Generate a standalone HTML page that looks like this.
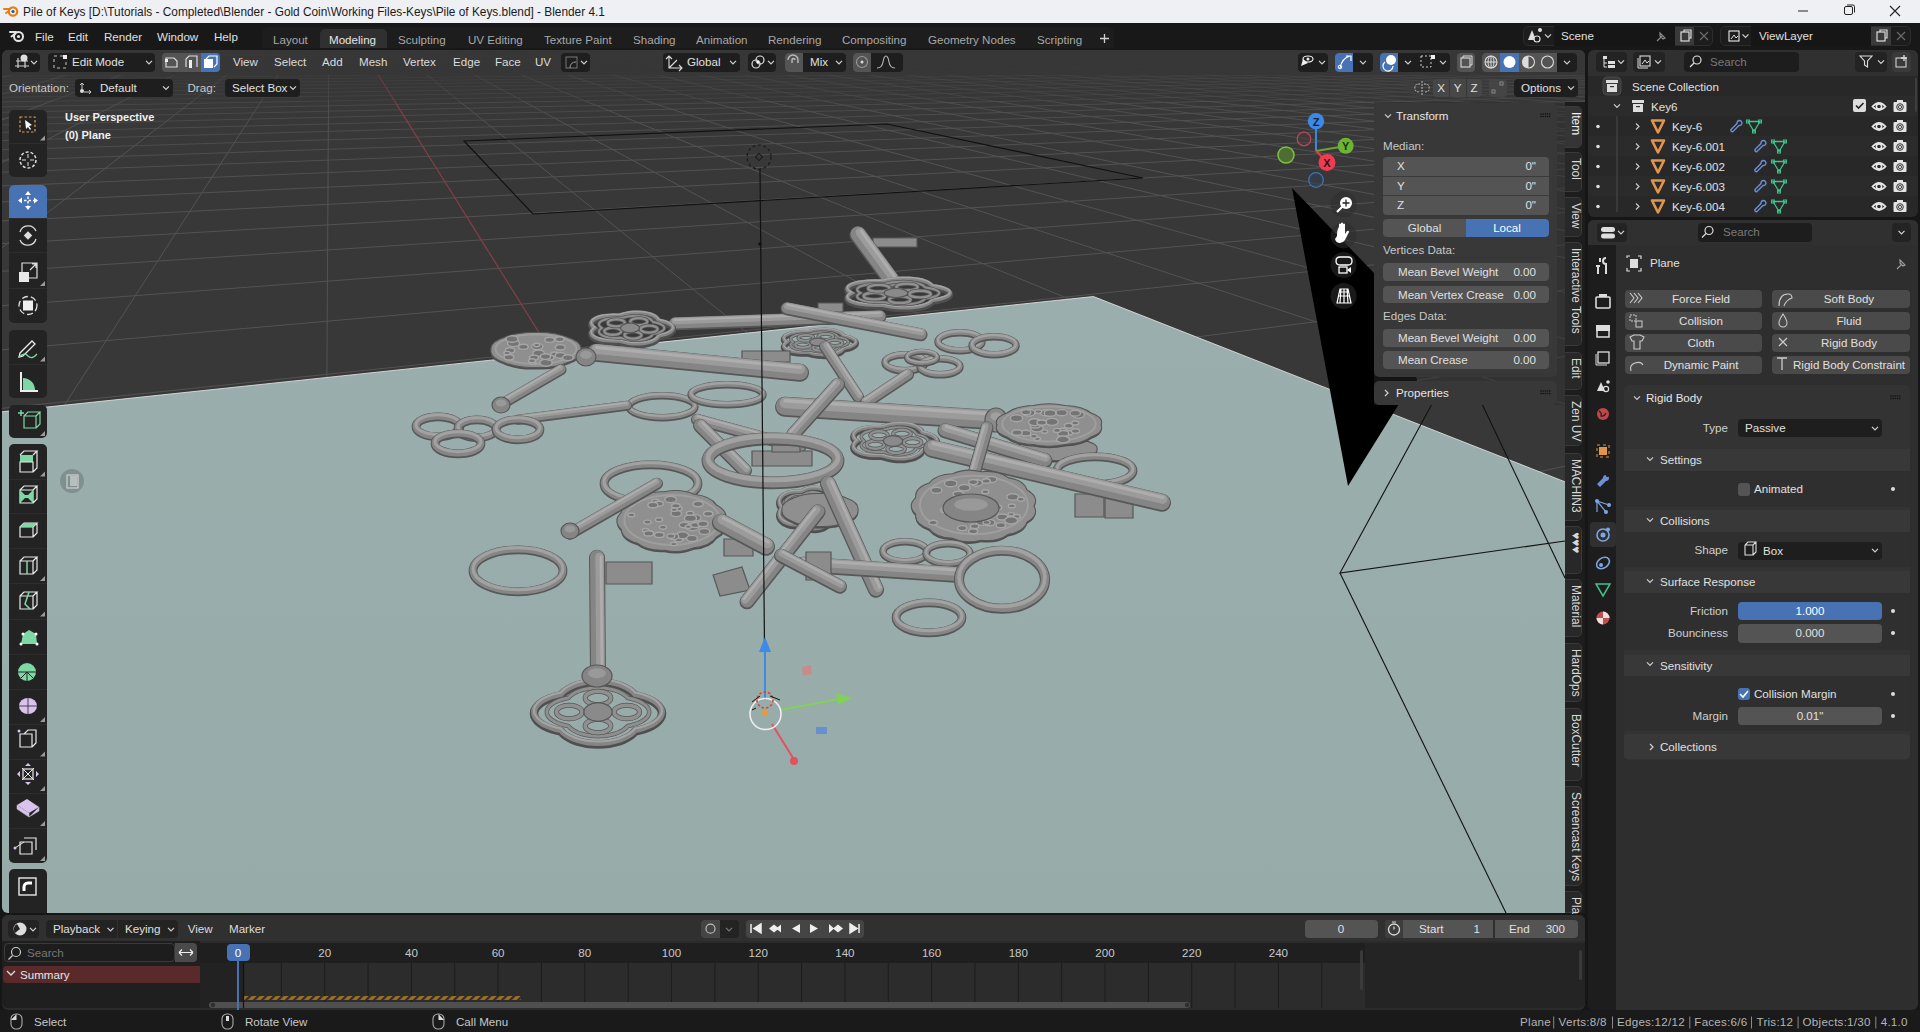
<!DOCTYPE html><html><head><meta charset="utf-8"><style>*{margin:0;padding:0;box-sizing:border-box}
html,body{width:1920px;height:1032px;overflow:hidden;background:#161616;font-family:"Liberation Sans",sans-serif;color:#dcdcdc}
.a{position:absolute}
.t{position:absolute;white-space:nowrap;line-height:1}
svg{overflow:visible}
</style></head><body><div class="a" style="left:0px;top:0px;width:1920px;height:23px;background:#eff0f4;border-radius:0px;"></div><svg class="a" style="left:0px;top:0px;" width="40" height="23" viewBox="0 0 40 23"><circle cx="13" cy="11.5" r="4.2" fill="none" stroke="#e87d0d" stroke-width="2.2"/><circle cx="13" cy="11.5" r="1.6" fill="#265787"/><path d="M4,9 L10,9 M6,13 L9,11" stroke="#e87d0d" stroke-width="2" stroke-linecap="round"/></svg><div class="t" style="left:23px;top:6.9935px;font-size:11.85px;color:#1a1a1a;font-weight:normal;">Pile of Keys [D:\Tutorials - Completed\Blender - Gold Coin\Working Files-Keys\Pile of Keys.blend] - Blender 4.1</div><svg class="a" style="left:1780px;top:0px;" width="140" height="23" viewBox="1780 0 140 23"><path d="M1798,11 h10" stroke="#222" stroke-width="1"/><rect x="1844.5" y="6.5" width="8" height="8" rx="1.5" fill="none" stroke="#222"/><path d="M1847,5 h6 a1.5,1.5 0 0 1 1.5,1.5 v6" fill="none" stroke="#222"/><path d="M1890,6 l10,10 M1900,6 l-10,10" stroke="#222" stroke-width="1.1"/></svg><div class="a" style="left:0px;top:23px;width:1920px;height:27px;background:#181818;border-radius:0px;"></div><svg class="a" style="left:0px;top:23px;" width="30" height="27" viewBox="0 23 30 27"><circle cx="18.5" cy="36.5" r="4.5" fill="none" stroke="#e6e6e6" stroke-width="2"/><circle cx="18.5" cy="36.5" r="1.6" fill="#e6e6e6"/><path d="M10,32 h6 M11.5,36.5 l4,-3" stroke="#e6e6e6" stroke-width="2" stroke-linecap="round"/></svg><div class="t" style="left:35px;top:31.316px;font-size:11.6px;color:#e0e0e0;font-weight:normal;">File</div><div class="t" style="left:68px;top:31.316px;font-size:11.6px;color:#e0e0e0;font-weight:normal;">Edit</div><div class="t" style="left:104px;top:31.316px;font-size:11.6px;color:#e0e0e0;font-weight:normal;">Render</div><div class="t" style="left:157px;top:31.316px;font-size:11.6px;color:#e0e0e0;font-weight:normal;">Window</div><div class="t" style="left:214px;top:31.316px;font-size:11.6px;color:#e0e0e0;font-weight:normal;">Help</div><div class="a" style="left:262px;top:27px;width:852px;height:20.5px;background:#1d1d1d;border-radius:6px 6px 0 0;"></div><div class="a" style="left:320px;top:29px;width:67px;height:18.5px;background:#303030;border-radius:5px 5px 0 0;"></div><div class="t" style="left:273px;top:33.816px;font-size:11.6px;color:#a8a8a8;font-weight:normal;">Layout</div><div class="t" style="left:329px;top:33.816px;font-size:11.6px;color:#e6e6e6;font-weight:normal;">Modeling</div><div class="t" style="left:398px;top:33.816px;font-size:11.6px;color:#a8a8a8;font-weight:normal;">Sculpting</div><div class="t" style="left:468px;top:33.816px;font-size:11.6px;color:#a8a8a8;font-weight:normal;">UV Editing</div><div class="t" style="left:544px;top:33.816px;font-size:11.6px;color:#a8a8a8;font-weight:normal;">Texture Paint</div><div class="t" style="left:633px;top:33.816px;font-size:11.6px;color:#a8a8a8;font-weight:normal;">Shading</div><div class="t" style="left:696px;top:33.816px;font-size:11.6px;color:#a8a8a8;font-weight:normal;">Animation</div><div class="t" style="left:768px;top:33.816px;font-size:11.6px;color:#a8a8a8;font-weight:normal;">Rendering</div><div class="t" style="left:842px;top:33.816px;font-size:11.6px;color:#a8a8a8;font-weight:normal;">Compositing</div><div class="t" style="left:928px;top:33.816px;font-size:11.6px;color:#a8a8a8;font-weight:normal;">Geometry Nodes</div><div class="t" style="left:1037px;top:33.816px;font-size:11.6px;color:#a8a8a8;font-weight:normal;">Scripting</div><svg class="a" style="left:1095px;top:28px;" width="20" height="22" viewBox="1095 28 20 22"><path d="M1100,38.5 h9 M1104.5,34 v9" stroke="#cfcfcf" stroke-width="1.3"/></svg><div class="a" style="left:1523px;top:26px;width:190px;height:19.5px;background:#1d1d1d;border-radius:5px;border:1px solid #2c2c2c"></div><div class="a" style="left:1554px;top:26px;width:121px;height:19.5px;background:#161616;border-radius:0px;"></div><div class="a" style="left:1675px;top:27px;width:19px;height:17.5px;background:#3a3a3a;border-radius:0px;"></div><div class="t" style="left:1561px;top:30.316px;font-size:11.6px;color:#e0e0e0;font-weight:normal;">Scene</div><div class="a" style="left:1720px;top:26px;width:191px;height:19.5px;background:#1d1d1d;border-radius:5px;border:1px solid #2c2c2c"></div><div class="a" style="left:1751px;top:26px;width:120px;height:19.5px;background:#161616;border-radius:0px;"></div><div class="a" style="left:1871px;top:27px;width:20px;height:17.5px;background:#3a3a3a;border-radius:0px;"></div><div class="t" style="left:1759px;top:30.316px;font-size:11.6px;color:#e0e0e0;font-weight:normal;">ViewLayer</div><svg class="a" style="left:1523px;top:26px;" width="390" height="20" viewBox="1523 26 390 20"><path d="M1528,40 l4,-10 l4,10 z" fill="#ddd"/><circle cx="1537" cy="39" r="3" fill="#1d1d1d" stroke="#ddd" stroke-width="1.2"/><circle cx="1540" cy="30" r="2" fill="#ddd"/><path d="M1545,34.4 l3,3 l3,-3" fill="none" stroke="#cfcfcf" stroke-width="1.3"/><path d="M1657,41 l5,-5 M1660,33 l5,5 l-2,1 l-3,-3 z" stroke="#8a8a8a" fill="none" stroke-width="1.2"/><rect x="1681" y="32" width="8" height="9" fill="none" stroke="#ddd" stroke-width="1.2"/><path d="M1684,32 v-2 h7 v8 h-2" fill="none" stroke="#ddd" stroke-width="1.2"/><path d="M1700,32 l8,8 M1708,32 l-8,8" stroke="#6a6a6a" stroke-width="1.2"/><rect x="1729" y="31" width="10" height="10" fill="none" stroke="#ddd" stroke-width="1.2"/><path d="M1731,39 l3,-4 l2,3 l2,-2" stroke="#ddd" fill="none"/><path d="M1742.5,34.4 l3,3 l3,-3" fill="none" stroke="#cfcfcf" stroke-width="1.3"/><rect x="1877" y="32" width="8" height="9" fill="none" stroke="#ddd" stroke-width="1.2"/><path d="M1880,32 v-2 h7 v8 h-2" fill="none" stroke="#ddd" stroke-width="1.2"/><path d="M1897,32 l8,8 M1905,32 l-8,8" stroke="#6a6a6a" stroke-width="1.2"/></svg><svg class="a" style="left:0px;top:0px;" width="1920" height="1032" viewBox="0 0 1920 1032"><defs><clipPath id="vpc"><rect x="2" y="50" width="1583" height="863" rx="6"/></clipPath><linearGradient id="pg" x1="0" y1="300" x2="0" y2="913" gradientUnits="userSpaceOnUse"><stop offset="0" stop-color="#9aaead"/><stop offset="1" stop-color="#97aba9"/></linearGradient></defs><g clip-path="url(#vpc)"><rect x="2" y="50" width="1583" height="863" fill="#383838"/><g stroke="#535353" stroke-width="1" fill="none"><line x1="635.9" y1="984.6" x2="1753.9" y2="616.6" stroke-opacity="1.00"/><line x1="-73.7" y1="825.3" x2="1787.4" y2="417.4" stroke-opacity="1.00"/><line x1="-194" y1="642.4" x2="1778.2" y2="321.9" stroke-opacity="1.00"/><line x1="-172.6" y1="512.1" x2="1793.6" y2="260.6" stroke-opacity="1.00"/><line x1="-158.3" y1="425.1" x2="1786.5" y2="221.6" stroke-opacity="1.00"/><line x1="-148.1" y1="363" x2="1796.4" y2="192.1" stroke-opacity="1.00"/><line x1="-140.4" y1="316.4" x2="1790.7" y2="171.1" stroke-opacity="1.00"/><line x1="-188.2" y1="283.7" x2="1797.9" y2="153.8" stroke-opacity="1.00"/><line x1="-177.9" y1="254" x2="1793.2" y2="140.6" stroke-opacity="1.00"/><line x1="-169.5" y1="229.7" x2="1798.9" y2="129.3" stroke-opacity="0.99"/><line x1="-162.6" y1="209.5" x2="1794.9" y2="120.3" stroke-opacity="0.96"/><line x1="-194.3" y1="194" x2="1799.6" y2="112.3" stroke-opacity="0.92"/><line x1="-186.5" y1="179.2" x2="1796.1" y2="105.7" stroke-opacity="0.88"/><line x1="-179.7" y1="166.4" x2="1793.1" y2="100" stroke-opacity="0.84"/><line x1="-173.8" y1="155.2" x2="1797" y2="94.8" stroke-opacity="0.80"/><line x1="-197.6" y1="146.1" x2="1794.3" y2="90.4" stroke-opacity="0.76"/><line x1="-191.3" y1="137.3" x2="1797.7" y2="86.3" stroke-opacity="0.72"/><line x1="-185.7" y1="129.4" x2="1795.2" y2="82.7" stroke-opacity="0.69"/><line x1="-180.6" y1="122.3" x2="1798.3" y2="79.4" stroke-opacity="0.65"/><line x1="-199.6" y1="116.3" x2="1796" y2="76.6" stroke-opacity="0.61"/><line x1="-194.4" y1="110.5" x2="1798.7" y2="73.9" stroke-opacity="0.57"/><line x1="-189.6" y1="105.1" x2="1796.6" y2="71.5" stroke-opacity="0.53"/><line x1="-185.2" y1="100.2" x2="1799.1" y2="69.2" stroke-opacity="0.49"/><line x1="-181.2" y1="95.7" x2="1797.2" y2="67.2" stroke-opacity="0.45"/><line x1="-196.5" y1="91.8" x2="1799.4" y2="65.3" stroke-opacity="0.41"/><line x1="-192.3" y1="88" x2="1797.6" y2="63.5" stroke-opacity="0.38"/><line x1="-188.5" y1="84.4" x2="1799.7" y2="61.9" stroke-opacity="0.34"/><line x1="-184.9" y1="81.1" x2="1798" y2="60.4" stroke-opacity="0.30"/><line x1="-198.1" y1="78.1" x2="1800" y2="59" stroke-opacity="0.30"/><line x1="-194.4" y1="75.2" x2="1798.4" y2="57.6" stroke-opacity="0.30"/><line x1="-190.9" y1="72.5" x2="1796.9" y2="56.4" stroke-opacity="0.30"/><line x1="-187.7" y1="69.9" x2="1798.7" y2="55.2" stroke-opacity="0.30"/><line x1="-199.3" y1="67.6" x2="1797.3" y2="54.1" stroke-opacity="0.30"/><line x1="-196" y1="65.4" x2="1798.9" y2="53.1" stroke-opacity="0.30"/><line x1="-192.9" y1="63.2" x2="1797.6" y2="52.1" stroke-opacity="0.30"/><line x1="-189.9" y1="61.2" x2="1799.2" y2="51.2" stroke-opacity="0.30"/><line x1="-187.1" y1="59.3" x2="1797.9" y2="50.3" stroke-opacity="0.30"/><line x1="-197.2" y1="57.5" x2="1799.4" y2="49.5" stroke-opacity="0.30"/><line x1="-194.4" y1="55.8" x2="1798.2" y2="48.7" stroke-opacity="0.30"/><line x1="-191.7" y1="54.1" x2="1799.6" y2="47.9" stroke-opacity="0.30"/><line x1="-189.2" y1="52.6" x2="1798.4" y2="47.2" stroke-opacity="0.30"/><line x1="-198.3" y1="51.1" x2="1799.8" y2="46.5" stroke-opacity="0.30"/><line x1="-195.7" y1="49.7" x2="1798.6" y2="45.9" stroke-opacity="0.30"/><line x1="-193.2" y1="48.3" x2="1799.9" y2="45.3" stroke-opacity="0.30"/><line x1="-190.8" y1="47" x2="1798.8" y2="44.7" stroke-opacity="0.30"/><line x1="-199.1" y1="45.8" x2="1797.8" y2="44.1" stroke-opacity="0.30"/><line x1="-196.7" y1="44.6" x2="1799" y2="43.6" stroke-opacity="0.30"/><line x1="-194.4" y1="43.5" x2="1798" y2="43" stroke-opacity="0.30"/><line x1="-192.2" y1="42.4" x2="1799.2" y2="42.5" stroke-opacity="0.30"/><line x1="-199.9" y1="41.3" x2="1798.3" y2="42" stroke-opacity="0.30"/><line x1="-197.6" y1="40.3" x2="1799.4" y2="41.6" stroke-opacity="0.30"/><line x1="-195.5" y1="39.3" x2="1798.4" y2="41.1" stroke-opacity="0.30"/><line x1="-193.4" y1="38.4" x2="1799.5" y2="40.7" stroke-opacity="0.30"/><line x1="-191.4" y1="37.5" x2="1798.6" y2="40.3" stroke-opacity="0.30"/><line x1="-198.4" y1="36.6" x2="1799.7" y2="39.9" stroke-opacity="0.30"/><line x1="-196.4" y1="35.8" x2="1798.8" y2="39.5" stroke-opacity="0.30"/><line x1="-194.4" y1="35" x2="1799.8" y2="39.1" stroke-opacity="0.30"/><line x1="-192.5" y1="34.2" x2="1798.9" y2="38.8" stroke-opacity="0.30"/><line x1="-199" y1="33.4" x2="1799.9" y2="38.4" stroke-opacity="0.30"/><line x1="-197.1" y1="32.7" x2="1799.1" y2="38.1" stroke-opacity="0.30"/><line x1="-195.3" y1="32" x2="1798.3" y2="37.8" stroke-opacity="0.30"/><line x1="-193.5" y1="31.3" x2="1799.2" y2="37.4" stroke-opacity="0.30"/><line x1="-199.6" y1="30.6" x2="1798.5" y2="37.1" stroke-opacity="0.30"/><line x1="-182.5" y1="30" x2="1799.4" y2="36.8" stroke-opacity="0.30"/><line x1="-9.6" y1="30" x2="1798.6" y2="36.5" stroke-opacity="0.30"/><line x1="143.4" y1="30" x2="1799.5" y2="36.3" stroke-opacity="0.30"/><line x1="279.6" y1="30" x2="1798.8" y2="36" stroke-opacity="0.30"/><line x1="-215.8" y1="33.4" x2="-185.7" y2="31.3" stroke-opacity="0.30"/><line x1="-185.7" y1="31.3" x2="-158.7" y2="29.5" stroke-opacity="0.30"/><line x1="-213.9" y1="35.7" x2="-182.5" y2="33.5" stroke-opacity="0.30"/><line x1="-182.5" y1="33.5" x2="-154.4" y2="31.4" stroke-opacity="0.30"/><line x1="-154.4" y1="31.4" x2="-129.3" y2="29.6" stroke-opacity="0.30"/><line x1="-211.9" y1="38.4" x2="-179" y2="35.8" stroke-opacity="0.30"/><line x1="-179" y1="35.8" x2="-149.8" y2="33.5" stroke-opacity="0.30"/><line x1="-149.8" y1="33.5" x2="-123.7" y2="31.5" stroke-opacity="0.30"/><line x1="-123.7" y1="31.5" x2="-100.4" y2="29.7" stroke-opacity="0.30"/><line x1="-209.7" y1="41.3" x2="-175.1" y2="38.4" stroke-opacity="0.30"/><line x1="-175.1" y1="38.4" x2="-144.6" y2="35.9" stroke-opacity="0.30"/><line x1="-144.6" y1="35.9" x2="-117.6" y2="33.6" stroke-opacity="0.30"/><line x1="-117.6" y1="33.6" x2="-93.6" y2="31.6" stroke-opacity="0.30"/><line x1="-93.6" y1="31.6" x2="-72" y2="29.8" stroke-opacity="0.30"/><line x1="-207.1" y1="44.6" x2="-170.7" y2="41.3" stroke-opacity="0.30"/><line x1="-170.7" y1="41.3" x2="-138.9" y2="38.5" stroke-opacity="0.30"/><line x1="-138.9" y1="38.5" x2="-110.9" y2="35.9" stroke-opacity="0.30"/><line x1="-110.9" y1="35.9" x2="-86.1" y2="33.7" stroke-opacity="0.30"/><line x1="-86.1" y1="33.7" x2="-63.9" y2="31.7" stroke-opacity="0.30"/><line x1="-63.9" y1="31.7" x2="-44" y2="29.9" stroke-opacity="0.30"/><line x1="-204.3" y1="48.3" x2="-165.8" y2="44.6" stroke-opacity="0.30"/><line x1="-165.8" y1="44.6" x2="-132.5" y2="41.3" stroke-opacity="0.30"/><line x1="-132.5" y1="41.3" x2="-103.5" y2="38.5" stroke-opacity="0.30"/><line x1="-103.5" y1="38.5" x2="-77.8" y2="36" stroke-opacity="0.30"/><line x1="-77.8" y1="36" x2="-55" y2="33.8" stroke-opacity="0.30"/><line x1="-55" y1="33.8" x2="-34.7" y2="31.8" stroke-opacity="0.30"/><line x1="-34.7" y1="31.8" x2="-16.4" y2="30" stroke-opacity="0.30"/><line x1="-201" y1="52.6" x2="-160.3" y2="48.3" stroke-opacity="0.36"/><line x1="-160.3" y1="48.3" x2="-125.4" y2="44.6" stroke-opacity="0.30"/><line x1="-125.4" y1="44.6" x2="-95.2" y2="41.4" stroke-opacity="0.30"/><line x1="-95.2" y1="41.4" x2="-68.7" y2="38.5" stroke-opacity="0.30"/><line x1="-68.7" y1="38.5" x2="-45.3" y2="36.1" stroke-opacity="0.30"/><line x1="-45.3" y1="36.1" x2="-24.6" y2="33.8" stroke-opacity="0.30"/><line x1="-24.6" y1="33.8" x2="-6" y2="31.9" stroke-opacity="0.30"/><line x1="-6" y1="31.9" x2="10.8" y2="30.1" stroke-opacity="0.30"/><line x1="10.8" y1="30.1" x2="25.9" y2="28.5" stroke-opacity="0.30"/><line x1="-248.9" y1="63.5" x2="-197.2" y2="57.5" stroke-opacity="0.51"/><line x1="-197.2" y1="57.5" x2="-154" y2="52.5" stroke-opacity="0.43"/><line x1="-154" y1="52.5" x2="-117.4" y2="48.2" stroke-opacity="0.34"/><line x1="-117.4" y1="48.2" x2="-85.9" y2="44.6" stroke-opacity="0.30"/><line x1="-85.9" y1="44.6" x2="-58.6" y2="41.4" stroke-opacity="0.30"/><line x1="-58.6" y1="41.4" x2="-34.6" y2="38.6" stroke-opacity="0.30"/><line x1="-34.6" y1="38.6" x2="-13.4" y2="36.1" stroke-opacity="0.30"/><line x1="-13.4" y1="36.1" x2="5.4" y2="33.9" stroke-opacity="0.30"/><line x1="5.4" y1="33.9" x2="22.3" y2="32" stroke-opacity="0.30"/><line x1="22.3" y1="32" x2="37.5" y2="30.2" stroke-opacity="0.30"/><line x1="37.5" y1="30.2" x2="51.3" y2="28.6" stroke-opacity="0.30"/><line x1="-248.8" y1="70.4" x2="-192.9" y2="63.2" stroke-opacity="0.59"/><line x1="-192.9" y1="63.2" x2="-146.8" y2="57.3" stroke-opacity="0.50"/><line x1="-146.8" y1="57.3" x2="-108.2" y2="52.4" stroke-opacity="0.42"/><line x1="-108.2" y1="52.4" x2="-75.5" y2="48.2" stroke-opacity="0.33"/><line x1="-75.5" y1="48.2" x2="-47.2" y2="44.5" stroke-opacity="0.30"/><line x1="-47.2" y1="44.5" x2="-22.7" y2="41.4" stroke-opacity="0.30"/><line x1="-22.7" y1="41.4" x2="-1.2" y2="38.6" stroke-opacity="0.30"/><line x1="-1.2" y1="38.6" x2="17.9" y2="36.2" stroke-opacity="0.30"/><line x1="17.9" y1="36.2" x2="34.9" y2="34" stroke-opacity="0.30"/><line x1="34.9" y1="34" x2="50.1" y2="32" stroke-opacity="0.30"/><line x1="50.1" y1="32" x2="63.8" y2="30.3" stroke-opacity="0.30"/><line x1="63.8" y1="30.3" x2="76.2" y2="28.7" stroke-opacity="0.30"/><line x1="-248.6" y1="78.6" x2="-187.7" y2="69.9" stroke-opacity="0.66"/><line x1="-187.7" y1="69.9" x2="-138.5" y2="62.9" stroke-opacity="0.57"/><line x1="-138.5" y1="62.9" x2="-97.8" y2="57.1" stroke-opacity="0.49"/><line x1="-97.8" y1="57.1" x2="-63.6" y2="52.2" stroke-opacity="0.40"/><line x1="-63.6" y1="52.2" x2="-34.5" y2="48.1" stroke-opacity="0.32"/><line x1="-34.5" y1="48.1" x2="-9.4" y2="44.5" stroke-opacity="0.30"/><line x1="-9.4" y1="44.5" x2="12.5" y2="41.4" stroke-opacity="0.30"/><line x1="12.5" y1="41.4" x2="31.7" y2="38.7" stroke-opacity="0.30"/><line x1="31.7" y1="38.7" x2="48.7" y2="36.2" stroke-opacity="0.30"/><line x1="48.7" y1="36.2" x2="63.8" y2="34.1" stroke-opacity="0.30"/><line x1="63.8" y1="34.1" x2="77.5" y2="32.1" stroke-opacity="0.30"/><line x1="77.5" y1="32.1" x2="89.7" y2="30.4" stroke-opacity="0.30"/><line x1="89.7" y1="30.4" x2="100.9" y2="28.8" stroke-opacity="0.30"/><line x1="-248.3" y1="88.7" x2="-181.6" y2="78" stroke-opacity="0.73"/><line x1="-181.6" y1="78" x2="-128.6" y2="69.5" stroke-opacity="0.65"/><line x1="-128.6" y1="69.5" x2="-85.6" y2="62.6" stroke-opacity="0.56"/><line x1="-85.6" y1="62.6" x2="-50" y2="56.9" stroke-opacity="0.48"/><line x1="-50" y1="56.9" x2="-20" y2="52.1" stroke-opacity="0.39"/><line x1="-20" y1="52.1" x2="5.6" y2="48" stroke-opacity="0.30"/><line x1="5.6" y1="48" x2="27.7" y2="44.5" stroke-opacity="0.30"/><line x1="27.7" y1="44.5" x2="46.9" y2="41.4" stroke-opacity="0.30"/><line x1="46.9" y1="41.4" x2="63.9" y2="38.7" stroke-opacity="0.30"/><line x1="63.9" y1="38.7" x2="78.9" y2="36.3" stroke-opacity="0.30"/><line x1="78.9" y1="36.3" x2="92.3" y2="34.1" stroke-opacity="0.30"/><line x1="92.3" y1="34.1" x2="104.4" y2="32.2" stroke-opacity="0.30"/><line x1="104.4" y1="32.2" x2="115.3" y2="30.5" stroke-opacity="0.30"/><line x1="115.3" y1="30.5" x2="125.2" y2="28.9" stroke-opacity="0.30"/><line x1="-248" y1="101.2" x2="-174.1" y2="87.7" stroke-opacity="0.80"/><line x1="-174.1" y1="87.7" x2="-116.9" y2="77.3" stroke-opacity="0.72"/><line x1="-116.9" y1="77.3" x2="-71.4" y2="69.1" stroke-opacity="0.63"/><line x1="-71.4" y1="69.1" x2="-34.3" y2="62.3" stroke-opacity="0.55"/><line x1="-34.3" y1="62.3" x2="-3.5" y2="56.7" stroke-opacity="0.46"/><line x1="-3.5" y1="56.7" x2="22.5" y2="52" stroke-opacity="0.38"/><line x1="22.5" y1="52" x2="44.7" y2="48" stroke-opacity="0.30"/><line x1="44.7" y1="48" x2="63.9" y2="44.5" stroke-opacity="0.30"/><line x1="63.9" y1="44.5" x2="80.7" y2="41.4" stroke-opacity="0.30"/><line x1="80.7" y1="41.4" x2="95.5" y2="38.7" stroke-opacity="0.30"/><line x1="95.5" y1="38.7" x2="108.6" y2="36.3" stroke-opacity="0.30"/><line x1="108.6" y1="36.3" x2="120.3" y2="34.2" stroke-opacity="0.30"/><line x1="120.3" y1="34.2" x2="130.9" y2="32.3" stroke-opacity="0.30"/><line x1="130.9" y1="32.3" x2="140.4" y2="30.6" stroke-opacity="0.30"/><line x1="140.4" y1="30.6" x2="149.1" y2="29" stroke-opacity="0.30"/><line x1="-247.6" y1="117.3" x2="-164.7" y2="99.9" stroke-opacity="0.87"/><line x1="-164.7" y1="99.9" x2="-102.7" y2="86.9" stroke-opacity="0.79"/><line x1="-102.7" y1="86.9" x2="-54.4" y2="76.8" stroke-opacity="0.70"/><line x1="-54.4" y1="76.8" x2="-15.9" y2="68.7" stroke-opacity="0.62"/><line x1="-15.9" y1="68.7" x2="15.6" y2="62.1" stroke-opacity="0.53"/><line x1="15.6" y1="62.1" x2="41.8" y2="56.6" stroke-opacity="0.45"/><line x1="41.8" y1="56.6" x2="64" y2="51.9" stroke-opacity="0.36"/><line x1="64" y1="51.9" x2="83" y2="47.9" stroke-opacity="0.30"/><line x1="83" y1="47.9" x2="99.4" y2="44.5" stroke-opacity="0.30"/><line x1="99.4" y1="44.5" x2="113.8" y2="41.4" stroke-opacity="0.30"/><line x1="113.8" y1="41.4" x2="126.5" y2="38.8" stroke-opacity="0.30"/><line x1="126.5" y1="38.8" x2="137.8" y2="36.4" stroke-opacity="0.30"/><line x1="137.8" y1="36.4" x2="147.9" y2="34.3" stroke-opacity="0.30"/><line x1="147.9" y1="34.3" x2="157" y2="32.4" stroke-opacity="0.30"/><line x1="157" y1="32.4" x2="165.2" y2="30.7" stroke-opacity="0.30"/><line x1="165.2" y1="30.7" x2="172.7" y2="29.1" stroke-opacity="0.30"/><line x1="-247.1" y1="138.7" x2="-152.8" y2="115.4" stroke-opacity="0.95"/><line x1="-152.8" y1="115.4" x2="-85.1" y2="98.6" stroke-opacity="0.86"/><line x1="-85.1" y1="98.6" x2="-34" y2="86" stroke-opacity="0.78"/><line x1="-34" y1="86" x2="5.9" y2="76.2" stroke-opacity="0.69"/><line x1="5.9" y1="76.2" x2="37.8" y2="68.3" stroke-opacity="0.61"/><line x1="37.8" y1="68.3" x2="64.1" y2="61.8" stroke-opacity="0.52"/><line x1="64.1" y1="61.8" x2="85.9" y2="56.4" stroke-opacity="0.44"/><line x1="85.9" y1="56.4" x2="104.5" y2="51.8" stroke-opacity="0.35"/><line x1="104.5" y1="51.8" x2="120.4" y2="47.9" stroke-opacity="0.30"/><line x1="120.4" y1="47.9" x2="134.2" y2="44.4" stroke-opacity="0.30"/><line x1="134.2" y1="44.4" x2="146.3" y2="41.4" stroke-opacity="0.30"/><line x1="146.3" y1="41.4" x2="157" y2="38.8" stroke-opacity="0.30"/><line x1="157" y1="38.8" x2="166.5" y2="36.5" stroke-opacity="0.30"/><line x1="166.5" y1="36.5" x2="175" y2="34.3" stroke-opacity="0.30"/><line x1="175" y1="34.3" x2="182.7" y2="32.5" stroke-opacity="0.30"/><line x1="182.7" y1="32.5" x2="189.6" y2="30.7" stroke-opacity="0.30"/><line x1="189.6" y1="30.7" x2="195.9" y2="29.2" stroke-opacity="0.30"/><line x1="-246.4" y1="168.6" x2="-137.1" y2="135.9" stroke-opacity="1.00"/><line x1="-137.1" y1="135.9" x2="-62.7" y2="113.6" stroke-opacity="0.93"/><line x1="-62.7" y1="113.6" x2="-8.8" y2="97.5" stroke-opacity="0.85"/><line x1="-8.8" y1="97.5" x2="32.1" y2="85.2" stroke-opacity="0.76"/><line x1="32.1" y1="85.2" x2="64.2" y2="75.6" stroke-opacity="0.68"/><line x1="64.2" y1="75.6" x2="90" y2="67.9" stroke-opacity="0.59"/><line x1="90" y1="67.9" x2="111.2" y2="61.5" stroke-opacity="0.51"/><line x1="111.2" y1="61.5" x2="129" y2="56.2" stroke-opacity="0.42"/><line x1="129" y1="56.2" x2="144.1" y2="51.7" stroke-opacity="0.34"/><line x1="144.1" y1="51.7" x2="157" y2="47.8" stroke-opacity="0.30"/><line x1="157" y1="47.8" x2="168.3" y2="44.4" stroke-opacity="0.30"/><line x1="168.3" y1="44.4" x2="178.2" y2="41.5" stroke-opacity="0.30"/><line x1="178.2" y1="41.5" x2="186.9" y2="38.8" stroke-opacity="0.30"/><line x1="186.9" y1="38.8" x2="194.7" y2="36.5" stroke-opacity="0.30"/><line x1="194.7" y1="36.5" x2="201.7" y2="34.4" stroke-opacity="0.30"/><line x1="201.7" y1="34.4" x2="208" y2="32.5" stroke-opacity="0.30"/><line x1="208" y1="32.5" x2="213.7" y2="30.8" stroke-opacity="0.30"/><line x1="213.7" y1="30.8" x2="218.9" y2="29.3" stroke-opacity="0.30"/><line x1="-245.3" y1="213.3" x2="-115.4" y2="164.2" stroke-opacity="1.00"/><line x1="-115.4" y1="164.2" x2="-33.4" y2="133.2" stroke-opacity="1.00"/><line x1="-33.4" y1="133.2" x2="23.1" y2="111.9" stroke-opacity="0.92"/><line x1="23.1" y1="111.9" x2="64.3" y2="96.3" stroke-opacity="0.84"/><line x1="64.3" y1="96.3" x2="95.8" y2="84.4" stroke-opacity="0.75"/><line x1="95.8" y1="84.4" x2="120.5" y2="75.1" stroke-opacity="0.66"/><line x1="120.5" y1="75.1" x2="140.6" y2="67.5" stroke-opacity="0.58"/><line x1="140.6" y1="67.5" x2="157.1" y2="61.3" stroke-opacity="0.49"/><line x1="157.1" y1="61.3" x2="170.9" y2="56" stroke-opacity="0.41"/><line x1="170.9" y1="56" x2="182.7" y2="51.6" stroke-opacity="0.32"/><line x1="182.7" y1="51.6" x2="192.9" y2="47.7" stroke-opacity="0.30"/><line x1="192.9" y1="47.7" x2="201.7" y2="44.4" stroke-opacity="0.30"/><line x1="201.7" y1="44.4" x2="209.5" y2="41.5" stroke-opacity="0.30"/><line x1="209.5" y1="41.5" x2="216.3" y2="38.9" stroke-opacity="0.30"/><line x1="216.3" y1="38.9" x2="222.5" y2="36.6" stroke-opacity="0.30"/><line x1="222.5" y1="36.6" x2="228" y2="34.5" stroke-opacity="0.30"/><line x1="228" y1="34.5" x2="232.9" y2="32.6" stroke-opacity="0.30"/><line x1="232.9" y1="32.6" x2="237.4" y2="30.9" stroke-opacity="0.30"/><line x1="237.4" y1="30.9" x2="241.5" y2="29.4" stroke-opacity="0.30"/><line x1="-243.5" y1="287.3" x2="-83.4" y2="205.9" stroke-opacity="1.00"/><line x1="-83.4" y1="205.9" x2="6.8" y2="160.1" stroke-opacity="1.00"/><line x1="6.8" y1="160.1" x2="64.6" y2="130.7" stroke-opacity="0.99"/><line x1="64.6" y1="130.7" x2="104.8" y2="110.3" stroke-opacity="0.91"/><line x1="104.8" y1="110.3" x2="134.4" y2="95.2" stroke-opacity="0.82"/><line x1="134.4" y1="95.2" x2="157.1" y2="83.7" stroke-opacity="0.74"/><line x1="157.1" y1="83.7" x2="175.1" y2="74.5" stroke-opacity="0.65"/><line x1="175.1" y1="74.5" x2="189.7" y2="67.1" stroke-opacity="0.57"/><line x1="189.7" y1="67.1" x2="201.7" y2="61" stroke-opacity="0.48"/><line x1="201.7" y1="61" x2="211.9" y2="55.9" stroke-opacity="0.40"/><line x1="211.9" y1="55.9" x2="220.5" y2="51.5" stroke-opacity="0.31"/><line x1="220.5" y1="51.5" x2="228" y2="47.7" stroke-opacity="0.30"/><line x1="228" y1="47.7" x2="234.5" y2="44.4" stroke-opacity="0.30"/><line x1="234.5" y1="44.4" x2="240.2" y2="41.5" stroke-opacity="0.30"/><line x1="240.2" y1="41.5" x2="245.2" y2="38.9" stroke-opacity="0.30"/><line x1="245.2" y1="38.9" x2="249.7" y2="36.6" stroke-opacity="0.30"/><line x1="249.7" y1="36.6" x2="253.8" y2="34.5" stroke-opacity="0.30"/><line x1="253.8" y1="34.5" x2="257.5" y2="32.7" stroke-opacity="0.30"/><line x1="257.5" y1="32.7" x2="260.8" y2="31" stroke-opacity="0.30"/><line x1="260.8" y1="31" x2="263.8" y2="29.5" stroke-opacity="0.30"/><line x1="-240" y1="433.7" x2="-31.6" y2="273.5" stroke-opacity="1.00"/><line x1="-31.6" y1="273.5" x2="65.1" y2="199.2" stroke-opacity="1.00"/><line x1="65.1" y1="199.2" x2="120.9" y2="156.3" stroke-opacity="1.00"/><line x1="120.9" y1="156.3" x2="157.3" y2="128.3" stroke-opacity="0.98"/><line x1="157.3" y1="128.3" x2="182.8" y2="108.7" stroke-opacity="0.89"/><line x1="182.8" y1="108.7" x2="201.7" y2="94.2" stroke-opacity="0.81"/><line x1="201.7" y1="94.2" x2="216.3" y2="83" stroke-opacity="0.72"/><line x1="216.3" y1="83" x2="227.9" y2="74" stroke-opacity="0.64"/><line x1="227.9" y1="74" x2="237.4" y2="66.8" stroke-opacity="0.55"/><line x1="237.4" y1="66.8" x2="245.2" y2="60.8" stroke-opacity="0.47"/><line x1="245.2" y1="60.8" x2="251.8" y2="55.7" stroke-opacity="0.38"/><line x1="251.8" y1="55.7" x2="257.4" y2="51.4" stroke-opacity="0.30"/><line x1="257.4" y1="51.4" x2="262.3" y2="47.6" stroke-opacity="0.30"/><line x1="262.3" y1="47.6" x2="266.5" y2="44.4" stroke-opacity="0.30"/><line x1="266.5" y1="44.4" x2="270.3" y2="41.5" stroke-opacity="0.30"/><line x1="270.3" y1="41.5" x2="273.6" y2="38.9" stroke-opacity="0.30"/><line x1="273.6" y1="38.9" x2="276.6" y2="36.7" stroke-opacity="0.30"/><line x1="276.6" y1="36.7" x2="279.2" y2="34.6" stroke-opacity="0.30"/><line x1="279.2" y1="34.6" x2="281.7" y2="32.8" stroke-opacity="0.30"/><line x1="281.7" y1="32.8" x2="283.8" y2="31.1" stroke-opacity="0.30"/><line x1="283.8" y1="31.1" x2="285.8" y2="29.5" stroke-opacity="0.30"/><line x1="-229.7" y1="859.5" x2="66.7" y2="401.6" stroke-opacity="1.00"/><line x1="66.7" y1="401.6" x2="157.7" y2="261.1" stroke-opacity="1.00"/><line x1="157.7" y1="261.1" x2="201.8" y2="192.9" stroke-opacity="1.00"/><line x1="201.8" y1="192.9" x2="227.9" y2="152.7" stroke-opacity="1.00"/><line x1="227.9" y1="152.7" x2="245.1" y2="126.1" stroke-opacity="0.97"/><line x1="245.1" y1="126.1" x2="257.3" y2="107.2" stroke-opacity="0.88"/><line x1="257.3" y1="107.2" x2="266.4" y2="93.2" stroke-opacity="0.80"/><line x1="266.4" y1="93.2" x2="273.5" y2="82.3" stroke-opacity="0.71"/><line x1="273.5" y1="82.3" x2="279.1" y2="73.5" stroke-opacity="0.63"/><line x1="279.1" y1="73.5" x2="283.7" y2="66.4" stroke-opacity="0.54"/><line x1="283.7" y1="66.4" x2="287.5" y2="60.5" stroke-opacity="0.45"/><line x1="287.5" y1="60.5" x2="290.8" y2="55.6" stroke-opacity="0.37"/><line x1="290.8" y1="55.6" x2="293.5" y2="51.3" stroke-opacity="0.30"/><line x1="293.5" y1="51.3" x2="295.9" y2="47.6" stroke-opacity="0.30"/><line x1="295.9" y1="47.6" x2="298" y2="44.3" stroke-opacity="0.30"/><line x1="298" y1="44.3" x2="299.9" y2="41.5" stroke-opacity="0.30"/><line x1="299.9" y1="41.5" x2="301.5" y2="39" stroke-opacity="0.30"/><line x1="301.5" y1="39" x2="303" y2="36.7" stroke-opacity="0.30"/><line x1="303" y1="36.7" x2="304.3" y2="34.7" stroke-opacity="0.30"/><line x1="304.3" y1="34.7" x2="305.5" y2="32.8" stroke-opacity="0.30"/><line x1="305.5" y1="32.8" x2="306.6" y2="31.2" stroke-opacity="0.30"/><line x1="306.6" y1="31.2" x2="307.5" y2="29.6" stroke-opacity="0.30"/><line x1="324.7" y1="737.9" x2="326.9" y2="374.4" stroke-opacity="1.00"/><line x1="326.9" y1="374.4" x2="327.6" y2="250" stroke-opacity="1.00"/><line x1="327.6" y1="250" x2="328" y2="187.2" stroke-opacity="1.00"/><line x1="328" y1="187.2" x2="328.2" y2="149.3" stroke-opacity="1.00"/><line x1="328.2" y1="149.3" x2="328.4" y2="124" stroke-opacity="0.95"/><line x1="328.4" y1="124" x2="328.5" y2="105.8" stroke-opacity="0.87"/><line x1="328.5" y1="105.8" x2="328.6" y2="92.2" stroke-opacity="0.78"/><line x1="328.6" y1="92.2" x2="328.7" y2="81.6" stroke-opacity="0.70"/><line x1="328.7" y1="81.6" x2="328.7" y2="73.1" stroke-opacity="0.61"/><line x1="328.7" y1="73.1" x2="328.7" y2="66.1" stroke-opacity="0.53"/><line x1="328.7" y1="66.1" x2="328.8" y2="60.3" stroke-opacity="0.44"/><line x1="328.8" y1="60.3" x2="328.8" y2="55.4" stroke-opacity="0.36"/><line x1="328.8" y1="55.4" x2="328.8" y2="51.2" stroke-opacity="0.30"/><line x1="328.8" y1="51.2" x2="328.9" y2="47.5" stroke-opacity="0.30"/><line x1="328.9" y1="47.5" x2="328.9" y2="44.3" stroke-opacity="0.30"/><line x1="328.9" y1="44.3" x2="328.9" y2="41.5" stroke-opacity="0.30"/><line x1="328.9" y1="41.5" x2="328.9" y2="39" stroke-opacity="0.30"/><line x1="328.9" y1="39" x2="328.9" y2="36.8" stroke-opacity="0.30"/><line x1="328.9" y1="36.8" x2="328.9" y2="34.7" stroke-opacity="0.30"/><line x1="328.9" y1="34.7" x2="328.9" y2="32.9" stroke-opacity="0.30"/><line x1="328.9" y1="32.9" x2="329" y2="31.2" stroke-opacity="0.30"/><line x1="329" y1="31.2" x2="329" y2="29.7" stroke-opacity="0.30"/><line x1="3120.9" y1="2244.3" x2="1052.2" y2="578.5" stroke-opacity="1.00"/><line x1="1052.2" y1="578.5" x2="744.5" y2="330.7" stroke-opacity="1.00"/><line x1="744.5" y1="330.7" x2="620.5" y2="230.8" stroke-opacity="1.00"/><line x1="620.5" y1="230.8" x2="553.5" y2="176.9" stroke-opacity="1.00"/><line x1="553.5" y1="176.9" x2="511.6" y2="143.1" stroke-opacity="1.00"/><line x1="511.6" y1="143.1" x2="482.8" y2="120" stroke-opacity="0.93"/><line x1="482.8" y1="120" x2="461.9" y2="103.2" stroke-opacity="0.84"/><line x1="461.9" y1="103.2" x2="446" y2="90.4" stroke-opacity="0.76"/><line x1="446" y1="90.4" x2="433.5" y2="80.3" stroke-opacity="0.67"/><line x1="433.5" y1="80.3" x2="423.4" y2="72.2" stroke-opacity="0.59"/><line x1="423.4" y1="72.2" x2="415.1" y2="65.5" stroke-opacity="0.50"/><line x1="415.1" y1="65.5" x2="408.2" y2="59.9" stroke-opacity="0.42"/><line x1="408.2" y1="59.9" x2="402.3" y2="55.1" stroke-opacity="0.33"/><line x1="402.3" y1="55.1" x2="397.2" y2="51" stroke-opacity="0.30"/><line x1="397.2" y1="51" x2="392.7" y2="47.4" stroke-opacity="0.30"/><line x1="392.7" y1="47.4" x2="388.8" y2="44.3" stroke-opacity="0.30"/><line x1="388.8" y1="44.3" x2="385.4" y2="41.5" stroke-opacity="0.30"/><line x1="385.4" y1="41.5" x2="382.3" y2="39.1" stroke-opacity="0.30"/><line x1="382.3" y1="39.1" x2="379.6" y2="36.9" stroke-opacity="0.30"/><line x1="379.6" y1="36.9" x2="377.1" y2="34.9" stroke-opacity="0.30"/><line x1="377.1" y1="34.9" x2="374.9" y2="33" stroke-opacity="0.30"/><line x1="374.9" y1="33" x2="372.8" y2="31.4" stroke-opacity="0.30"/><line x1="372.8" y1="31.4" x2="371" y2="29.9" stroke-opacity="0.30"/><line x1="3236.3" y1="1568.7" x2="1303.7" y2="523.4" stroke-opacity="1.00"/><line x1="1303.7" y1="523.4" x2="914.6" y2="312.9" stroke-opacity="1.00"/><line x1="914.6" y1="312.9" x2="747.5" y2="222.5" stroke-opacity="1.00"/><line x1="747.5" y1="222.5" x2="654.6" y2="172.3" stroke-opacity="1.00"/><line x1="654.6" y1="172.3" x2="595.5" y2="140.3" stroke-opacity="1.00"/><line x1="595.5" y1="140.3" x2="554.6" y2="118.2" stroke-opacity="0.91"/><line x1="554.6" y1="118.2" x2="524.5" y2="101.9" stroke-opacity="0.83"/><line x1="524.5" y1="101.9" x2="501.5" y2="89.5" stroke-opacity="0.74"/><line x1="501.5" y1="89.5" x2="483.4" y2="79.7" stroke-opacity="0.66"/><line x1="483.4" y1="79.7" x2="468.7" y2="71.7" stroke-opacity="0.57"/><line x1="468.7" y1="71.7" x2="456.6" y2="65.2" stroke-opacity="0.49"/><line x1="456.6" y1="65.2" x2="446.4" y2="59.7" stroke-opacity="0.40"/><line x1="446.4" y1="59.7" x2="437.7" y2="55" stroke-opacity="0.32"/><line x1="437.7" y1="55" x2="430.2" y2="50.9" stroke-opacity="0.30"/><line x1="430.2" y1="50.9" x2="423.7" y2="47.4" stroke-opacity="0.30"/><line x1="423.7" y1="47.4" x2="418" y2="44.3" stroke-opacity="0.30"/><line x1="418" y1="44.3" x2="412.9" y2="41.5" stroke-opacity="0.30"/><line x1="412.9" y1="41.5" x2="408.4" y2="39.1" stroke-opacity="0.30"/><line x1="408.4" y1="39.1" x2="404.3" y2="36.9" stroke-opacity="0.30"/><line x1="404.3" y1="36.9" x2="400.7" y2="34.9" stroke-opacity="0.30"/><line x1="400.7" y1="34.9" x2="397.3" y2="33.1" stroke-opacity="0.30"/><line x1="397.3" y1="33.1" x2="394.3" y2="31.5" stroke-opacity="0.30"/><line x1="394.3" y1="31.5" x2="391.5" y2="30" stroke-opacity="0.30"/><line x1="3297.5" y1="1210.4" x2="1508.3" y2="478.5" stroke-opacity="1.00"/><line x1="1508.3" y1="478.5" x2="1064.8" y2="297.2" stroke-opacity="1.00"/><line x1="1064.8" y1="297.2" x2="863.8" y2="214.9" stroke-opacity="1.00"/><line x1="863.8" y1="214.9" x2="749" y2="168" stroke-opacity="1.00"/><line x1="749" y1="168" x2="674.8" y2="137.6" stroke-opacity="0.99"/><line x1="674.8" y1="137.6" x2="622.9" y2="116.4" stroke-opacity="0.90"/><line x1="622.9" y1="116.4" x2="584.6" y2="100.7" stroke-opacity="0.81"/><line x1="584.6" y1="100.7" x2="555.1" y2="88.6" stroke-opacity="0.73"/><line x1="555.1" y1="88.6" x2="531.7" y2="79.1" stroke-opacity="0.64"/><line x1="531.7" y1="79.1" x2="512.7" y2="71.3" stroke-opacity="0.56"/><line x1="512.7" y1="71.3" x2="496.9" y2="64.9" stroke-opacity="0.47"/><line x1="496.9" y1="64.9" x2="483.7" y2="59.4" stroke-opacity="0.39"/><line x1="483.7" y1="59.4" x2="472.4" y2="54.8" stroke-opacity="0.30"/><line x1="472.4" y1="54.8" x2="462.6" y2="50.8" stroke-opacity="0.30"/><line x1="462.6" y1="50.8" x2="454.1" y2="47.3" stroke-opacity="0.30"/><line x1="454.1" y1="47.3" x2="446.6" y2="44.3" stroke-opacity="0.30"/><line x1="446.6" y1="44.3" x2="439.9" y2="41.6" stroke-opacity="0.30"/><line x1="439.9" y1="41.6" x2="434" y2="39.1" stroke-opacity="0.30"/><line x1="434" y1="39.1" x2="428.7" y2="36.9" stroke-opacity="0.30"/><line x1="428.7" y1="36.9" x2="423.9" y2="35" stroke-opacity="0.30"/><line x1="423.9" y1="35" x2="419.5" y2="33.2" stroke-opacity="0.30"/><line x1="419.5" y1="33.2" x2="415.5" y2="31.6" stroke-opacity="0.30"/><line x1="415.5" y1="31.6" x2="411.8" y2="30.1" stroke-opacity="0.30"/><line x1="411.8" y1="30.1" x2="408.5" y2="28.7" stroke-opacity="0.30"/><line x1="3335.5" y1="988.3" x2="1678" y2="441.4" stroke-opacity="1.00"/><line x1="1678" y1="441.4" x2="1198.6" y2="283.2" stroke-opacity="1.00"/><line x1="1198.6" y1="283.2" x2="970.6" y2="207.9" stroke-opacity="1.00"/><line x1="970.6" y1="207.9" x2="837.4" y2="164" stroke-opacity="1.00"/><line x1="837.4" y1="164" x2="750" y2="135.1" stroke-opacity="0.97"/><line x1="750" y1="135.1" x2="688.2" y2="114.7" stroke-opacity="0.89"/><line x1="688.2" y1="114.7" x2="642.2" y2="99.6" stroke-opacity="0.80"/><line x1="642.2" y1="99.6" x2="606.7" y2="87.8" stroke-opacity="0.72"/><line x1="606.7" y1="87.8" x2="578.4" y2="78.5" stroke-opacity="0.63"/><line x1="578.4" y1="78.5" x2="555.4" y2="70.9" stroke-opacity="0.55"/><line x1="555.4" y1="70.9" x2="536.2" y2="64.6" stroke-opacity="0.46"/><line x1="536.2" y1="64.6" x2="520.1" y2="59.2" stroke-opacity="0.38"/><line x1="520.1" y1="59.2" x2="506.3" y2="54.7" stroke-opacity="0.30"/><line x1="506.3" y1="54.7" x2="494.3" y2="50.7" stroke-opacity="0.30"/><line x1="494.3" y1="50.7" x2="483.9" y2="47.3" stroke-opacity="0.30"/><line x1="483.9" y1="47.3" x2="474.7" y2="44.3" stroke-opacity="0.30"/><line x1="474.7" y1="44.3" x2="466.5" y2="41.6" stroke-opacity="0.30"/><line x1="466.5" y1="41.6" x2="459.2" y2="39.2" stroke-opacity="0.30"/><line x1="459.2" y1="39.2" x2="452.6" y2="37" stroke-opacity="0.30"/><line x1="452.6" y1="37" x2="446.7" y2="35" stroke-opacity="0.30"/><line x1="446.7" y1="35" x2="441.3" y2="33.3" stroke-opacity="0.30"/><line x1="441.3" y1="33.3" x2="436.4" y2="31.6" stroke-opacity="0.30"/><line x1="436.4" y1="31.6" x2="431.9" y2="30.1" stroke-opacity="0.30"/><line x1="431.9" y1="30.1" x2="427.8" y2="28.8" stroke-opacity="0.30"/><line x1="1821" y1="410" x2="1318.4" y2="270.6" stroke-opacity="1.00"/><line x1="1318.4" y1="270.6" x2="1069.1" y2="201.5" stroke-opacity="1.00"/><line x1="1069.1" y1="201.5" x2="920.2" y2="160.2" stroke-opacity="1.00"/><line x1="920.2" y1="160.2" x2="821.2" y2="132.7" stroke-opacity="0.96"/><line x1="821.2" y1="132.7" x2="750.6" y2="113.1" stroke-opacity="0.87"/><line x1="750.6" y1="113.1" x2="697.7" y2="98.5" stroke-opacity="0.79"/><line x1="697.7" y1="98.5" x2="656.6" y2="87.1" stroke-opacity="0.70"/><line x1="656.6" y1="87.1" x2="623.7" y2="77.9" stroke-opacity="0.62"/><line x1="623.7" y1="77.9" x2="596.9" y2="70.5" stroke-opacity="0.53"/><line x1="596.9" y1="70.5" x2="574.5" y2="64.3" stroke-opacity="0.45"/><line x1="574.5" y1="64.3" x2="555.6" y2="59" stroke-opacity="0.36"/><line x1="555.6" y1="59" x2="539.4" y2="54.6" stroke-opacity="0.30"/><line x1="539.4" y1="54.6" x2="525.3" y2="50.7" stroke-opacity="0.30"/><line x1="525.3" y1="50.7" x2="513.1" y2="47.2" stroke-opacity="0.30"/><line x1="513.1" y1="47.2" x2="502.2" y2="44.2" stroke-opacity="0.30"/><line x1="502.2" y1="44.2" x2="492.6" y2="41.6" stroke-opacity="0.30"/><line x1="492.6" y1="41.6" x2="484" y2="39.2" stroke-opacity="0.30"/><line x1="484" y1="39.2" x2="476.2" y2="37" stroke-opacity="0.30"/><line x1="476.2" y1="37" x2="469.2" y2="35.1" stroke-opacity="0.30"/><line x1="469.2" y1="35.1" x2="462.8" y2="33.3" stroke-opacity="0.30"/><line x1="462.8" y1="33.3" x2="457" y2="31.7" stroke-opacity="0.30"/><line x1="457" y1="31.7" x2="451.7" y2="30.2" stroke-opacity="0.30"/><line x1="451.7" y1="30.2" x2="446.8" y2="28.9" stroke-opacity="0.30"/><line x1="1943.1" y1="383.2" x2="1426.3" y2="259.3" stroke-opacity="1.00"/><line x1="1426.3" y1="259.3" x2="1160.2" y2="195.5" stroke-opacity="1.00"/><line x1="1160.2" y1="195.5" x2="998" y2="156.6" stroke-opacity="1.00"/><line x1="998" y1="156.6" x2="888.8" y2="130.4" stroke-opacity="0.95"/><line x1="888.8" y1="130.4" x2="810.2" y2="111.6" stroke-opacity="0.86"/><line x1="810.2" y1="111.6" x2="751" y2="97.4" stroke-opacity="0.78"/><line x1="751" y1="97.4" x2="704.8" y2="86.3" stroke-opacity="0.69"/><line x1="704.8" y1="86.3" x2="667.7" y2="77.4" stroke-opacity="0.61"/><line x1="667.7" y1="77.4" x2="637.2" y2="70.1" stroke-opacity="0.52"/><line x1="637.2" y1="70.1" x2="611.8" y2="64" stroke-opacity="0.43"/><line x1="611.8" y1="64" x2="590.3" y2="58.9" stroke-opacity="0.35"/><line x1="590.3" y1="58.9" x2="571.8" y2="54.4" stroke-opacity="0.30"/><line x1="571.8" y1="54.4" x2="555.8" y2="50.6" stroke-opacity="0.30"/><line x1="555.8" y1="50.6" x2="541.7" y2="47.2" stroke-opacity="0.30"/><line x1="541.7" y1="47.2" x2="529.3" y2="44.2" stroke-opacity="0.30"/><line x1="529.3" y1="44.2" x2="518.2" y2="41.6" stroke-opacity="0.30"/><line x1="518.2" y1="41.6" x2="508.4" y2="39.2" stroke-opacity="0.30"/><line x1="508.4" y1="39.2" x2="499.5" y2="37.1" stroke-opacity="0.30"/><line x1="499.5" y1="37.1" x2="491.4" y2="35.1" stroke-opacity="0.30"/><line x1="491.4" y1="35.1" x2="484.1" y2="33.4" stroke-opacity="0.30"/><line x1="484.1" y1="33.4" x2="477.4" y2="31.8" stroke-opacity="0.30"/><line x1="477.4" y1="31.8" x2="471.2" y2="30.3" stroke-opacity="0.30"/><line x1="471.2" y1="30.3" x2="465.6" y2="28.9" stroke-opacity="0.30"/><line x1="2048.7" y1="360.1" x2="1524.1" y2="249.1" stroke-opacity="1.00"/><line x1="1524.1" y1="249.1" x2="1244.8" y2="190" stroke-opacity="1.00"/><line x1="1244.8" y1="190" x2="1071.3" y2="153.3" stroke-opacity="1.00"/><line x1="1071.3" y1="153.3" x2="953.1" y2="128.3" stroke-opacity="0.93"/><line x1="953.1" y1="128.3" x2="867.4" y2="110.1" stroke-opacity="0.85"/><line x1="867.4" y1="110.1" x2="802.3" y2="96.4" stroke-opacity="0.76"/><line x1="802.3" y1="96.4" x2="751.3" y2="85.6" stroke-opacity="0.68"/><line x1="751.3" y1="85.6" x2="710.3" y2="76.9" stroke-opacity="0.59"/><line x1="710.3" y1="76.9" x2="676.5" y2="69.7" stroke-opacity="0.51"/><line x1="676.5" y1="69.7" x2="648.2" y2="63.8" stroke-opacity="0.42"/><line x1="648.2" y1="63.8" x2="624.2" y2="58.7" stroke-opacity="0.34"/><line x1="624.2" y1="58.7" x2="603.5" y2="54.3" stroke-opacity="0.30"/><line x1="603.5" y1="54.3" x2="585.5" y2="50.5" stroke-opacity="0.30"/><line x1="585.5" y1="50.5" x2="569.8" y2="47.2" stroke-opacity="0.30"/><line x1="569.8" y1="47.2" x2="555.9" y2="44.2" stroke-opacity="0.30"/><line x1="555.9" y1="44.2" x2="543.5" y2="41.6" stroke-opacity="0.30"/><line x1="543.5" y1="41.6" x2="532.3" y2="39.2" stroke-opacity="0.30"/><line x1="532.3" y1="39.2" x2="522.3" y2="37.1" stroke-opacity="0.30"/><line x1="522.3" y1="37.1" x2="513.2" y2="35.2" stroke-opacity="0.30"/><line x1="513.2" y1="35.2" x2="505" y2="33.4" stroke-opacity="0.30"/><line x1="505" y1="33.4" x2="497.4" y2="31.8" stroke-opacity="0.30"/><line x1="497.4" y1="31.8" x2="490.5" y2="30.4" stroke-opacity="0.30"/><line x1="490.5" y1="30.4" x2="484.1" y2="29" stroke-opacity="0.30"/><line x1="2140.8" y1="339.9" x2="1613" y2="239.8" stroke-opacity="1.00"/><line x1="1613" y1="239.8" x2="1323.4" y2="184.9" stroke-opacity="1.00"/><line x1="1323.4" y1="184.9" x2="1140.4" y2="150.1" stroke-opacity="1.00"/><line x1="1140.4" y1="150.1" x2="1014.3" y2="126.2" stroke-opacity="0.92"/><line x1="1014.3" y1="126.2" x2="922.1" y2="108.7" stroke-opacity="0.83"/><line x1="922.1" y1="108.7" x2="851.8" y2="95.4" stroke-opacity="0.75"/><line x1="851.8" y1="95.4" x2="796.4" y2="84.9" stroke-opacity="0.66"/><line x1="796.4" y1="84.9" x2="751.6" y2="76.4" stroke-opacity="0.58"/><line x1="751.6" y1="76.4" x2="714.6" y2="69.4" stroke-opacity="0.49"/><line x1="714.6" y1="69.4" x2="683.6" y2="63.5" stroke-opacity="0.41"/><line x1="683.6" y1="63.5" x2="657.3" y2="58.5" stroke-opacity="0.32"/><line x1="657.3" y1="58.5" x2="634.5" y2="54.2" stroke-opacity="0.30"/><line x1="634.5" y1="54.2" x2="614.7" y2="50.4" stroke-opacity="0.30"/><line x1="614.7" y1="50.4" x2="597.4" y2="47.1" stroke-opacity="0.30"/><line x1="597.4" y1="47.1" x2="582" y2="44.2" stroke-opacity="0.30"/><line x1="582" y1="44.2" x2="568.3" y2="41.6" stroke-opacity="0.30"/><line x1="568.3" y1="41.6" x2="556" y2="39.3" stroke-opacity="0.30"/><line x1="556" y1="39.3" x2="544.9" y2="37.2" stroke-opacity="0.30"/><line x1="544.9" y1="37.2" x2="534.8" y2="35.3" stroke-opacity="0.30"/><line x1="534.8" y1="35.3" x2="525.6" y2="33.5" stroke-opacity="0.30"/><line x1="525.6" y1="33.5" x2="517.2" y2="31.9" stroke-opacity="0.30"/><line x1="517.2" y1="31.9" x2="509.5" y2="30.5" stroke-opacity="0.30"/><line x1="509.5" y1="30.5" x2="502.5" y2="29.1" stroke-opacity="0.30"/><line x1="2221.9" y1="322.1" x2="1694.3" y2="231.3" stroke-opacity="1.00"/><line x1="1694.3" y1="231.3" x2="1396.7" y2="180.1" stroke-opacity="1.00"/><line x1="1396.7" y1="180.1" x2="1205.7" y2="147.2" stroke-opacity="0.99"/><line x1="1205.7" y1="147.2" x2="1072.6" y2="124.2" stroke-opacity="0.91"/><line x1="1072.6" y1="124.2" x2="974.6" y2="107.4" stroke-opacity="0.82"/><line x1="974.6" y1="107.4" x2="899.5" y2="94.4" stroke-opacity="0.74"/><line x1="899.5" y1="94.4" x2="840" y2="84.2" stroke-opacity="0.65"/><line x1="840" y1="84.2" x2="791.7" y2="75.9" stroke-opacity="0.57"/><line x1="791.7" y1="75.9" x2="751.8" y2="69" stroke-opacity="0.48"/><line x1="751.8" y1="69" x2="718.2" y2="63.2" stroke-opacity="0.40"/><line x1="718.2" y1="63.2" x2="689.6" y2="58.3" stroke-opacity="0.31"/><line x1="689.6" y1="58.3" x2="664.9" y2="54" stroke-opacity="0.30"/><line x1="664.9" y1="54" x2="643.3" y2="50.3" stroke-opacity="0.30"/><line x1="643.3" y1="50.3" x2="624.4" y2="47.1" stroke-opacity="0.30"/><line x1="624.4" y1="47.1" x2="607.6" y2="44.2" stroke-opacity="0.30"/><line x1="607.6" y1="44.2" x2="592.6" y2="41.6" stroke-opacity="0.30"/><line x1="592.6" y1="41.6" x2="579.2" y2="39.3" stroke-opacity="0.30"/><line x1="579.2" y1="39.3" x2="567" y2="37.2" stroke-opacity="0.30"/><line x1="567" y1="37.2" x2="556" y2="35.3" stroke-opacity="0.30"/><line x1="556" y1="35.3" x2="546" y2="33.6" stroke-opacity="0.30"/><line x1="546" y1="33.6" x2="536.8" y2="32" stroke-opacity="0.30"/><line x1="536.8" y1="32" x2="528.3" y2="30.5" stroke-opacity="0.30"/><line x1="528.3" y1="30.5" x2="520.6" y2="29.2" stroke-opacity="0.30"/><line x1="2293.8" y1="306.4" x2="1768.8" y2="223.5" stroke-opacity="1.00"/><line x1="1768.8" y1="223.5" x2="1465.2" y2="175.6" stroke-opacity="1.00"/><line x1="1465.2" y1="175.6" x2="1267.4" y2="144.3" stroke-opacity="0.98"/><line x1="1267.4" y1="144.3" x2="1128.2" y2="122.4" stroke-opacity="0.89"/><line x1="1128.2" y1="122.4" x2="1025" y2="106.1" stroke-opacity="0.81"/><line x1="1025" y1="106.1" x2="945.4" y2="93.5" stroke-opacity="0.72"/><line x1="945.4" y1="93.5" x2="882.2" y2="83.5" stroke-opacity="0.64"/><line x1="882.2" y1="83.5" x2="830.7" y2="75.4" stroke-opacity="0.55"/><line x1="830.7" y1="75.4" x2="788" y2="68.7" stroke-opacity="0.47"/><line x1="788" y1="68.7" x2="752" y2="63" stroke-opacity="0.38"/><line x1="752" y1="63" x2="721.2" y2="58.1" stroke-opacity="0.30"/><line x1="721.2" y1="58.1" x2="694.6" y2="53.9" stroke-opacity="0.30"/><line x1="694.6" y1="53.9" x2="671.4" y2="50.3" stroke-opacity="0.30"/><line x1="671.4" y1="50.3" x2="651" y2="47" stroke-opacity="0.30"/><line x1="651" y1="47" x2="632.8" y2="44.2" stroke-opacity="0.30"/><line x1="632.8" y1="44.2" x2="616.6" y2="41.6" stroke-opacity="0.30"/><line x1="616.6" y1="41.6" x2="602.1" y2="39.3" stroke-opacity="0.30"/><line x1="602.1" y1="39.3" x2="588.9" y2="37.2" stroke-opacity="0.30"/><line x1="588.9" y1="37.2" x2="577" y2="35.4" stroke-opacity="0.30"/><line x1="577" y1="35.4" x2="566.1" y2="33.6" stroke-opacity="0.30"/><line x1="566.1" y1="33.6" x2="556.1" y2="32.1" stroke-opacity="0.30"/><line x1="556.1" y1="32.1" x2="546.9" y2="30.6" stroke-opacity="0.30"/><line x1="546.9" y1="30.6" x2="538.5" y2="29.3" stroke-opacity="0.30"/><line x1="1837.5" y1="216.3" x2="1529.5" y2="171.4" stroke-opacity="1.00"/><line x1="1529.5" y1="171.4" x2="1325.9" y2="141.7" stroke-opacity="0.97"/><line x1="1325.9" y1="141.7" x2="1181.4" y2="120.6" stroke-opacity="0.88"/><line x1="1181.4" y1="120.6" x2="1073.5" y2="104.8" stroke-opacity="0.79"/><line x1="1073.5" y1="104.8" x2="989.8" y2="92.6" stroke-opacity="0.71"/><line x1="989.8" y1="92.6" x2="923.1" y2="82.9" stroke-opacity="0.62"/><line x1="923.1" y1="82.9" x2="868.6" y2="74.9" stroke-opacity="0.54"/><line x1="868.6" y1="74.9" x2="823.2" y2="68.3" stroke-opacity="0.45"/><line x1="823.2" y1="68.3" x2="784.9" y2="62.7" stroke-opacity="0.37"/><line x1="784.9" y1="62.7" x2="752.1" y2="58" stroke-opacity="0.30"/><line x1="752.1" y1="58" x2="723.7" y2="53.8" stroke-opacity="0.30"/><line x1="723.7" y1="53.8" x2="698.9" y2="50.2" stroke-opacity="0.30"/><line x1="698.9" y1="50.2" x2="677" y2="47" stroke-opacity="0.30"/><line x1="677" y1="47" x2="657.6" y2="44.2" stroke-opacity="0.30"/><line x1="657.6" y1="44.2" x2="640.2" y2="41.6" stroke-opacity="0.30"/><line x1="640.2" y1="41.6" x2="624.6" y2="39.3" stroke-opacity="0.30"/><line x1="624.6" y1="39.3" x2="610.4" y2="37.3" stroke-opacity="0.30"/><line x1="610.4" y1="37.3" x2="597.6" y2="35.4" stroke-opacity="0.30"/><line x1="597.6" y1="35.4" x2="585.9" y2="33.7" stroke-opacity="0.30"/><line x1="585.9" y1="33.7" x2="575.1" y2="32.1" stroke-opacity="0.30"/><line x1="575.1" y1="32.1" x2="565.2" y2="30.7" stroke-opacity="0.30"/><line x1="565.2" y1="30.7" x2="556.1" y2="29.4" stroke-opacity="0.30"/><line x1="1900.8" y1="209.7" x2="1589.7" y2="167.4" stroke-opacity="1.00"/><line x1="1589.7" y1="167.4" x2="1381.4" y2="139.1" stroke-opacity="0.95"/><line x1="1381.4" y1="139.1" x2="1232.2" y2="118.9" stroke-opacity="0.87"/><line x1="1232.2" y1="118.9" x2="1120" y2="103.6" stroke-opacity="0.78"/><line x1="1120" y1="103.6" x2="1032.7" y2="91.8" stroke-opacity="0.70"/><line x1="1032.7" y1="91.8" x2="962.7" y2="82.3" stroke-opacity="0.61"/><line x1="962.7" y1="82.3" x2="905.4" y2="74.5" stroke-opacity="0.53"/><line x1="905.4" y1="74.5" x2="857.5" y2="68" stroke-opacity="0.44"/><line x1="857.5" y1="68" x2="817.1" y2="62.5" stroke-opacity="0.36"/><line x1="817.1" y1="62.5" x2="782.3" y2="57.8" stroke-opacity="0.30"/><line x1="782.3" y1="57.8" x2="752.2" y2="53.7" stroke-opacity="0.30"/><line x1="752.2" y1="53.7" x2="725.9" y2="50.1" stroke-opacity="0.30"/><line x1="725.9" y1="50.1" x2="702.6" y2="47" stroke-opacity="0.30"/><line x1="702.6" y1="47" x2="681.9" y2="44.1" stroke-opacity="0.30"/><line x1="681.9" y1="44.1" x2="663.4" y2="41.6" stroke-opacity="0.30"/><line x1="663.4" y1="41.6" x2="646.7" y2="39.4" stroke-opacity="0.30"/><line x1="646.7" y1="39.4" x2="631.7" y2="37.3" stroke-opacity="0.30"/><line x1="631.7" y1="37.3" x2="617.9" y2="35.5" stroke-opacity="0.30"/><line x1="617.9" y1="35.5" x2="605.4" y2="33.8" stroke-opacity="0.30"/><line x1="605.4" y1="33.8" x2="593.9" y2="32.2" stroke-opacity="0.30"/><line x1="593.9" y1="32.2" x2="583.4" y2="30.8" stroke-opacity="0.30"/><line x1="583.4" y1="30.8" x2="573.6" y2="29.4" stroke-opacity="0.30"/><line x1="1959.6" y1="203.5" x2="1646.4" y2="163.7" stroke-opacity="1.00"/><line x1="1646.4" y1="163.7" x2="1434.2" y2="136.7" stroke-opacity="0.94"/><line x1="1434.2" y1="136.7" x2="1280.8" y2="117.2" stroke-opacity="0.85"/><line x1="1280.8" y1="117.2" x2="1164.9" y2="102.5" stroke-opacity="0.77"/><line x1="1164.9" y1="102.5" x2="1074.1" y2="91" stroke-opacity="0.68"/><line x1="1074.1" y1="91" x2="1001.1" y2="81.7" stroke-opacity="0.60"/><line x1="1001.1" y1="81.7" x2="941.1" y2="74.1" stroke-opacity="0.51"/><line x1="941.1" y1="74.1" x2="891" y2="67.7" stroke-opacity="0.43"/><line x1="891" y1="67.7" x2="848.5" y2="62.3" stroke-opacity="0.34"/><line x1="848.5" y1="62.3" x2="811.9" y2="57.6" stroke-opacity="0.30"/><line x1="811.9" y1="57.6" x2="780.2" y2="53.6" stroke-opacity="0.30"/><line x1="780.2" y1="53.6" x2="752.3" y2="50" stroke-opacity="0.30"/><line x1="752.3" y1="50" x2="727.7" y2="46.9" stroke-opacity="0.30"/><line x1="727.7" y1="46.9" x2="705.9" y2="44.1" stroke-opacity="0.30"/><line x1="705.9" y1="44.1" x2="686.2" y2="41.6" stroke-opacity="0.30"/><line x1="686.2" y1="41.6" x2="668.6" y2="39.4" stroke-opacity="0.30"/><line x1="668.6" y1="39.4" x2="652.6" y2="37.4" stroke-opacity="0.30"/><line x1="652.6" y1="37.4" x2="638" y2="35.5" stroke-opacity="0.30"/><line x1="638" y1="35.5" x2="624.7" y2="33.8" stroke-opacity="0.30"/><line x1="624.7" y1="33.8" x2="612.5" y2="32.3" stroke-opacity="0.30"/><line x1="612.5" y1="32.3" x2="601.2" y2="30.8" stroke-opacity="0.30"/><line x1="601.2" y1="30.8" x2="590.9" y2="29.5" stroke-opacity="0.30"/><line x1="2014.1" y1="197.8" x2="1699.8" y2="160.2" stroke-opacity="1.00"/><line x1="1699.8" y1="160.2" x2="1484.3" y2="134.4" stroke-opacity="0.93"/><line x1="1484.3" y1="134.4" x2="1327.4" y2="115.7" stroke-opacity="0.84"/><line x1="1327.4" y1="115.7" x2="1208" y2="101.4" stroke-opacity="0.76"/><line x1="1208" y1="101.4" x2="1114.1" y2="90.2" stroke-opacity="0.67"/><line x1="1114.1" y1="90.2" x2="1038.4" y2="81.1" stroke-opacity="0.58"/><line x1="1038.4" y1="81.1" x2="976" y2="73.6" stroke-opacity="0.50"/><line x1="976" y1="73.6" x2="923.6" y2="67.4" stroke-opacity="0.41"/><line x1="923.6" y1="67.4" x2="879.1" y2="62" stroke-opacity="0.33"/><line x1="879.1" y1="62" x2="840.8" y2="57.5" stroke-opacity="0.30"/><line x1="840.8" y1="57.5" x2="807.5" y2="53.5" stroke-opacity="0.30"/><line x1="807.5" y1="53.5" x2="778.3" y2="50" stroke-opacity="0.30"/><line x1="778.3" y1="50" x2="752.4" y2="46.9" stroke-opacity="0.30"/><line x1="752.4" y1="46.9" x2="729.4" y2="44.1" stroke-opacity="0.30"/><line x1="729.4" y1="44.1" x2="708.7" y2="41.7" stroke-opacity="0.30"/><line x1="708.7" y1="41.7" x2="690.1" y2="39.4" stroke-opacity="0.30"/><line x1="690.1" y1="39.4" x2="673.2" y2="37.4" stroke-opacity="0.30"/><line x1="673.2" y1="37.4" x2="657.8" y2="35.6" stroke-opacity="0.30"/><line x1="657.8" y1="35.6" x2="643.7" y2="33.9" stroke-opacity="0.30"/><line x1="643.7" y1="33.9" x2="630.8" y2="32.3" stroke-opacity="0.30"/><line x1="630.8" y1="32.3" x2="618.9" y2="30.9" stroke-opacity="0.30"/><line x1="618.9" y1="30.9" x2="607.9" y2="29.6" stroke-opacity="0.30"/><line x1="2064.9" y1="192.5" x2="1750.2" y2="156.9" stroke-opacity="1.00"/><line x1="1750.2" y1="156.9" x2="1532.1" y2="132.3" stroke-opacity="0.91"/><line x1="1532.1" y1="132.3" x2="1372.1" y2="114.2" stroke-opacity="0.83"/><line x1="1372.1" y1="114.2" x2="1249.6" y2="100.3" stroke-opacity="0.74"/><line x1="1249.6" y1="100.3" x2="1152.9" y2="89.4" stroke-opacity="0.66"/><line x1="1152.9" y1="89.4" x2="1074.6" y2="80.5" stroke-opacity="0.57"/><line x1="1074.6" y1="80.5" x2="1009.8" y2="73.2" stroke-opacity="0.49"/><line x1="1009.8" y1="73.2" x2="955.4" y2="67.1" stroke-opacity="0.40"/><line x1="955.4" y1="67.1" x2="909.1" y2="61.8" stroke-opacity="0.32"/><line x1="909.1" y1="61.8" x2="869.2" y2="57.3" stroke-opacity="0.30"/><line x1="869.2" y1="57.3" x2="834.4" y2="53.4" stroke-opacity="0.30"/><line x1="834.4" y1="53.4" x2="803.8" y2="49.9" stroke-opacity="0.30"/><line x1="803.8" y1="49.9" x2="776.7" y2="46.8" stroke-opacity="0.30"/><line x1="776.7" y1="46.8" x2="752.5" y2="44.1" stroke-opacity="0.30"/><line x1="752.5" y1="44.1" x2="730.8" y2="41.7" stroke-opacity="0.30"/><line x1="730.8" y1="41.7" x2="711.2" y2="39.4" stroke-opacity="0.30"/><line x1="711.2" y1="39.4" x2="693.5" y2="37.4" stroke-opacity="0.30"/><line x1="693.5" y1="37.4" x2="677.3" y2="35.6" stroke-opacity="0.30"/><line x1="677.3" y1="35.6" x2="662.5" y2="33.9" stroke-opacity="0.30"/><line x1="662.5" y1="33.9" x2="648.9" y2="32.4" stroke-opacity="0.30"/><line x1="648.9" y1="32.4" x2="636.4" y2="31" stroke-opacity="0.30"/><line x1="636.4" y1="31" x2="624.8" y2="29.7" stroke-opacity="0.30"/><line x1="2112.4" y1="187.5" x2="1797.9" y2="153.8" stroke-opacity="0.98"/><line x1="1797.9" y1="153.8" x2="1577.7" y2="130.2" stroke-opacity="0.90"/><line x1="1577.7" y1="130.2" x2="1415" y2="112.7" stroke-opacity="0.81"/><line x1="1415" y1="112.7" x2="1289.7" y2="99.3" stroke-opacity="0.73"/><line x1="1289.7" y1="99.3" x2="1190.4" y2="88.6" stroke-opacity="0.64"/><line x1="1190.4" y1="88.6" x2="1109.7" y2="80" stroke-opacity="0.56"/><line x1="1109.7" y1="80" x2="1042.8" y2="72.8" stroke-opacity="0.47"/><line x1="1042.8" y1="72.8" x2="986.5" y2="66.8" stroke-opacity="0.39"/><line x1="986.5" y1="66.8" x2="938.4" y2="61.6" stroke-opacity="0.30"/><line x1="938.4" y1="61.6" x2="896.9" y2="57.1" stroke-opacity="0.30"/><line x1="896.9" y1="57.1" x2="860.6" y2="53.3" stroke-opacity="0.30"/><line x1="860.6" y1="53.3" x2="828.8" y2="49.8" stroke-opacity="0.30"/><line x1="828.8" y1="49.8" x2="800.5" y2="46.8" stroke-opacity="0.30"/><line x1="800.5" y1="46.8" x2="775.2" y2="44.1" stroke-opacity="0.30"/><line x1="775.2" y1="44.1" x2="752.6" y2="41.7" stroke-opacity="0.30"/><line x1="752.6" y1="41.7" x2="732.1" y2="39.5" stroke-opacity="0.30"/><line x1="732.1" y1="39.5" x2="713.5" y2="37.5" stroke-opacity="0.30"/><line x1="713.5" y1="37.5" x2="696.5" y2="35.7" stroke-opacity="0.30"/><line x1="696.5" y1="35.7" x2="681" y2="34" stroke-opacity="0.30"/><line x1="681" y1="34" x2="666.8" y2="32.5" stroke-opacity="0.30"/><line x1="666.8" y1="32.5" x2="653.6" y2="31" stroke-opacity="0.30"/><line x1="653.6" y1="31" x2="641.4" y2="29.7" stroke-opacity="0.30"/><line x1="1843" y1="150.9" x2="1621.2" y2="128.2" stroke-opacity="0.89"/><line x1="1621.2" y1="128.2" x2="1456.1" y2="111.3" stroke-opacity="0.80"/><line x1="1456.1" y1="111.3" x2="1328.4" y2="98.3" stroke-opacity="0.72"/><line x1="1328.4" y1="98.3" x2="1226.7" y2="87.9" stroke-opacity="0.63"/><line x1="1226.7" y1="87.9" x2="1143.8" y2="79.4" stroke-opacity="0.55"/><line x1="1143.8" y1="79.4" x2="1074.9" y2="72.4" stroke-opacity="0.46"/><line x1="1074.9" y1="72.4" x2="1016.8" y2="66.5" stroke-opacity="0.37"/><line x1="1016.8" y1="66.5" x2="967" y2="61.4" stroke-opacity="0.30"/><line x1="967" y1="61.4" x2="924" y2="57" stroke-opacity="0.30"/><line x1="924" y1="57" x2="886.4" y2="53.2" stroke-opacity="0.30"/><line x1="886.4" y1="53.2" x2="853.3" y2="49.8" stroke-opacity="0.30"/><line x1="853.3" y1="49.8" x2="823.9" y2="46.8" stroke-opacity="0.30"/><line x1="823.9" y1="46.8" x2="797.6" y2="44.1" stroke-opacity="0.30"/><line x1="797.6" y1="44.1" x2="774" y2="41.7" stroke-opacity="0.30"/><line x1="774" y1="41.7" x2="752.6" y2="39.5" stroke-opacity="0.30"/><line x1="752.6" y1="39.5" x2="733.2" y2="37.5" stroke-opacity="0.30"/><line x1="733.2" y1="37.5" x2="715.5" y2="35.7" stroke-opacity="0.30"/><line x1="715.5" y1="35.7" x2="699.3" y2="34" stroke-opacity="0.30"/><line x1="699.3" y1="34" x2="684.4" y2="32.5" stroke-opacity="0.30"/><line x1="684.4" y1="32.5" x2="670.6" y2="31.1" stroke-opacity="0.30"/><line x1="670.6" y1="31.1" x2="657.9" y2="29.8" stroke-opacity="0.30"/><line x1="1885.8" y1="148.1" x2="1662.8" y2="126.3" stroke-opacity="0.87"/><line x1="1662.8" y1="126.3" x2="1495.7" y2="110" stroke-opacity="0.79"/><line x1="1495.7" y1="110" x2="1365.8" y2="97.3" stroke-opacity="0.70"/><line x1="1365.8" y1="97.3" x2="1261.9" y2="87.2" stroke-opacity="0.62"/><line x1="1261.9" y1="87.2" x2="1177" y2="78.9" stroke-opacity="0.53"/><line x1="1177" y1="78.9" x2="1106.2" y2="72" stroke-opacity="0.45"/><line x1="1106.2" y1="72" x2="1046.3" y2="66.2" stroke-opacity="0.36"/><line x1="1046.3" y1="66.2" x2="995" y2="61.2" stroke-opacity="0.30"/><line x1="995" y1="61.2" x2="950.6" y2="56.8" stroke-opacity="0.30"/><line x1="950.6" y1="56.8" x2="911.7" y2="53.1" stroke-opacity="0.30"/><line x1="911.7" y1="53.1" x2="877.4" y2="49.7" stroke-opacity="0.30"/><line x1="877.4" y1="49.7" x2="846.9" y2="46.7" stroke-opacity="0.30"/><line x1="846.9" y1="46.7" x2="819.6" y2="44.1" stroke-opacity="0.30"/><line x1="819.6" y1="44.1" x2="795.1" y2="41.7" stroke-opacity="0.30"/><line x1="795.1" y1="41.7" x2="772.9" y2="39.5" stroke-opacity="0.30"/><line x1="772.9" y1="39.5" x2="752.7" y2="37.5" stroke-opacity="0.30"/><line x1="752.7" y1="37.5" x2="734.3" y2="35.8" stroke-opacity="0.30"/><line x1="734.3" y1="35.8" x2="717.4" y2="34.1" stroke-opacity="0.30"/><line x1="717.4" y1="34.1" x2="701.8" y2="32.6" stroke-opacity="0.30"/><line x1="701.8" y1="32.6" x2="687.5" y2="31.2" stroke-opacity="0.30"/><line x1="687.5" y1="31.2" x2="674.2" y2="29.9" stroke-opacity="0.30"/><line x1="1926.5" y1="145.4" x2="1702.6" y2="124.5" stroke-opacity="0.86"/><line x1="1702.6" y1="124.5" x2="1533.8" y2="108.7" stroke-opacity="0.77"/><line x1="1533.8" y1="108.7" x2="1401.9" y2="96.4" stroke-opacity="0.69"/><line x1="1401.9" y1="96.4" x2="1296.1" y2="86.5" stroke-opacity="0.60"/><line x1="1296.1" y1="86.5" x2="1209.2" y2="78.4" stroke-opacity="0.52"/><line x1="1209.2" y1="78.4" x2="1136.7" y2="71.7" stroke-opacity="0.43"/><line x1="1136.7" y1="71.7" x2="1075.2" y2="65.9" stroke-opacity="0.35"/><line x1="1075.2" y1="65.9" x2="1022.4" y2="61" stroke-opacity="0.30"/><line x1="1022.4" y1="61" x2="976.6" y2="56.7" stroke-opacity="0.30"/><line x1="976.6" y1="56.7" x2="936.5" y2="53" stroke-opacity="0.30"/><line x1="936.5" y1="53" x2="901.1" y2="49.6" stroke-opacity="0.30"/><line x1="901.1" y1="49.6" x2="869.5" y2="46.7" stroke-opacity="0.30"/><line x1="869.5" y1="46.7" x2="841.3" y2="44.1" stroke-opacity="0.30"/><line x1="841.3" y1="44.1" x2="815.8" y2="41.7" stroke-opacity="0.30"/><line x1="815.8" y1="41.7" x2="792.8" y2="39.5" stroke-opacity="0.30"/><line x1="792.8" y1="39.5" x2="771.9" y2="37.6" stroke-opacity="0.30"/><line x1="771.9" y1="37.6" x2="752.7" y2="35.8" stroke-opacity="0.30"/><line x1="752.7" y1="35.8" x2="735.2" y2="34.2" stroke-opacity="0.30"/><line x1="735.2" y1="34.2" x2="719" y2="32.6" stroke-opacity="0.30"/><line x1="719" y1="32.6" x2="704.1" y2="31.3" stroke-opacity="0.30"/><line x1="704.1" y1="31.3" x2="690.3" y2="30" stroke-opacity="0.30"/><line x1="1965.1" y1="142.9" x2="1740.7" y2="122.8" stroke-opacity="0.85"/><line x1="1740.7" y1="122.8" x2="1570.4" y2="107.5" stroke-opacity="0.76"/><line x1="1570.4" y1="107.5" x2="1436.8" y2="95.5" stroke-opacity="0.68"/><line x1="1436.8" y1="95.5" x2="1329.2" y2="85.9" stroke-opacity="0.59"/><line x1="1329.2" y1="85.9" x2="1240.6" y2="77.9" stroke-opacity="0.51"/><line x1="1240.6" y1="77.9" x2="1166.4" y2="71.3" stroke-opacity="0.42"/><line x1="1166.4" y1="71.3" x2="1103.4" y2="65.6" stroke-opacity="0.34"/><line x1="1103.4" y1="65.6" x2="1049.2" y2="60.8" stroke-opacity="0.30"/><line x1="1049.2" y1="60.8" x2="1002.1" y2="56.6" stroke-opacity="0.30"/><line x1="1002.1" y1="56.6" x2="960.8" y2="52.9" stroke-opacity="0.30"/><line x1="960.8" y1="52.9" x2="924.3" y2="49.6" stroke-opacity="0.30"/><line x1="924.3" y1="49.6" x2="891.8" y2="46.7" stroke-opacity="0.30"/><line x1="891.8" y1="46.7" x2="862.6" y2="44.1" stroke-opacity="0.30"/><line x1="862.6" y1="44.1" x2="836.3" y2="41.7" stroke-opacity="0.30"/><line x1="836.3" y1="41.7" x2="812.5" y2="39.6" stroke-opacity="0.30"/><line x1="812.5" y1="39.6" x2="790.8" y2="37.6" stroke-opacity="0.30"/><line x1="790.8" y1="37.6" x2="771" y2="35.8" stroke-opacity="0.30"/><line x1="771" y1="35.8" x2="752.8" y2="34.2" stroke-opacity="0.30"/><line x1="752.8" y1="34.2" x2="736" y2="32.7" stroke-opacity="0.30"/><line x1="736" y1="32.7" x2="720.6" y2="31.3" stroke-opacity="0.30"/><line x1="720.6" y1="31.3" x2="706.2" y2="30" stroke-opacity="0.30"/><line x1="706.2" y1="30" x2="692.9" y2="28.8" stroke-opacity="0.30"/><line x1="2001.9" y1="140.5" x2="1777.2" y2="121.1" stroke-opacity="0.83"/><line x1="1777.2" y1="121.1" x2="1605.7" y2="106.3" stroke-opacity="0.75"/><line x1="1605.7" y1="106.3" x2="1470.6" y2="94.7" stroke-opacity="0.66"/><line x1="1470.6" y1="94.7" x2="1361.3" y2="85.2" stroke-opacity="0.58"/><line x1="1361.3" y1="85.2" x2="1271.1" y2="77.5" stroke-opacity="0.49"/><line x1="1271.1" y1="77.5" x2="1195.4" y2="70.9" stroke-opacity="0.41"/><line x1="1195.4" y1="70.9" x2="1131" y2="65.4" stroke-opacity="0.32"/><line x1="1131" y1="65.4" x2="1075.5" y2="60.6" stroke-opacity="0.30"/><line x1="1075.5" y1="60.6" x2="1027.1" y2="56.4" stroke-opacity="0.30"/><line x1="1027.1" y1="56.4" x2="984.7" y2="52.8" stroke-opacity="0.30"/><line x1="984.7" y1="52.8" x2="947.1" y2="49.5" stroke-opacity="0.30"/><line x1="947.1" y1="49.5" x2="913.6" y2="46.6" stroke-opacity="0.30"/><line x1="913.6" y1="46.6" x2="883.5" y2="44" stroke-opacity="0.30"/><line x1="883.5" y1="44" x2="856.4" y2="41.7" stroke-opacity="0.30"/><line x1="856.4" y1="41.7" x2="831.8" y2="39.6" stroke-opacity="0.30"/><line x1="831.8" y1="39.6" x2="809.4" y2="37.7" stroke-opacity="0.30"/><line x1="809.4" y1="37.7" x2="789" y2="35.9" stroke-opacity="0.30"/><line x1="789" y1="35.9" x2="770.2" y2="34.3" stroke-opacity="0.30"/><line x1="770.2" y1="34.3" x2="752.8" y2="32.8" stroke-opacity="0.30"/><line x1="752.8" y1="32.8" x2="736.8" y2="31.4" stroke-opacity="0.30"/><line x1="736.8" y1="31.4" x2="721.9" y2="30.1" stroke-opacity="0.30"/><line x1="721.9" y1="30.1" x2="708.1" y2="28.9" stroke-opacity="0.30"/><line x1="1812.2" y1="119.5" x2="1639.8" y2="105.2" stroke-opacity="0.73"/><line x1="1639.8" y1="105.2" x2="1503.2" y2="93.8" stroke-opacity="0.65"/><line x1="1503.2" y1="93.8" x2="1392.5" y2="84.6" stroke-opacity="0.56"/><line x1="1392.5" y1="84.6" x2="1300.8" y2="77" stroke-opacity="0.48"/><line x1="1300.8" y1="77" x2="1223.7" y2="70.6" stroke-opacity="0.39"/><line x1="1223.7" y1="70.6" x2="1157.9" y2="65.1" stroke-opacity="0.31"/><line x1="1157.9" y1="65.1" x2="1101.1" y2="60.4" stroke-opacity="0.30"/><line x1="1101.1" y1="60.4" x2="1051.6" y2="56.3" stroke-opacity="0.30"/><line x1="1051.6" y1="56.3" x2="1008.1" y2="52.7" stroke-opacity="0.30"/><line x1="1008.1" y1="52.7" x2="969.5" y2="49.5" stroke-opacity="0.30"/><line x1="969.5" y1="49.5" x2="935.1" y2="46.6" stroke-opacity="0.30"/><line x1="935.1" y1="46.6" x2="904.2" y2="44" stroke-opacity="0.30"/><line x1="904.2" y1="44" x2="876.3" y2="41.7" stroke-opacity="0.30"/><line x1="876.3" y1="41.7" x2="850.9" y2="39.6" stroke-opacity="0.30"/><line x1="850.9" y1="39.6" x2="827.9" y2="37.7" stroke-opacity="0.30"/><line x1="827.9" y1="37.7" x2="806.7" y2="35.9" stroke-opacity="0.30"/><line x1="806.7" y1="35.9" x2="787.3" y2="34.3" stroke-opacity="0.30"/><line x1="787.3" y1="34.3" x2="769.4" y2="32.8" stroke-opacity="0.30"/><line x1="769.4" y1="32.8" x2="752.9" y2="31.5" stroke-opacity="0.30"/><line x1="752.9" y1="31.5" x2="737.5" y2="30.2" stroke-opacity="0.30"/><line x1="737.5" y1="30.2" x2="723.2" y2="29" stroke-opacity="0.30"/><line x1="1845.8" y1="118" x2="1672.6" y2="104.1" stroke-opacity="0.72"/><line x1="1672.6" y1="104.1" x2="1534.9" y2="93" stroke-opacity="0.64"/><line x1="1534.9" y1="93" x2="1422.7" y2="84" stroke-opacity="0.55"/><line x1="1422.7" y1="84" x2="1329.7" y2="76.5" stroke-opacity="0.47"/><line x1="1329.7" y1="76.5" x2="1251.2" y2="70.2" stroke-opacity="0.38"/><line x1="1251.2" y1="70.2" x2="1184.2" y2="64.9" stroke-opacity="0.30"/><line x1="1184.2" y1="64.9" x2="1126.2" y2="60.2" stroke-opacity="0.30"/><line x1="1126.2" y1="60.2" x2="1075.7" y2="56.2" stroke-opacity="0.30"/><line x1="1075.7" y1="56.2" x2="1031.1" y2="52.6" stroke-opacity="0.30"/><line x1="1031.1" y1="52.6" x2="991.6" y2="49.4" stroke-opacity="0.30"/><line x1="991.6" y1="49.4" x2="956.2" y2="46.6" stroke-opacity="0.30"/><line x1="956.2" y1="46.6" x2="924.5" y2="44" stroke-opacity="0.30"/><line x1="924.5" y1="44" x2="895.8" y2="41.7" stroke-opacity="0.30"/><line x1="895.8" y1="41.7" x2="869.8" y2="39.6" stroke-opacity="0.30"/><line x1="869.8" y1="39.6" x2="846" y2="37.7" stroke-opacity="0.30"/><line x1="846" y1="37.7" x2="824.2" y2="36" stroke-opacity="0.30"/><line x1="824.2" y1="36" x2="804.2" y2="34.4" stroke-opacity="0.30"/><line x1="804.2" y1="34.4" x2="785.8" y2="32.9" stroke-opacity="0.30"/><line x1="785.8" y1="32.9" x2="768.7" y2="31.5" stroke-opacity="0.30"/><line x1="768.7" y1="31.5" x2="752.9" y2="30.2" stroke-opacity="0.30"/><line x1="752.9" y1="30.2" x2="738.2" y2="29.1" stroke-opacity="0.30"/><line x1="1878.2" y1="116.5" x2="1704.3" y2="103" stroke-opacity="0.71"/><line x1="1704.3" y1="103" x2="1565.5" y2="92.2" stroke-opacity="0.62"/><line x1="1565.5" y1="92.2" x2="1452.2" y2="83.4" stroke-opacity="0.54"/><line x1="1452.2" y1="83.4" x2="1357.9" y2="76.1" stroke-opacity="0.45"/><line x1="1357.9" y1="76.1" x2="1278.2" y2="69.9" stroke-opacity="0.37"/><line x1="1278.2" y1="69.9" x2="1209.9" y2="64.6" stroke-opacity="0.30"/><line x1="1209.9" y1="64.6" x2="1150.9" y2="60" stroke-opacity="0.30"/><line x1="1150.9" y1="60" x2="1099.2" y2="56" stroke-opacity="0.30"/><line x1="1099.2" y1="56" x2="1053.7" y2="52.5" stroke-opacity="0.30"/><line x1="1053.7" y1="52.5" x2="1013.2" y2="49.3" stroke-opacity="0.30"/><line x1="1013.2" y1="49.3" x2="977" y2="46.5" stroke-opacity="0.30"/><line x1="977" y1="46.5" x2="944.5" y2="44" stroke-opacity="0.30"/><line x1="944.5" y1="44" x2="915.1" y2="41.7" stroke-opacity="0.30"/><line x1="915.1" y1="41.7" x2="888.3" y2="39.7" stroke-opacity="0.30"/><line x1="888.3" y1="39.7" x2="863.9" y2="37.8" stroke-opacity="0.30"/><line x1="863.9" y1="37.8" x2="841.5" y2="36" stroke-opacity="0.30"/><line x1="841.5" y1="36" x2="821" y2="34.4" stroke-opacity="0.30"/><line x1="821" y1="34.4" x2="802" y2="32.9" stroke-opacity="0.30"/><line x1="802" y1="32.9" x2="784.4" y2="31.6" stroke-opacity="0.30"/><line x1="784.4" y1="31.6" x2="768.1" y2="30.3" stroke-opacity="0.30"/><line x1="768.1" y1="30.3" x2="752.9" y2="29.1" stroke-opacity="0.30"/><line x1="1909.2" y1="115.1" x2="1734.9" y2="102" stroke-opacity="0.70"/><line x1="1734.9" y1="102" x2="1595.2" y2="91.5" stroke-opacity="0.61"/><line x1="1595.2" y1="91.5" x2="1480.8" y2="82.9" stroke-opacity="0.52"/><line x1="1480.8" y1="82.9" x2="1385.3" y2="75.7" stroke-opacity="0.44"/><line x1="1385.3" y1="75.7" x2="1304.4" y2="69.6" stroke-opacity="0.35"/><line x1="1304.4" y1="69.6" x2="1235.1" y2="64.4" stroke-opacity="0.30"/><line x1="1235.1" y1="64.4" x2="1175" y2="59.9" stroke-opacity="0.30"/><line x1="1175" y1="59.9" x2="1122.3" y2="55.9" stroke-opacity="0.30"/><line x1="1122.3" y1="55.9" x2="1075.8" y2="52.4" stroke-opacity="0.30"/><line x1="1075.8" y1="52.4" x2="1034.5" y2="49.3" stroke-opacity="0.30"/><line x1="1034.5" y1="49.3" x2="997.5" y2="46.5" stroke-opacity="0.30"/><line x1="997.5" y1="46.5" x2="964.2" y2="44" stroke-opacity="0.30"/><line x1="964.2" y1="44" x2="934" y2="41.7" stroke-opacity="0.30"/><line x1="934" y1="41.7" x2="906.6" y2="39.7" stroke-opacity="0.30"/><line x1="906.6" y1="39.7" x2="881.6" y2="37.8" stroke-opacity="0.30"/><line x1="881.6" y1="37.8" x2="858.6" y2="36.1" stroke-opacity="0.30"/><line x1="858.6" y1="36.1" x2="837.5" y2="34.5" stroke-opacity="0.30"/><line x1="837.5" y1="34.5" x2="818" y2="33" stroke-opacity="0.30"/><line x1="818" y1="33" x2="799.9" y2="31.6" stroke-opacity="0.30"/><line x1="799.9" y1="31.6" x2="783.2" y2="30.4" stroke-opacity="0.30"/><line x1="783.2" y1="30.4" x2="767.5" y2="29.2" stroke-opacity="0.30"/><line x1="1939.1" y1="113.7" x2="1764.5" y2="101" stroke-opacity="0.68"/><line x1="1764.5" y1="101" x2="1624" y2="90.7" stroke-opacity="0.60"/><line x1="1624" y1="90.7" x2="1508.6" y2="82.3" stroke-opacity="0.51"/><line x1="1508.6" y1="82.3" x2="1412" y2="75.3" stroke-opacity="0.43"/><line x1="1412" y1="75.3" x2="1330.1" y2="69.3" stroke-opacity="0.34"/><line x1="1330.1" y1="69.3" x2="1259.7" y2="64.1" stroke-opacity="0.30"/><line x1="1259.7" y1="64.1" x2="1198.6" y2="59.7" stroke-opacity="0.30"/><line x1="1198.6" y1="59.7" x2="1145" y2="55.8" stroke-opacity="0.30"/><line x1="1145" y1="55.8" x2="1097.6" y2="52.3" stroke-opacity="0.30"/><line x1="1097.6" y1="52.3" x2="1055.4" y2="49.2" stroke-opacity="0.30"/><line x1="1055.4" y1="49.2" x2="1017.6" y2="46.5" stroke-opacity="0.30"/><line x1="1017.6" y1="46.5" x2="983.6" y2="44" stroke-opacity="0.30"/><line x1="983.6" y1="44" x2="952.7" y2="41.7" stroke-opacity="0.30"/><line x1="952.7" y1="41.7" x2="924.7" y2="39.7" stroke-opacity="0.30"/><line x1="924.7" y1="39.7" x2="899" y2="37.8" stroke-opacity="0.30"/><line x1="899" y1="37.8" x2="875.5" y2="36.1" stroke-opacity="0.30"/><line x1="875.5" y1="36.1" x2="853.8" y2="34.5" stroke-opacity="0.30"/><line x1="853.8" y1="34.5" x2="833.8" y2="33.1" stroke-opacity="0.30"/><line x1="833.8" y1="33.1" x2="815.3" y2="31.7" stroke-opacity="0.30"/><line x1="815.3" y1="31.7" x2="798" y2="30.5" stroke-opacity="0.30"/><line x1="798" y1="30.5" x2="782" y2="29.3" stroke-opacity="0.30"/><line x1="1967.9" y1="112.4" x2="1793.1" y2="100" stroke-opacity="0.67"/><line x1="1793.1" y1="100" x2="1651.9" y2="90" stroke-opacity="0.58"/><line x1="1651.9" y1="90" x2="1535.6" y2="81.8" stroke-opacity="0.50"/><line x1="1535.6" y1="81.8" x2="1438.1" y2="74.8" stroke-opacity="0.41"/><line x1="1438.1" y1="74.8" x2="1355.2" y2="69" stroke-opacity="0.33"/><line x1="1355.2" y1="69" x2="1283.8" y2="63.9" stroke-opacity="0.30"/><line x1="1283.8" y1="63.9" x2="1221.7" y2="59.5" stroke-opacity="0.30"/><line x1="1221.7" y1="59.5" x2="1167.2" y2="55.6" stroke-opacity="0.30"/><line x1="1167.2" y1="55.6" x2="1119" y2="52.2" stroke-opacity="0.30"/><line x1="1119" y1="52.2" x2="1076" y2="49.2" stroke-opacity="0.30"/><line x1="1076" y1="49.2" x2="1037.4" y2="46.4" stroke-opacity="0.30"/><line x1="1037.4" y1="46.4" x2="1002.7" y2="44" stroke-opacity="0.30"/><line x1="1002.7" y1="44" x2="971.1" y2="41.7" stroke-opacity="0.30"/><line x1="971.1" y1="41.7" x2="942.4" y2="39.7" stroke-opacity="0.30"/><line x1="942.4" y1="39.7" x2="916.2" y2="37.9" stroke-opacity="0.30"/><line x1="916.2" y1="37.9" x2="892.1" y2="36.1" stroke-opacity="0.30"/><line x1="892.1" y1="36.1" x2="869.9" y2="34.6" stroke-opacity="0.30"/><line x1="869.9" y1="34.6" x2="849.4" y2="33.1" stroke-opacity="0.30"/><line x1="849.4" y1="33.1" x2="830.4" y2="31.8" stroke-opacity="0.30"/><line x1="830.4" y1="31.8" x2="812.8" y2="30.5" stroke-opacity="0.30"/><line x1="812.8" y1="30.5" x2="796.3" y2="29.4" stroke-opacity="0.30"/><line x1="1820.7" y1="99.1" x2="1679.1" y2="89.3" stroke-opacity="0.57"/><line x1="1679.1" y1="89.3" x2="1562" y2="81.2" stroke-opacity="0.49"/><line x1="1562" y1="81.2" x2="1463.5" y2="74.4" stroke-opacity="0.40"/><line x1="1463.5" y1="74.4" x2="1379.7" y2="68.7" stroke-opacity="0.31"/><line x1="1379.7" y1="68.7" x2="1307.4" y2="63.7" stroke-opacity="0.30"/><line x1="1307.4" y1="63.7" x2="1244.4" y2="59.3" stroke-opacity="0.30"/><line x1="1244.4" y1="59.3" x2="1189" y2="55.5" stroke-opacity="0.30"/><line x1="1189" y1="55.5" x2="1139.9" y2="52.1" stroke-opacity="0.30"/><line x1="1139.9" y1="52.1" x2="1096.2" y2="49.1" stroke-opacity="0.30"/><line x1="1096.2" y1="49.1" x2="1056.9" y2="46.4" stroke-opacity="0.30"/><line x1="1056.9" y1="46.4" x2="1021.5" y2="44" stroke-opacity="0.30"/><line x1="1021.5" y1="44" x2="989.3" y2="41.8" stroke-opacity="0.30"/><line x1="989.3" y1="41.8" x2="960" y2="39.7" stroke-opacity="0.30"/><line x1="960" y1="39.7" x2="933.2" y2="37.9" stroke-opacity="0.30"/><line x1="933.2" y1="37.9" x2="908.6" y2="36.2" stroke-opacity="0.30"/><line x1="908.6" y1="36.2" x2="885.9" y2="34.6" stroke-opacity="0.30"/><line x1="885.9" y1="34.6" x2="864.9" y2="33.2" stroke-opacity="0.30"/><line x1="864.9" y1="33.2" x2="845.4" y2="31.8" stroke-opacity="0.30"/><line x1="845.4" y1="31.8" x2="827.3" y2="30.6" stroke-opacity="0.30"/><line x1="827.3" y1="30.6" x2="810.4" y2="29.4" stroke-opacity="0.30"/><line x1="1847.5" y1="98.2" x2="1705.4" y2="88.6" stroke-opacity="0.56"/><line x1="1705.4" y1="88.6" x2="1587.6" y2="80.7" stroke-opacity="0.47"/><line x1="1587.6" y1="80.7" x2="1488.4" y2="74.1" stroke-opacity="0.39"/><line x1="1488.4" y1="74.1" x2="1403.6" y2="68.4" stroke-opacity="0.30"/><line x1="1403.6" y1="68.4" x2="1330.5" y2="63.5" stroke-opacity="0.30"/><line x1="1330.5" y1="63.5" x2="1266.6" y2="59.2" stroke-opacity="0.30"/><line x1="1266.6" y1="59.2" x2="1210.4" y2="55.4" stroke-opacity="0.30"/><line x1="1210.4" y1="55.4" x2="1160.6" y2="52.1" stroke-opacity="0.30"/><line x1="1160.6" y1="52.1" x2="1116.1" y2="49.1" stroke-opacity="0.30"/><line x1="1116.1" y1="49.1" x2="1076.1" y2="46.4" stroke-opacity="0.30"/><line x1="1076.1" y1="46.4" x2="1040" y2="44" stroke-opacity="0.30"/><line x1="1040" y1="44" x2="1007.2" y2="41.8" stroke-opacity="0.30"/><line x1="1007.2" y1="41.8" x2="977.3" y2="39.8" stroke-opacity="0.30"/><line x1="977.3" y1="39.8" x2="949.9" y2="37.9" stroke-opacity="0.30"/><line x1="949.9" y1="37.9" x2="924.8" y2="36.2" stroke-opacity="0.30"/><line x1="924.8" y1="36.2" x2="901.6" y2="34.7" stroke-opacity="0.30"/><line x1="901.6" y1="34.7" x2="880.1" y2="33.2" stroke-opacity="0.30"/><line x1="880.1" y1="33.2" x2="860.2" y2="31.9" stroke-opacity="0.30"/><line x1="860.2" y1="31.9" x2="841.7" y2="30.7" stroke-opacity="0.30"/><line x1="841.7" y1="30.7" x2="824.5" y2="29.5" stroke-opacity="0.30"/><line x1="1873.5" y1="97.3" x2="1731" y2="88" stroke-opacity="0.54"/><line x1="1731" y1="88" x2="1612.5" y2="80.2" stroke-opacity="0.46"/><line x1="1612.5" y1="80.2" x2="1512.6" y2="73.7" stroke-opacity="0.37"/><line x1="1512.6" y1="73.7" x2="1427" y2="68.1" stroke-opacity="0.30"/><line x1="1427" y1="68.1" x2="1353.1" y2="63.2" stroke-opacity="0.30"/><line x1="1353.1" y1="63.2" x2="1288.4" y2="59" stroke-opacity="0.30"/><line x1="1288.4" y1="59" x2="1231.4" y2="55.3" stroke-opacity="0.30"/><line x1="1231.4" y1="55.3" x2="1180.8" y2="52" stroke-opacity="0.30"/><line x1="1180.8" y1="52" x2="1135.6" y2="49" stroke-opacity="0.30"/><line x1="1135.6" y1="49" x2="1095" y2="46.4" stroke-opacity="0.30"/><line x1="1095" y1="46.4" x2="1058.2" y2="44" stroke-opacity="0.30"/><line x1="1058.2" y1="44" x2="1024.8" y2="41.8" stroke-opacity="0.30"/><line x1="1024.8" y1="41.8" x2="994.4" y2="39.8" stroke-opacity="0.30"/><line x1="994.4" y1="39.8" x2="966.5" y2="37.9" stroke-opacity="0.30"/><line x1="966.5" y1="37.9" x2="940.8" y2="36.3" stroke-opacity="0.30"/><line x1="940.8" y1="36.3" x2="917.1" y2="34.7" stroke-opacity="0.30"/><line x1="917.1" y1="34.7" x2="895.2" y2="33.3" stroke-opacity="0.30"/><line x1="895.2" y1="33.3" x2="874.9" y2="32" stroke-opacity="0.30"/><line x1="874.9" y1="32" x2="856" y2="30.7" stroke-opacity="0.30"/><line x1="856" y1="30.7" x2="838.3" y2="29.6" stroke-opacity="0.30"/><line x1="1898.6" y1="96.5" x2="1755.8" y2="87.3" stroke-opacity="0.53"/><line x1="1755.8" y1="87.3" x2="1636.9" y2="79.7" stroke-opacity="0.45"/><line x1="1636.9" y1="79.7" x2="1536.2" y2="73.3" stroke-opacity="0.36"/><line x1="1536.2" y1="73.3" x2="1449.9" y2="67.8" stroke-opacity="0.30"/><line x1="1449.9" y1="67.8" x2="1375.2" y2="63" stroke-opacity="0.30"/><line x1="1375.2" y1="63" x2="1309.8" y2="58.9" stroke-opacity="0.30"/><line x1="1309.8" y1="58.9" x2="1252.1" y2="55.2" stroke-opacity="0.30"/><line x1="1252.1" y1="55.2" x2="1200.8" y2="51.9" stroke-opacity="0.30"/><line x1="1200.8" y1="51.9" x2="1154.9" y2="49" stroke-opacity="0.30"/><line x1="1154.9" y1="49" x2="1113.6" y2="46.3" stroke-opacity="0.30"/><line x1="1113.6" y1="46.3" x2="1076.2" y2="43.9" stroke-opacity="0.30"/><line x1="1076.2" y1="43.9" x2="1042.2" y2="41.8" stroke-opacity="0.30"/><line x1="1042.2" y1="41.8" x2="1011.2" y2="39.8" stroke-opacity="0.30"/><line x1="1011.2" y1="39.8" x2="982.8" y2="38" stroke-opacity="0.30"/><line x1="982.8" y1="38" x2="956.6" y2="36.3" stroke-opacity="0.30"/><line x1="956.6" y1="36.3" x2="932.5" y2="34.8" stroke-opacity="0.30"/><line x1="932.5" y1="34.8" x2="910.1" y2="33.3" stroke-opacity="0.30"/><line x1="910.1" y1="33.3" x2="889.4" y2="32" stroke-opacity="0.30"/><line x1="889.4" y1="32" x2="870.1" y2="30.8" stroke-opacity="0.30"/><line x1="870.1" y1="30.8" x2="852" y2="29.6" stroke-opacity="0.30"/><line x1="1923" y1="95.6" x2="1780" y2="86.7" stroke-opacity="0.52"/><line x1="1780" y1="86.7" x2="1660.6" y2="79.3" stroke-opacity="0.43"/><line x1="1660.6" y1="79.3" x2="1559.3" y2="73" stroke-opacity="0.35"/><line x1="1559.3" y1="73" x2="1472.3" y2="67.5" stroke-opacity="0.30"/><line x1="1472.3" y1="67.5" x2="1396.9" y2="62.8" stroke-opacity="0.30"/><line x1="1396.9" y1="62.8" x2="1330.7" y2="58.7" stroke-opacity="0.30"/><line x1="1330.7" y1="58.7" x2="1272.3" y2="55.1" stroke-opacity="0.30"/><line x1="1272.3" y1="55.1" x2="1220.3" y2="51.8" stroke-opacity="0.30"/><line x1="1220.3" y1="51.8" x2="1173.8" y2="48.9" stroke-opacity="0.30"/><line x1="1173.8" y1="48.9" x2="1131.9" y2="46.3" stroke-opacity="0.30"/><line x1="1131.9" y1="46.3" x2="1093.9" y2="43.9" stroke-opacity="0.30"/><line x1="1093.9" y1="43.9" x2="1059.4" y2="41.8" stroke-opacity="0.30"/><line x1="1059.4" y1="41.8" x2="1027.8" y2="39.8" stroke-opacity="0.30"/><line x1="1027.8" y1="39.8" x2="998.9" y2="38" stroke-opacity="0.30"/><line x1="998.9" y1="38" x2="972.3" y2="36.3" stroke-opacity="0.30"/><line x1="972.3" y1="36.3" x2="947.7" y2="34.8" stroke-opacity="0.30"/><line x1="947.7" y1="34.8" x2="924.9" y2="33.4" stroke-opacity="0.30"/><line x1="924.9" y1="33.4" x2="903.7" y2="32.1" stroke-opacity="0.30"/><line x1="903.7" y1="32.1" x2="884" y2="30.8" stroke-opacity="0.30"/><line x1="884" y1="30.8" x2="865.6" y2="29.7" stroke-opacity="0.30"/><line x1="1803.5" y1="86.1" x2="1683.7" y2="78.8" stroke-opacity="0.42"/><line x1="1683.7" y1="78.8" x2="1581.8" y2="72.6" stroke-opacity="0.33"/><line x1="1581.8" y1="72.6" x2="1494.2" y2="67.3" stroke-opacity="0.30"/><line x1="1494.2" y1="67.3" x2="1418.1" y2="62.6" stroke-opacity="0.30"/><line x1="1418.1" y1="62.6" x2="1351.3" y2="58.5" stroke-opacity="0.30"/><line x1="1351.3" y1="58.5" x2="1292.2" y2="54.9" stroke-opacity="0.30"/><line x1="1292.2" y1="54.9" x2="1239.6" y2="51.7" stroke-opacity="0.30"/><line x1="1239.6" y1="51.7" x2="1192.4" y2="48.9" stroke-opacity="0.30"/><line x1="1192.4" y1="48.9" x2="1149.9" y2="46.3" stroke-opacity="0.30"/><line x1="1149.9" y1="46.3" x2="1111.4" y2="43.9" stroke-opacity="0.30"/><line x1="1111.4" y1="43.9" x2="1076.3" y2="41.8" stroke-opacity="0.30"/><line x1="1076.3" y1="41.8" x2="1044.2" y2="39.8" stroke-opacity="0.30"/><line x1="1044.2" y1="39.8" x2="1014.8" y2="38" stroke-opacity="0.30"/><line x1="1014.8" y1="38" x2="987.7" y2="36.4" stroke-opacity="0.30"/><line x1="987.7" y1="36.4" x2="962.7" y2="34.9" stroke-opacity="0.30"/><line x1="962.7" y1="34.9" x2="939.5" y2="33.4" stroke-opacity="0.30"/><line x1="939.5" y1="33.4" x2="917.9" y2="32.1" stroke-opacity="0.30"/><line x1="917.9" y1="32.1" x2="897.8" y2="30.9" stroke-opacity="0.30"/><line x1="897.8" y1="30.9" x2="879" y2="29.8" stroke-opacity="0.30"/><line x1="1826.4" y1="85.5" x2="1706.2" y2="78.4" stroke-opacity="0.41"/><line x1="1706.2" y1="78.4" x2="1603.9" y2="72.3" stroke-opacity="0.32"/><line x1="1603.9" y1="72.3" x2="1515.7" y2="67" stroke-opacity="0.30"/><line x1="1515.7" y1="67" x2="1438.9" y2="62.4" stroke-opacity="0.30"/><line x1="1438.9" y1="62.4" x2="1371.5" y2="58.4" stroke-opacity="0.30"/><line x1="1371.5" y1="58.4" x2="1311.8" y2="54.8" stroke-opacity="0.30"/><line x1="1311.8" y1="54.8" x2="1258.5" y2="51.7" stroke-opacity="0.30"/><line x1="1258.5" y1="51.7" x2="1210.8" y2="48.8" stroke-opacity="0.30"/><line x1="1210.8" y1="48.8" x2="1167.7" y2="46.2" stroke-opacity="0.30"/><line x1="1167.7" y1="46.2" x2="1128.6" y2="43.9" stroke-opacity="0.30"/><line x1="1128.6" y1="43.9" x2="1093" y2="41.8" stroke-opacity="0.30"/><line x1="1093" y1="41.8" x2="1060.4" y2="39.8" stroke-opacity="0.30"/><line x1="1060.4" y1="39.8" x2="1030.5" y2="38.1" stroke-opacity="0.30"/><line x1="1030.5" y1="38.1" x2="1003" y2="36.4" stroke-opacity="0.30"/><line x1="1003" y1="36.4" x2="977.5" y2="34.9" stroke-opacity="0.30"/><line x1="977.5" y1="34.9" x2="953.9" y2="33.5" stroke-opacity="0.30"/><line x1="953.9" y1="33.5" x2="931.9" y2="32.2" stroke-opacity="0.30"/><line x1="931.9" y1="32.2" x2="911.5" y2="31" stroke-opacity="0.30"/><line x1="911.5" y1="31" x2="892.3" y2="29.8" stroke-opacity="0.30"/><line x1="1848.7" y1="85" x2="1728.2" y2="77.9" stroke-opacity="0.39"/><line x1="1728.2" y1="77.9" x2="1625.4" y2="71.9" stroke-opacity="0.31"/><line x1="1625.4" y1="71.9" x2="1536.7" y2="66.7" stroke-opacity="0.30"/><line x1="1536.7" y1="66.7" x2="1459.3" y2="62.2" stroke-opacity="0.30"/><line x1="1459.3" y1="62.2" x2="1391.3" y2="58.3" stroke-opacity="0.30"/><line x1="1391.3" y1="58.3" x2="1331" y2="54.7" stroke-opacity="0.30"/><line x1="1331" y1="54.7" x2="1277.1" y2="51.6" stroke-opacity="0.30"/><line x1="1277.1" y1="51.6" x2="1228.8" y2="48.8" stroke-opacity="0.30"/><line x1="1228.8" y1="48.8" x2="1185.1" y2="46.2" stroke-opacity="0.30"/><line x1="1185.1" y1="46.2" x2="1145.5" y2="43.9" stroke-opacity="0.30"/><line x1="1145.5" y1="43.9" x2="1109.4" y2="41.8" stroke-opacity="0.30"/><line x1="1109.4" y1="41.8" x2="1076.4" y2="39.9" stroke-opacity="0.30"/><line x1="1076.4" y1="39.9" x2="1046" y2="38.1" stroke-opacity="0.30"/><line x1="1046" y1="38.1" x2="1018" y2="36.5" stroke-opacity="0.30"/><line x1="1018" y1="36.5" x2="992.1" y2="34.9" stroke-opacity="0.30"/><line x1="992.1" y1="34.9" x2="968.1" y2="33.5" stroke-opacity="0.30"/><line x1="968.1" y1="33.5" x2="945.8" y2="32.2" stroke-opacity="0.30"/><line x1="945.8" y1="32.2" x2="925" y2="31" stroke-opacity="0.30"/><line x1="925" y1="31" x2="905.5" y2="29.9" stroke-opacity="0.30"/><line x1="1870.3" y1="84.4" x2="1749.6" y2="77.5" stroke-opacity="0.38"/><line x1="1749.6" y1="77.5" x2="1646.4" y2="71.6" stroke-opacity="0.30"/><line x1="1646.4" y1="71.6" x2="1557.2" y2="66.5" stroke-opacity="0.30"/><line x1="1557.2" y1="66.5" x2="1479.3" y2="62" stroke-opacity="0.30"/><line x1="1479.3" y1="62" x2="1410.7" y2="58.1" stroke-opacity="0.30"/><line x1="1410.7" y1="58.1" x2="1349.8" y2="54.6" stroke-opacity="0.30"/><line x1="1349.8" y1="54.6" x2="1295.4" y2="51.5" stroke-opacity="0.30"/><line x1="1295.4" y1="51.5" x2="1246.6" y2="48.7" stroke-opacity="0.30"/><line x1="1246.6" y1="48.7" x2="1202.4" y2="46.2" stroke-opacity="0.30"/><line x1="1202.4" y1="46.2" x2="1162.3" y2="43.9" stroke-opacity="0.30"/><line x1="1162.3" y1="43.9" x2="1125.7" y2="41.8" stroke-opacity="0.30"/><line x1="1125.7" y1="41.8" x2="1092.1" y2="39.9" stroke-opacity="0.30"/><line x1="1092.1" y1="39.9" x2="1061.3" y2="38.1" stroke-opacity="0.30"/><line x1="1061.3" y1="38.1" x2="1032.9" y2="36.5" stroke-opacity="0.30"/><line x1="1032.9" y1="36.5" x2="1006.6" y2="35" stroke-opacity="0.30"/><line x1="1006.6" y1="35" x2="982.2" y2="33.6" stroke-opacity="0.30"/><line x1="982.2" y1="33.6" x2="959.5" y2="32.3" stroke-opacity="0.30"/><line x1="959.5" y1="32.3" x2="938.3" y2="31.1" stroke-opacity="0.30"/><line x1="938.3" y1="31.1" x2="918.5" y2="30" stroke-opacity="0.30"/><line x1="1891.5" y1="83.9" x2="1770.5" y2="77.1" stroke-opacity="0.37"/><line x1="1770.5" y1="77.1" x2="1667" y2="71.3" stroke-opacity="0.30"/><line x1="1667" y1="71.3" x2="1577.3" y2="66.2" stroke-opacity="0.30"/><line x1="1577.3" y1="66.2" x2="1498.9" y2="61.8" stroke-opacity="0.30"/><line x1="1498.9" y1="61.8" x2="1429.8" y2="58" stroke-opacity="0.30"/><line x1="1429.8" y1="58" x2="1368.4" y2="54.5" stroke-opacity="0.30"/><line x1="1368.4" y1="54.5" x2="1313.4" y2="51.4" stroke-opacity="0.30"/><line x1="1313.4" y1="51.4" x2="1264" y2="48.7" stroke-opacity="0.30"/><line x1="1264" y1="48.7" x2="1219.3" y2="46.2" stroke-opacity="0.30"/><line x1="1219.3" y1="46.2" x2="1178.7" y2="43.9" stroke-opacity="0.30"/><line x1="1178.7" y1="43.9" x2="1141.7" y2="41.8" stroke-opacity="0.30"/><line x1="1141.7" y1="41.8" x2="1107.7" y2="39.9" stroke-opacity="0.30"/><line x1="1107.7" y1="39.9" x2="1076.5" y2="38.2" stroke-opacity="0.30"/><line x1="1076.5" y1="38.2" x2="1047.6" y2="36.5" stroke-opacity="0.30"/><line x1="1047.6" y1="36.5" x2="1020.9" y2="35" stroke-opacity="0.30"/><line x1="1020.9" y1="35" x2="996.2" y2="33.6" stroke-opacity="0.30"/><line x1="996.2" y1="33.6" x2="973.1" y2="32.4" stroke-opacity="0.30"/><line x1="973.1" y1="32.4" x2="951.6" y2="31.1" stroke-opacity="0.30"/><line x1="951.6" y1="31.1" x2="931.4" y2="30" stroke-opacity="0.30"/><line x1="931.4" y1="30" x2="912.6" y2="29" stroke-opacity="0.30"/><line x1="1912" y1="83.3" x2="1791" y2="76.7" stroke-opacity="0.35"/><line x1="1791" y1="76.7" x2="1687.1" y2="71" stroke-opacity="0.30"/><line x1="1687.1" y1="71" x2="1597" y2="66" stroke-opacity="0.30"/><line x1="1597" y1="66" x2="1518.2" y2="61.7" stroke-opacity="0.30"/><line x1="1518.2" y1="61.7" x2="1448.5" y2="57.8" stroke-opacity="0.30"/><line x1="1448.5" y1="57.8" x2="1386.6" y2="54.4" stroke-opacity="0.30"/><line x1="1386.6" y1="54.4" x2="1331.2" y2="51.4" stroke-opacity="0.30"/><line x1="1331.2" y1="51.4" x2="1281.2" y2="48.6" stroke-opacity="0.30"/><line x1="1281.2" y1="48.6" x2="1236.1" y2="46.1" stroke-opacity="0.30"/><line x1="1236.1" y1="46.1" x2="1195" y2="43.9" stroke-opacity="0.30"/><line x1="1195" y1="43.9" x2="1157.5" y2="41.8" stroke-opacity="0.30"/><line x1="1157.5" y1="41.8" x2="1123.1" y2="39.9" stroke-opacity="0.30"/><line x1="1123.1" y1="39.9" x2="1091.4" y2="38.2" stroke-opacity="0.30"/><line x1="1091.4" y1="38.2" x2="1062.2" y2="36.6" stroke-opacity="0.30"/><line x1="1062.2" y1="36.6" x2="1035.1" y2="35.1" stroke-opacity="0.30"/><line x1="1035.1" y1="35.1" x2="1009.9" y2="33.7" stroke-opacity="0.30"/><line x1="1009.9" y1="33.7" x2="986.5" y2="32.4" stroke-opacity="0.30"/><line x1="986.5" y1="32.4" x2="964.7" y2="31.2" stroke-opacity="0.30"/><line x1="964.7" y1="31.2" x2="944.2" y2="30.1" stroke-opacity="0.30"/><line x1="944.2" y1="30.1" x2="925" y2="29" stroke-opacity="0.30"/><line x1="1810.9" y1="76.3" x2="1706.8" y2="70.6" stroke-opacity="0.30"/><line x1="1706.8" y1="70.6" x2="1616.3" y2="65.8" stroke-opacity="0.30"/><line x1="1616.3" y1="65.8" x2="1537" y2="61.5" stroke-opacity="0.30"/><line x1="1537" y1="61.5" x2="1466.9" y2="57.7" stroke-opacity="0.30"/><line x1="1466.9" y1="57.7" x2="1404.5" y2="54.3" stroke-opacity="0.30"/><line x1="1404.5" y1="54.3" x2="1348.6" y2="51.3" stroke-opacity="0.30"/><line x1="1348.6" y1="51.3" x2="1298.2" y2="48.6" stroke-opacity="0.30"/><line x1="1298.2" y1="48.6" x2="1252.5" y2="46.1" stroke-opacity="0.30"/><line x1="1252.5" y1="46.1" x2="1211" y2="43.9" stroke-opacity="0.30"/><line x1="1211" y1="43.9" x2="1173" y2="41.8" stroke-opacity="0.30"/><line x1="1173" y1="41.8" x2="1138.2" y2="39.9" stroke-opacity="0.30"/><line x1="1138.2" y1="39.9" x2="1106.2" y2="38.2" stroke-opacity="0.30"/><line x1="1106.2" y1="38.2" x2="1076.5" y2="36.6" stroke-opacity="0.30"/><line x1="1076.5" y1="36.6" x2="1049.1" y2="35.1" stroke-opacity="0.30"/><line x1="1049.1" y1="35.1" x2="1023.6" y2="33.7" stroke-opacity="0.30"/><line x1="1023.6" y1="33.7" x2="999.8" y2="32.5" stroke-opacity="0.30"/><line x1="999.8" y1="32.5" x2="977.6" y2="31.3" stroke-opacity="0.30"/><line x1="977.6" y1="31.3" x2="956.9" y2="30.1" stroke-opacity="0.30"/><line x1="956.9" y1="30.1" x2="937.4" y2="29.1" stroke-opacity="0.30"/><line x1="1830.4" y1="75.9" x2="1726" y2="70.3" stroke-opacity="0.30"/><line x1="1726" y1="70.3" x2="1635.3" y2="65.5" stroke-opacity="0.30"/><line x1="1635.3" y1="65.5" x2="1555.5" y2="61.3" stroke-opacity="0.30"/><line x1="1555.5" y1="61.3" x2="1485" y2="57.6" stroke-opacity="0.30"/><line x1="1485" y1="57.6" x2="1422.1" y2="54.2" stroke-opacity="0.30"/><line x1="1422.1" y1="54.2" x2="1365.7" y2="51.2" stroke-opacity="0.30"/><line x1="1365.7" y1="51.2" x2="1314.9" y2="48.5" stroke-opacity="0.30"/><line x1="1314.9" y1="48.5" x2="1268.8" y2="46.1" stroke-opacity="0.30"/><line x1="1268.8" y1="46.1" x2="1226.8" y2="43.9" stroke-opacity="0.30"/><line x1="1226.8" y1="43.9" x2="1188.4" y2="41.8" stroke-opacity="0.30"/><line x1="1188.4" y1="41.8" x2="1153.2" y2="40" stroke-opacity="0.30"/><line x1="1153.2" y1="40" x2="1120.7" y2="38.2" stroke-opacity="0.30"/><line x1="1120.7" y1="38.2" x2="1090.7" y2="36.6" stroke-opacity="0.30"/><line x1="1090.7" y1="36.6" x2="1062.9" y2="35.2" stroke-opacity="0.30"/><line x1="1062.9" y1="35.2" x2="1037.1" y2="33.8" stroke-opacity="0.30"/><line x1="1037.1" y1="33.8" x2="1013" y2="32.5" stroke-opacity="0.30"/><line x1="1013" y1="32.5" x2="990.5" y2="31.3" stroke-opacity="0.30"/><line x1="990.5" y1="31.3" x2="969.4" y2="30.2" stroke-opacity="0.30"/><line x1="969.4" y1="30.2" x2="949.6" y2="29.2" stroke-opacity="0.30"/><line x1="1849.5" y1="75.5" x2="1744.9" y2="70.1" stroke-opacity="0.30"/><line x1="1744.9" y1="70.1" x2="1653.8" y2="65.3" stroke-opacity="0.30"/><line x1="1653.8" y1="65.3" x2="1573.7" y2="61.1" stroke-opacity="0.30"/><line x1="1573.7" y1="61.1" x2="1502.7" y2="57.4" stroke-opacity="0.30"/><line x1="1502.7" y1="57.4" x2="1439.4" y2="54.1" stroke-opacity="0.30"/><line x1="1439.4" y1="54.1" x2="1382.6" y2="51.2" stroke-opacity="0.30"/><line x1="1382.6" y1="51.2" x2="1331.3" y2="48.5" stroke-opacity="0.30"/><line x1="1331.3" y1="48.5" x2="1284.8" y2="46.1" stroke-opacity="0.30"/><line x1="1284.8" y1="46.1" x2="1242.4" y2="43.9" stroke-opacity="0.30"/><line x1="1242.4" y1="43.9" x2="1203.6" y2="41.8" stroke-opacity="0.30"/><line x1="1203.6" y1="41.8" x2="1168" y2="40" stroke-opacity="0.30"/><line x1="1168" y1="40" x2="1135.1" y2="38.3" stroke-opacity="0.30"/><line x1="1135.1" y1="38.3" x2="1104.8" y2="36.7" stroke-opacity="0.30"/><line x1="1104.8" y1="36.7" x2="1076.6" y2="35.2" stroke-opacity="0.30"/><line x1="1076.6" y1="35.2" x2="1050.4" y2="33.8" stroke-opacity="0.30"/><line x1="1050.4" y1="33.8" x2="1026" y2="32.6" stroke-opacity="0.30"/><line x1="1026" y1="32.6" x2="1003.2" y2="31.4" stroke-opacity="0.30"/><line x1="1003.2" y1="31.4" x2="981.8" y2="30.3" stroke-opacity="0.30"/><line x1="981.8" y1="30.3" x2="961.7" y2="29.2" stroke-opacity="0.30"/><line x1="1868.1" y1="75.1" x2="1763.3" y2="69.8" stroke-opacity="0.30"/><line x1="1763.3" y1="69.8" x2="1672" y2="65.1" stroke-opacity="0.30"/><line x1="1672" y1="65.1" x2="1591.5" y2="61" stroke-opacity="0.30"/><line x1="1591.5" y1="61" x2="1520.2" y2="57.3" stroke-opacity="0.30"/><line x1="1520.2" y1="57.3" x2="1456.5" y2="54" stroke-opacity="0.30"/><line x1="1456.5" y1="54" x2="1399.2" y2="51.1" stroke-opacity="0.30"/><line x1="1399.2" y1="51.1" x2="1347.5" y2="48.4" stroke-opacity="0.30"/><line x1="1347.5" y1="48.4" x2="1300.6" y2="46" stroke-opacity="0.30"/><line x1="1300.6" y1="46" x2="1257.8" y2="43.8" stroke-opacity="0.30"/><line x1="1257.8" y1="43.8" x2="1218.6" y2="41.8" stroke-opacity="0.30"/><line x1="1218.6" y1="41.8" x2="1182.6" y2="40" stroke-opacity="0.30"/><line x1="1182.6" y1="40" x2="1149.3" y2="38.3" stroke-opacity="0.30"/><line x1="1149.3" y1="38.3" x2="1118.6" y2="36.7" stroke-opacity="0.30"/><line x1="1118.6" y1="36.7" x2="1090.1" y2="35.3" stroke-opacity="0.30"/><line x1="1090.1" y1="35.3" x2="1063.6" y2="33.9" stroke-opacity="0.30"/><line x1="1063.6" y1="33.9" x2="1038.9" y2="32.6" stroke-opacity="0.30"/><line x1="1038.9" y1="32.6" x2="1015.7" y2="31.4" stroke-opacity="0.30"/><line x1="1015.7" y1="31.4" x2="994.1" y2="30.3" stroke-opacity="0.30"/><line x1="994.1" y1="30.3" x2="973.7" y2="29.3" stroke-opacity="0.30"/><line x1="1886.3" y1="74.8" x2="1781.4" y2="69.5" stroke-opacity="0.30"/><line x1="1781.4" y1="69.5" x2="1689.8" y2="64.9" stroke-opacity="0.30"/><line x1="1689.8" y1="64.9" x2="1609" y2="60.8" stroke-opacity="0.30"/><line x1="1609" y1="60.8" x2="1537.3" y2="57.2" stroke-opacity="0.30"/><line x1="1537.3" y1="57.2" x2="1473.2" y2="53.9" stroke-opacity="0.30"/><line x1="1473.2" y1="53.9" x2="1415.6" y2="51" stroke-opacity="0.30"/><line x1="1415.6" y1="51" x2="1363.5" y2="48.4" stroke-opacity="0.30"/><line x1="1363.5" y1="48.4" x2="1316.1" y2="46" stroke-opacity="0.30"/><line x1="1316.1" y1="46" x2="1272.9" y2="43.8" stroke-opacity="0.30"/><line x1="1272.9" y1="43.8" x2="1233.4" y2="41.8" stroke-opacity="0.30"/><line x1="1233.4" y1="41.8" x2="1197" y2="40" stroke-opacity="0.30"/><line x1="1197" y1="40" x2="1163.4" y2="38.3" stroke-opacity="0.30"/><line x1="1163.4" y1="38.3" x2="1132.3" y2="36.7" stroke-opacity="0.30"/><line x1="1132.3" y1="36.7" x2="1103.5" y2="35.3" stroke-opacity="0.30"/><line x1="1103.5" y1="35.3" x2="1076.6" y2="33.9" stroke-opacity="0.30"/><line x1="1076.6" y1="33.9" x2="1051.6" y2="32.7" stroke-opacity="0.30"/><line x1="1051.6" y1="32.7" x2="1028.2" y2="31.5" stroke-opacity="0.30"/><line x1="1028.2" y1="31.5" x2="1006.2" y2="30.4" stroke-opacity="0.30"/><line x1="1006.2" y1="30.4" x2="985.6" y2="29.3" stroke-opacity="0.30"/><line x1="1904.1" y1="74.4" x2="1799.1" y2="69.2" stroke-opacity="0.30"/><line x1="1799.1" y1="69.2" x2="1707.3" y2="64.6" stroke-opacity="0.30"/><line x1="1707.3" y1="64.6" x2="1626.2" y2="60.6" stroke-opacity="0.30"/><line x1="1626.2" y1="60.6" x2="1554.2" y2="57" stroke-opacity="0.30"/><line x1="1554.2" y1="57" x2="1489.7" y2="53.8" stroke-opacity="0.30"/><line x1="1489.7" y1="53.8" x2="1431.7" y2="51" stroke-opacity="0.30"/><line x1="1431.7" y1="51" x2="1379.2" y2="48.4" stroke-opacity="0.30"/><line x1="1379.2" y1="48.4" x2="1331.5" y2="46" stroke-opacity="0.30"/><line x1="1331.5" y1="46" x2="1287.9" y2="43.8" stroke-opacity="0.30"/><line x1="1287.9" y1="43.8" x2="1248" y2="41.8" stroke-opacity="0.30"/><line x1="1248" y1="41.8" x2="1211.2" y2="40" stroke-opacity="0.30"/><line x1="1211.2" y1="40" x2="1177.3" y2="38.3" stroke-opacity="0.30"/><line x1="1177.3" y1="38.3" x2="1145.9" y2="36.8" stroke-opacity="0.30"/><line x1="1145.9" y1="36.8" x2="1116.7" y2="35.3" stroke-opacity="0.30"/><line x1="1116.7" y1="35.3" x2="1089.6" y2="34" stroke-opacity="0.30"/><line x1="1089.6" y1="34" x2="1064.2" y2="32.7" stroke-opacity="0.30"/><line x1="1064.2" y1="32.7" x2="1040.5" y2="31.6" stroke-opacity="0.30"/><line x1="1040.5" y1="31.6" x2="1018.3" y2="30.4" stroke-opacity="0.30"/><line x1="1018.3" y1="30.4" x2="997.4" y2="29.4" stroke-opacity="0.30"/><line x1="1816.4" y1="68.9" x2="1724.4" y2="64.4" stroke-opacity="0.30"/><line x1="1724.4" y1="64.4" x2="1643.1" y2="60.5" stroke-opacity="0.30"/><line x1="1643.1" y1="60.5" x2="1570.7" y2="56.9" stroke-opacity="0.30"/><line x1="1570.7" y1="56.9" x2="1505.9" y2="53.8" stroke-opacity="0.30"/><line x1="1505.9" y1="53.8" x2="1447.5" y2="50.9" stroke-opacity="0.30"/><line x1="1447.5" y1="50.9" x2="1394.7" y2="48.3" stroke-opacity="0.30"/><line x1="1394.7" y1="48.3" x2="1346.6" y2="46" stroke-opacity="0.30"/><line x1="1346.6" y1="46" x2="1302.7" y2="43.8" stroke-opacity="0.30"/><line x1="1302.7" y1="43.8" x2="1262.4" y2="41.9" stroke-opacity="0.30"/><line x1="1262.4" y1="41.9" x2="1225.3" y2="40" stroke-opacity="0.30"/><line x1="1225.3" y1="40" x2="1191" y2="38.4" stroke-opacity="0.30"/><line x1="1191" y1="38.4" x2="1159.3" y2="36.8" stroke-opacity="0.30"/><line x1="1159.3" y1="36.8" x2="1129.8" y2="35.4" stroke-opacity="0.30"/><line x1="1129.8" y1="35.4" x2="1102.3" y2="34" stroke-opacity="0.30"/><line x1="1102.3" y1="34" x2="1076.7" y2="32.8" stroke-opacity="0.30"/><line x1="1076.7" y1="32.8" x2="1052.7" y2="31.6" stroke-opacity="0.30"/><line x1="1052.7" y1="31.6" x2="1030.2" y2="30.5" stroke-opacity="0.30"/><line x1="1030.2" y1="30.5" x2="1009.1" y2="29.5" stroke-opacity="0.30"/><line x1="1833.4" y1="68.7" x2="1741.2" y2="64.2" stroke-opacity="0.30"/><line x1="1741.2" y1="64.2" x2="1659.7" y2="60.3" stroke-opacity="0.30"/><line x1="1659.7" y1="60.3" x2="1587" y2="56.8" stroke-opacity="0.30"/><line x1="1587" y1="56.8" x2="1521.9" y2="53.7" stroke-opacity="0.30"/><line x1="1521.9" y1="53.7" x2="1463.2" y2="50.8" stroke-opacity="0.30"/><line x1="1463.2" y1="50.8" x2="1409.9" y2="48.3" stroke-opacity="0.30"/><line x1="1409.9" y1="48.3" x2="1361.5" y2="45.9" stroke-opacity="0.30"/><line x1="1361.5" y1="45.9" x2="1317.2" y2="43.8" stroke-opacity="0.30"/><line x1="1317.2" y1="43.8" x2="1276.6" y2="41.9" stroke-opacity="0.30"/><line x1="1276.6" y1="41.9" x2="1239.2" y2="40.1" stroke-opacity="0.30"/><line x1="1239.2" y1="40.1" x2="1204.6" y2="38.4" stroke-opacity="0.30"/><line x1="1204.6" y1="38.4" x2="1172.5" y2="36.8" stroke-opacity="0.30"/><line x1="1172.5" y1="36.8" x2="1142.7" y2="35.4" stroke-opacity="0.30"/><line x1="1142.7" y1="35.4" x2="1115" y2="34.1" stroke-opacity="0.30"/><line x1="1115" y1="34.1" x2="1089.1" y2="32.8" stroke-opacity="0.30"/><line x1="1089.1" y1="32.8" x2="1064.8" y2="31.7" stroke-opacity="0.30"/><line x1="1064.8" y1="31.7" x2="1042" y2="30.6" stroke-opacity="0.30"/><line x1="1850.1" y1="68.4" x2="1757.7" y2="64" stroke-opacity="0.30"/><line x1="1757.7" y1="64" x2="1675.9" y2="60.1" stroke-opacity="0.30"/><line x1="1675.9" y1="60.1" x2="1603" y2="56.7" stroke-opacity="0.30"/><line x1="1603" y1="56.7" x2="1537.6" y2="53.6" stroke-opacity="0.30"/><line x1="1537.6" y1="53.6" x2="1478.5" y2="50.8" stroke-opacity="0.30"/><line x1="1478.5" y1="50.8" x2="1425" y2="48.2" stroke-opacity="0.30"/><line x1="1425" y1="48.2" x2="1376.2" y2="45.9" stroke-opacity="0.30"/><line x1="1376.2" y1="45.9" x2="1331.6" y2="43.8" stroke-opacity="0.30"/><line x1="1331.6" y1="43.8" x2="1290.6" y2="41.9" stroke-opacity="0.30"/><line x1="1290.6" y1="41.9" x2="1252.9" y2="40.1" stroke-opacity="0.30"/><line x1="1252.9" y1="40.1" x2="1218" y2="38.4" stroke-opacity="0.30"/><line x1="1218" y1="38.4" x2="1185.6" y2="36.9" stroke-opacity="0.30"/><line x1="1185.6" y1="36.9" x2="1155.5" y2="35.5" stroke-opacity="0.30"/><line x1="1155.5" y1="35.5" x2="1127.5" y2="34.1" stroke-opacity="0.30"/><line x1="1127.5" y1="34.1" x2="1101.3" y2="32.9" stroke-opacity="0.30"/><line x1="1101.3" y1="32.9" x2="1076.7" y2="31.7" stroke-opacity="0.30"/><line x1="1076.7" y1="31.7" x2="1053.7" y2="30.6" stroke-opacity="0.30"/><line x1="1866.4" y1="68.2" x2="1773.9" y2="63.8" stroke-opacity="0.30"/><line x1="1773.9" y1="63.8" x2="1691.9" y2="60" stroke-opacity="0.30"/><line x1="1691.9" y1="60" x2="1618.7" y2="56.6" stroke-opacity="0.30"/><line x1="1618.7" y1="56.6" x2="1553" y2="53.5" stroke-opacity="0.30"/><line x1="1553" y1="53.5" x2="1493.7" y2="50.7" stroke-opacity="0.30"/><line x1="1493.7" y1="50.7" x2="1439.8" y2="48.2" stroke-opacity="0.30"/><line x1="1439.8" y1="48.2" x2="1390.7" y2="45.9" stroke-opacity="0.30"/><line x1="1390.7" y1="45.9" x2="1345.8" y2="43.8" stroke-opacity="0.30"/><line x1="1345.8" y1="43.8" x2="1304.5" y2="41.9" stroke-opacity="0.30"/><line x1="1304.5" y1="41.9" x2="1266.4" y2="40.1" stroke-opacity="0.30"/><line x1="1266.4" y1="40.1" x2="1231.2" y2="38.4" stroke-opacity="0.30"/><line x1="1231.2" y1="38.4" x2="1198.6" y2="36.9" stroke-opacity="0.30"/><line x1="1198.6" y1="36.9" x2="1168.2" y2="35.5" stroke-opacity="0.30"/><line x1="1168.2" y1="35.5" x2="1139.9" y2="34.2" stroke-opacity="0.30"/><line x1="1139.9" y1="34.2" x2="1113.4" y2="32.9" stroke-opacity="0.30"/><line x1="1113.4" y1="32.9" x2="1088.6" y2="31.8" stroke-opacity="0.30"/><line x1="1088.6" y1="31.8" x2="1065.3" y2="30.7" stroke-opacity="0.30"/><line x1="1882.4" y1="67.9" x2="1789.8" y2="63.6" stroke-opacity="0.30"/><line x1="1789.8" y1="63.6" x2="1707.6" y2="59.8" stroke-opacity="0.30"/><line x1="1707.6" y1="59.8" x2="1634.2" y2="56.5" stroke-opacity="0.30"/><line x1="1634.2" y1="56.5" x2="1568.2" y2="53.4" stroke-opacity="0.30"/><line x1="1568.2" y1="53.4" x2="1508.6" y2="50.7" stroke-opacity="0.30"/><line x1="1508.6" y1="50.7" x2="1454.4" y2="48.2" stroke-opacity="0.30"/><line x1="1454.4" y1="48.2" x2="1405" y2="45.9" stroke-opacity="0.30"/><line x1="1405" y1="45.9" x2="1359.8" y2="43.8" stroke-opacity="0.30"/><line x1="1359.8" y1="43.8" x2="1318.2" y2="41.9" stroke-opacity="0.30"/><line x1="1318.2" y1="41.9" x2="1279.8" y2="40.1" stroke-opacity="0.30"/><line x1="1279.8" y1="40.1" x2="1244.3" y2="38.5" stroke-opacity="0.30"/><line x1="1244.3" y1="38.5" x2="1211.4" y2="36.9" stroke-opacity="0.30"/><line x1="1211.4" y1="36.9" x2="1180.7" y2="35.5" stroke-opacity="0.30"/><line x1="1180.7" y1="35.5" x2="1152.1" y2="34.2" stroke-opacity="0.30"/><line x1="1152.1" y1="34.2" x2="1125.4" y2="33" stroke-opacity="0.30"/><line x1="1125.4" y1="33" x2="1100.3" y2="31.8" stroke-opacity="0.30"/><line x1="1100.3" y1="31.8" x2="1076.8" y2="30.7" stroke-opacity="0.30"/><line x1="1805.4" y1="63.4" x2="1723.1" y2="59.7" stroke-opacity="0.30"/><line x1="1723.1" y1="59.7" x2="1649.4" y2="56.3" stroke-opacity="0.30"/><line x1="1649.4" y1="56.3" x2="1583.2" y2="53.3" stroke-opacity="0.30"/><line x1="1583.2" y1="53.3" x2="1523.3" y2="50.6" stroke-opacity="0.30"/><line x1="1523.3" y1="50.6" x2="1468.8" y2="48.1" stroke-opacity="0.30"/><line x1="1468.8" y1="48.1" x2="1419.1" y2="45.9" stroke-opacity="0.30"/><line x1="1419.1" y1="45.9" x2="1373.6" y2="43.8" stroke-opacity="0.30"/><line x1="1373.6" y1="43.8" x2="1331.7" y2="41.9" stroke-opacity="0.30"/><line x1="1331.7" y1="41.9" x2="1293" y2="40.1" stroke-opacity="0.30"/><line x1="1293" y1="40.1" x2="1257.3" y2="38.5" stroke-opacity="0.30"/><line x1="1257.3" y1="38.5" x2="1224" y2="37" stroke-opacity="0.30"/><line x1="1224" y1="37" x2="1193.1" y2="35.6" stroke-opacity="0.30"/><line x1="1193.1" y1="35.6" x2="1164.2" y2="34.3" stroke-opacity="0.30"/><line x1="1164.2" y1="34.3" x2="1137.2" y2="33" stroke-opacity="0.30"/><line x1="1137.2" y1="33" x2="1111.9" y2="31.9" stroke-opacity="0.30"/><line x1="1111.9" y1="31.9" x2="1088.2" y2="30.8" stroke-opacity="0.30"/><line x1="1820.7" y1="63.3" x2="1738.3" y2="59.5" stroke-opacity="0.30"/><line x1="1738.3" y1="59.5" x2="1664.4" y2="56.2" stroke-opacity="0.30"/><line x1="1664.4" y1="56.2" x2="1597.9" y2="53.2" stroke-opacity="0.30"/><line x1="1597.9" y1="53.2" x2="1537.8" y2="50.5" stroke-opacity="0.30"/><line x1="1537.8" y1="50.5" x2="1483.1" y2="48.1" stroke-opacity="0.30"/><line x1="1483.1" y1="48.1" x2="1433.1" y2="45.8" stroke-opacity="0.30"/><line x1="1433.1" y1="45.8" x2="1387.2" y2="43.8" stroke-opacity="0.30"/><line x1="1387.2" y1="43.8" x2="1345.1" y2="41.9" stroke-opacity="0.30"/><line x1="1345.1" y1="41.9" x2="1306.1" y2="40.1" stroke-opacity="0.30"/><line x1="1306.1" y1="40.1" x2="1270.1" y2="38.5" stroke-opacity="0.30"/><line x1="1270.1" y1="38.5" x2="1236.6" y2="37" stroke-opacity="0.30"/><line x1="1236.6" y1="37" x2="1205.4" y2="35.6" stroke-opacity="0.30"/><line x1="1205.4" y1="35.6" x2="1176.2" y2="34.3" stroke-opacity="0.30"/><line x1="1176.2" y1="34.3" x2="1149" y2="33.1" stroke-opacity="0.30"/><line x1="1149" y1="33.1" x2="1123.4" y2="31.9" stroke-opacity="0.30"/><line x1="1123.4" y1="31.9" x2="1099.4" y2="30.8" stroke-opacity="0.30"/><line x1="1835.8" y1="63.1" x2="1753.2" y2="59.4" stroke-opacity="0.30"/><line x1="1753.2" y1="59.4" x2="1679.2" y2="56.1" stroke-opacity="0.30"/><line x1="1679.2" y1="56.1" x2="1612.5" y2="53.2" stroke-opacity="0.30"/><line x1="1612.5" y1="53.2" x2="1552.1" y2="50.5" stroke-opacity="0.30"/><line x1="1552.1" y1="50.5" x2="1497.1" y2="48" stroke-opacity="0.30"/><line x1="1497.1" y1="48" x2="1446.8" y2="45.8" stroke-opacity="0.30"/><line x1="1446.8" y1="45.8" x2="1400.7" y2="43.8" stroke-opacity="0.30"/><line x1="1400.7" y1="43.8" x2="1358.3" y2="41.9" stroke-opacity="0.30"/><line x1="1358.3" y1="41.9" x2="1319" y2="40.1" stroke-opacity="0.30"/><line x1="1319" y1="40.1" x2="1282.7" y2="38.5" stroke-opacity="0.30"/><line x1="1282.7" y1="38.5" x2="1248.9" y2="37" stroke-opacity="0.30"/><line x1="1248.9" y1="37" x2="1217.5" y2="35.6" stroke-opacity="0.30"/><line x1="1217.5" y1="35.6" x2="1188.1" y2="34.3" stroke-opacity="0.30"/><line x1="1188.1" y1="34.3" x2="1160.6" y2="33.1" stroke-opacity="0.30"/><line x1="1160.6" y1="33.1" x2="1134.8" y2="32" stroke-opacity="0.30"/><line x1="1134.8" y1="32" x2="1110.6" y2="30.9" stroke-opacity="0.30"/><line x1="1850.5" y1="62.9" x2="1767.8" y2="59.3" stroke-opacity="0.30"/><line x1="1767.8" y1="59.3" x2="1693.7" y2="56" stroke-opacity="0.30"/><line x1="1693.7" y1="56" x2="1626.8" y2="53.1" stroke-opacity="0.30"/><line x1="1626.8" y1="53.1" x2="1566.1" y2="50.4" stroke-opacity="0.30"/><line x1="1566.1" y1="50.4" x2="1510.9" y2="48" stroke-opacity="0.30"/><line x1="1510.9" y1="48" x2="1460.4" y2="45.8" stroke-opacity="0.30"/><line x1="1460.4" y1="45.8" x2="1414" y2="43.8" stroke-opacity="0.30"/><line x1="1414" y1="43.8" x2="1371.3" y2="41.9" stroke-opacity="0.30"/><line x1="1371.3" y1="41.9" x2="1331.8" y2="40.2" stroke-opacity="0.30"/><line x1="1331.8" y1="40.2" x2="1295.2" y2="38.6" stroke-opacity="0.30"/><line x1="1295.2" y1="38.6" x2="1261.2" y2="37.1" stroke-opacity="0.30"/><line x1="1261.2" y1="37.1" x2="1229.5" y2="35.7" stroke-opacity="0.30"/><line x1="1229.5" y1="35.7" x2="1199.9" y2="34.4" stroke-opacity="0.30"/><line x1="1199.9" y1="34.4" x2="1172.1" y2="33.2" stroke-opacity="0.30"/><line x1="1172.1" y1="33.2" x2="1146.1" y2="32" stroke-opacity="0.30"/><line x1="1865.1" y1="62.7" x2="1782.3" y2="59.1" stroke-opacity="0.30"/><line x1="1782.3" y1="59.1" x2="1707.9" y2="55.9" stroke-opacity="0.30"/><line x1="1707.9" y1="55.9" x2="1640.8" y2="53" stroke-opacity="0.30"/><line x1="1640.8" y1="53" x2="1580" y2="50.4" stroke-opacity="0.30"/><line x1="1580" y1="50.4" x2="1524.5" y2="48" stroke-opacity="0.30"/><line x1="1524.5" y1="48" x2="1473.8" y2="45.8" stroke-opacity="0.30"/><line x1="1473.8" y1="45.8" x2="1427.1" y2="43.8" stroke-opacity="0.30"/><line x1="1427.1" y1="43.8" x2="1384.2" y2="41.9" stroke-opacity="0.30"/><line x1="1384.2" y1="41.9" x2="1344.4" y2="40.2" stroke-opacity="0.30"/><line x1="1344.4" y1="40.2" x2="1307.6" y2="38.6" stroke-opacity="0.30"/><line x1="1307.6" y1="38.6" x2="1273.3" y2="37.1" stroke-opacity="0.30"/><line x1="1273.3" y1="37.1" x2="1241.4" y2="35.7" stroke-opacity="0.30"/><line x1="1241.4" y1="35.7" x2="1211.5" y2="34.4" stroke-opacity="0.30"/><line x1="1211.5" y1="34.4" x2="1183.5" y2="33.2" stroke-opacity="0.30"/><line x1="1183.5" y1="33.2" x2="1157.3" y2="32.1" stroke-opacity="0.30"/><line x1="1879.3" y1="62.5" x2="1796.4" y2="59" stroke-opacity="0.30"/><line x1="1796.4" y1="59" x2="1722" y2="55.8" stroke-opacity="0.30"/><line x1="1722" y1="55.8" x2="1654.7" y2="52.9" stroke-opacity="0.30"/><line x1="1654.7" y1="52.9" x2="1593.6" y2="50.3" stroke-opacity="0.30"/><line x1="1593.6" y1="50.3" x2="1538" y2="47.9" stroke-opacity="0.30"/><line x1="1538" y1="47.9" x2="1487" y2="45.8" stroke-opacity="0.30"/><line x1="1487" y1="45.8" x2="1440.1" y2="43.8" stroke-opacity="0.30"/><line x1="1440.1" y1="43.8" x2="1396.9" y2="41.9" stroke-opacity="0.30"/><line x1="1396.9" y1="41.9" x2="1356.9" y2="40.2" stroke-opacity="0.30"/><line x1="1356.9" y1="40.2" x2="1319.8" y2="38.6" stroke-opacity="0.30"/><line x1="1319.8" y1="38.6" x2="1285.3" y2="37.1" stroke-opacity="0.30"/><line x1="1285.3" y1="37.1" x2="1253.1" y2="35.8" stroke-opacity="0.30"/><line x1="1253.1" y1="35.8" x2="1223" y2="34.5" stroke-opacity="0.30"/><line x1="1223" y1="34.5" x2="1194.8" y2="33.3" stroke-opacity="0.30"/><line x1="1194.8" y1="33.3" x2="1168.4" y2="32.1" stroke-opacity="0.30"/><line x1="1810.4" y1="58.9" x2="1735.8" y2="55.7" stroke-opacity="0.30"/><line x1="1735.8" y1="55.7" x2="1668.4" y2="52.9" stroke-opacity="0.30"/><line x1="1668.4" y1="52.9" x2="1607.1" y2="50.3" stroke-opacity="0.30"/><line x1="1607.1" y1="50.3" x2="1551.2" y2="47.9" stroke-opacity="0.30"/><line x1="1551.2" y1="47.9" x2="1500" y2="45.7" stroke-opacity="0.30"/><line x1="1500" y1="45.7" x2="1452.9" y2="43.7" stroke-opacity="0.30"/><line x1="1452.9" y1="43.7" x2="1409.5" y2="41.9" stroke-opacity="0.30"/><line x1="1409.5" y1="41.9" x2="1369.2" y2="40.2" stroke-opacity="0.30"/><line x1="1369.2" y1="40.2" x2="1331.9" y2="38.6" stroke-opacity="0.30"/><line x1="1331.9" y1="38.6" x2="1297.2" y2="37.2" stroke-opacity="0.30"/><line x1="1297.2" y1="37.2" x2="1264.7" y2="35.8" stroke-opacity="0.30"/><line x1="1264.7" y1="35.8" x2="1234.4" y2="34.5" stroke-opacity="0.30"/><line x1="1234.4" y1="34.5" x2="1206" y2="33.3" stroke-opacity="0.30"/><line x1="1206" y1="33.3" x2="1179.3" y2="32.2" stroke-opacity="0.30"/><line x1="1824.1" y1="58.7" x2="1749.4" y2="55.6" stroke-opacity="0.30"/><line x1="1749.4" y1="55.6" x2="1681.8" y2="52.8" stroke-opacity="0.30"/><line x1="1681.8" y1="52.8" x2="1620.4" y2="50.2" stroke-opacity="0.30"/><line x1="1620.4" y1="50.2" x2="1564.3" y2="47.9" stroke-opacity="0.30"/><line x1="1564.3" y1="47.9" x2="1512.9" y2="45.7" stroke-opacity="0.30"/><line x1="1512.9" y1="45.7" x2="1465.5" y2="43.7" stroke-opacity="0.30"/><line x1="1465.5" y1="43.7" x2="1421.9" y2="41.9" stroke-opacity="0.30"/><line x1="1421.9" y1="41.9" x2="1381.4" y2="40.2" stroke-opacity="0.30"/><line x1="1381.4" y1="40.2" x2="1343.9" y2="38.7" stroke-opacity="0.30"/><line x1="1343.9" y1="38.7" x2="1308.9" y2="37.2" stroke-opacity="0.30"/><line x1="1308.9" y1="37.2" x2="1276.2" y2="35.8" stroke-opacity="0.30"/><line x1="1276.2" y1="35.8" x2="1245.7" y2="34.5" stroke-opacity="0.30"/><line x1="1245.7" y1="34.5" x2="1217.1" y2="33.4" stroke-opacity="0.30"/><line x1="1217.1" y1="33.4" x2="1190.2" y2="32.2" stroke-opacity="0.30"/><line x1="1837.6" y1="58.6" x2="1762.8" y2="55.5" stroke-opacity="0.30"/><line x1="1762.8" y1="55.5" x2="1695.1" y2="52.7" stroke-opacity="0.30"/><line x1="1695.1" y1="52.7" x2="1633.5" y2="50.2" stroke-opacity="0.30"/><line x1="1633.5" y1="50.2" x2="1577.2" y2="47.8" stroke-opacity="0.30"/><line x1="1577.2" y1="47.8" x2="1525.6" y2="45.7" stroke-opacity="0.30"/><line x1="1525.6" y1="45.7" x2="1478" y2="43.7" stroke-opacity="0.30"/><line x1="1478" y1="43.7" x2="1434.1" y2="41.9" stroke-opacity="0.30"/><line x1="1434.1" y1="41.9" x2="1393.5" y2="40.2" stroke-opacity="0.30"/><line x1="1393.5" y1="40.2" x2="1355.7" y2="38.7" stroke-opacity="0.30"/><line x1="1355.7" y1="38.7" x2="1320.5" y2="37.2" stroke-opacity="0.30"/><line x1="1320.5" y1="37.2" x2="1287.6" y2="35.9" stroke-opacity="0.30"/><line x1="1287.6" y1="35.9" x2="1256.9" y2="34.6" stroke-opacity="0.30"/><line x1="1256.9" y1="34.6" x2="1228" y2="33.4" stroke-opacity="0.30"/><line x1="1228" y1="33.4" x2="1200.9" y2="32.3" stroke-opacity="0.30"/><line x1="1850.9" y1="58.5" x2="1776" y2="55.4" stroke-opacity="0.30"/><line x1="1776" y1="55.4" x2="1708.2" y2="52.6" stroke-opacity="0.30"/><line x1="1708.2" y1="52.6" x2="1646.4" y2="50.1" stroke-opacity="0.30"/><line x1="1646.4" y1="50.1" x2="1589.9" y2="47.8" stroke-opacity="0.30"/><line x1="1589.9" y1="47.8" x2="1538.1" y2="45.7" stroke-opacity="0.30"/><line x1="1538.1" y1="45.7" x2="1490.4" y2="43.7" stroke-opacity="0.30"/><line x1="1490.4" y1="43.7" x2="1446.3" y2="41.9" stroke-opacity="0.30"/><line x1="1446.3" y1="41.9" x2="1405.4" y2="40.2" stroke-opacity="0.30"/><line x1="1405.4" y1="40.2" x2="1367.4" y2="38.7" stroke-opacity="0.30"/><line x1="1367.4" y1="38.7" x2="1332" y2="37.2" stroke-opacity="0.30"/><line x1="1332" y1="37.2" x2="1298.9" y2="35.9" stroke-opacity="0.30"/><line x1="1298.9" y1="35.9" x2="1268" y2="34.6" stroke-opacity="0.30"/><line x1="1268" y1="34.6" x2="1238.9" y2="33.4" stroke-opacity="0.30"/><line x1="1864" y1="58.3" x2="1789" y2="55.3" stroke-opacity="0.30"/><line x1="1789" y1="55.3" x2="1721.1" y2="52.6" stroke-opacity="0.30"/><line x1="1721.1" y1="52.6" x2="1659.2" y2="50.1" stroke-opacity="0.30"/><line x1="1659.2" y1="50.1" x2="1602.5" y2="47.8" stroke-opacity="0.30"/><line x1="1602.5" y1="47.8" x2="1550.5" y2="45.7" stroke-opacity="0.30"/><line x1="1550.5" y1="45.7" x2="1502.6" y2="43.7" stroke-opacity="0.30"/><line x1="1502.6" y1="43.7" x2="1458.2" y2="41.9" stroke-opacity="0.30"/><line x1="1458.2" y1="41.9" x2="1417.2" y2="40.3" stroke-opacity="0.30"/><line x1="1417.2" y1="40.3" x2="1379" y2="38.7" stroke-opacity="0.30"/><line x1="1379" y1="38.7" x2="1343.3" y2="37.3" stroke-opacity="0.30"/><line x1="1343.3" y1="37.3" x2="1310.1" y2="35.9" stroke-opacity="0.30"/><line x1="1310.1" y1="35.9" x2="1278.9" y2="34.7" stroke-opacity="0.30"/><line x1="1278.9" y1="34.7" x2="1249.7" y2="33.5" stroke-opacity="0.30"/><line x1="1801.9" y1="55.2" x2="1733.8" y2="52.5" stroke-opacity="0.30"/><line x1="1733.8" y1="52.5" x2="1671.7" y2="50" stroke-opacity="0.30"/><line x1="1671.7" y1="50" x2="1614.9" y2="47.7" stroke-opacity="0.30"/><line x1="1614.9" y1="47.7" x2="1562.7" y2="45.6" stroke-opacity="0.30"/><line x1="1562.7" y1="45.6" x2="1514.6" y2="43.7" stroke-opacity="0.30"/><line x1="1514.6" y1="43.7" x2="1470.1" y2="41.9" stroke-opacity="0.30"/><line x1="1470.1" y1="41.9" x2="1428.8" y2="40.3" stroke-opacity="0.30"/><line x1="1428.8" y1="40.3" x2="1390.4" y2="38.7" stroke-opacity="0.30"/><line x1="1390.4" y1="38.7" x2="1354.6" y2="37.3" stroke-opacity="0.30"/><line x1="1354.6" y1="37.3" x2="1321.1" y2="36" stroke-opacity="0.30"/><line x1="1321.1" y1="36" x2="1289.8" y2="34.7" stroke-opacity="0.30"/><line x1="1289.8" y1="34.7" x2="1260.3" y2="33.5" stroke-opacity="0.30"/><line x1="1814.5" y1="55.1" x2="1746.3" y2="52.4" stroke-opacity="0.30"/><line x1="1746.3" y1="52.4" x2="1684.1" y2="50" stroke-opacity="0.30"/><line x1="1684.1" y1="50" x2="1627.2" y2="47.7" stroke-opacity="0.30"/><line x1="1627.2" y1="47.7" x2="1574.8" y2="45.6" stroke-opacity="0.30"/><line x1="1574.8" y1="45.6" x2="1526.5" y2="43.7" stroke-opacity="0.30"/><line x1="1526.5" y1="43.7" x2="1481.8" y2="41.9" stroke-opacity="0.30"/><line x1="1481.8" y1="41.9" x2="1440.3" y2="40.3" stroke-opacity="0.30"/><line x1="1440.3" y1="40.3" x2="1401.7" y2="38.8" stroke-opacity="0.30"/><line x1="1401.7" y1="38.8" x2="1365.7" y2="37.3" stroke-opacity="0.30"/><line x1="1365.7" y1="37.3" x2="1332.1" y2="36" stroke-opacity="0.30"/><line x1="1332.1" y1="36" x2="1300.5" y2="34.7" stroke-opacity="0.30"/><line x1="1300.5" y1="34.7" x2="1270.9" y2="33.6" stroke-opacity="0.30"/><line x1="1826.9" y1="55" x2="1758.7" y2="52.4" stroke-opacity="0.30"/><line x1="1758.7" y1="52.4" x2="1696.3" y2="49.9" stroke-opacity="0.30"/><line x1="1696.3" y1="49.9" x2="1639.2" y2="47.7" stroke-opacity="0.30"/><line x1="1639.2" y1="47.7" x2="1586.7" y2="45.6" stroke-opacity="0.30"/><line x1="1586.7" y1="45.6" x2="1538.2" y2="43.7" stroke-opacity="0.30"/><line x1="1538.2" y1="43.7" x2="1493.4" y2="41.9" stroke-opacity="0.30"/><line x1="1493.4" y1="41.9" x2="1451.7" y2="40.3" stroke-opacity="0.30"/><line x1="1451.7" y1="40.3" x2="1412.9" y2="38.8" stroke-opacity="0.30"/><line x1="1412.9" y1="38.8" x2="1376.7" y2="37.4" stroke-opacity="0.30"/><line x1="1376.7" y1="37.4" x2="1342.9" y2="36" stroke-opacity="0.30"/><line x1="1342.9" y1="36" x2="1311.1" y2="34.8" stroke-opacity="0.30"/><line x1="1311.1" y1="34.8" x2="1281.3" y2="33.6" stroke-opacity="0.30"/><line x1="1839.2" y1="54.9" x2="1770.8" y2="52.3" stroke-opacity="0.30"/><line x1="1770.8" y1="52.3" x2="1708.4" y2="49.9" stroke-opacity="0.30"/><line x1="1708.4" y1="49.9" x2="1651.2" y2="47.6" stroke-opacity="0.30"/><line x1="1651.2" y1="47.6" x2="1598.5" y2="45.6" stroke-opacity="0.30"/><line x1="1598.5" y1="45.6" x2="1549.9" y2="43.7" stroke-opacity="0.30"/><line x1="1549.9" y1="43.7" x2="1504.8" y2="41.9" stroke-opacity="0.30"/><line x1="1504.8" y1="41.9" x2="1463" y2="40.3" stroke-opacity="0.30"/><line x1="1463" y1="40.3" x2="1424" y2="38.8" stroke-opacity="0.30"/><line x1="1424" y1="38.8" x2="1387.6" y2="37.4" stroke-opacity="0.30"/><line x1="1387.6" y1="37.4" x2="1353.6" y2="36.1" stroke-opacity="0.30"/><line x1="1353.6" y1="36.1" x2="1321.7" y2="34.8" stroke-opacity="0.30"/><line x1="1321.7" y1="34.8" x2="1291.7" y2="33.7" stroke-opacity="0.30"/><line x1="1851.2" y1="54.8" x2="1782.8" y2="52.2" stroke-opacity="0.30"/><line x1="1782.8" y1="52.2" x2="1720.3" y2="49.8" stroke-opacity="0.30"/><line x1="1720.3" y1="49.8" x2="1663" y2="47.6" stroke-opacity="0.30"/><line x1="1663" y1="47.6" x2="1610.1" y2="45.6" stroke-opacity="0.30"/><line x1="1610.1" y1="45.6" x2="1561.3" y2="43.7" stroke-opacity="0.30"/><line x1="1561.3" y1="43.7" x2="1516.1" y2="41.9" stroke-opacity="0.30"/><line x1="1516.1" y1="41.9" x2="1474.1" y2="40.3" stroke-opacity="0.30"/><line x1="1474.1" y1="40.3" x2="1435" y2="38.8" stroke-opacity="0.30"/><line x1="1435" y1="38.8" x2="1398.4" y2="37.4" stroke-opacity="0.30"/><line x1="1398.4" y1="37.4" x2="1364.2" y2="36.1" stroke-opacity="0.30"/><line x1="1364.2" y1="36.1" x2="1332.1" y2="34.9" stroke-opacity="0.30"/><line x1="1863.1" y1="54.8" x2="1794.7" y2="52.1" stroke-opacity="0.30"/><line x1="1794.7" y1="52.1" x2="1732.1" y2="49.8" stroke-opacity="0.30"/><line x1="1732.1" y1="49.8" x2="1674.6" y2="47.6" stroke-opacity="0.30"/><line x1="1674.6" y1="47.6" x2="1621.6" y2="45.5" stroke-opacity="0.30"/><line x1="1621.6" y1="45.5" x2="1572.7" y2="43.7" stroke-opacity="0.30"/><line x1="1572.7" y1="43.7" x2="1527.3" y2="42" stroke-opacity="0.30"/><line x1="1527.3" y1="42" x2="1485.1" y2="40.3" stroke-opacity="0.30"/><line x1="1485.1" y1="40.3" x2="1445.8" y2="38.8" stroke-opacity="0.30"/><line x1="1445.8" y1="38.8" x2="1409.1" y2="37.4" stroke-opacity="0.30"/><line x1="1409.1" y1="37.4" x2="1374.7" y2="36.1" stroke-opacity="0.30"/><line x1="1374.7" y1="36.1" x2="1342.5" y2="34.9" stroke-opacity="0.30"/><line x1="1806.3" y1="52.1" x2="1743.6" y2="49.7" stroke-opacity="0.30"/><line x1="1743.6" y1="49.7" x2="1686.1" y2="47.5" stroke-opacity="0.30"/><line x1="1686.1" y1="47.5" x2="1633" y2="45.5" stroke-opacity="0.30"/><line x1="1633" y1="45.5" x2="1583.9" y2="43.7" stroke-opacity="0.30"/><line x1="1583.9" y1="43.7" x2="1538.4" y2="42" stroke-opacity="0.30"/><line x1="1538.4" y1="42" x2="1496" y2="40.4" stroke-opacity="0.30"/><line x1="1496" y1="40.4" x2="1456.6" y2="38.9" stroke-opacity="0.30"/><line x1="1456.6" y1="38.9" x2="1419.7" y2="37.5" stroke-opacity="0.30"/><line x1="1419.7" y1="37.5" x2="1385.1" y2="36.2" stroke-opacity="0.30"/><line x1="1385.1" y1="36.2" x2="1352.7" y2="34.9" stroke-opacity="0.30"/><line x1="1817.9" y1="52" x2="1755.1" y2="49.7" stroke-opacity="0.30"/><line x1="1755.1" y1="49.7" x2="1697.4" y2="47.5" stroke-opacity="0.30"/><line x1="1697.4" y1="47.5" x2="1644.2" y2="45.5" stroke-opacity="0.30"/><line x1="1644.2" y1="45.5" x2="1595" y2="43.7" stroke-opacity="0.30"/><line x1="1595" y1="43.7" x2="1549.3" y2="42" stroke-opacity="0.30"/><line x1="1549.3" y1="42" x2="1506.8" y2="40.4" stroke-opacity="0.30"/><line x1="1506.8" y1="40.4" x2="1467.2" y2="38.9" stroke-opacity="0.30"/><line x1="1467.2" y1="38.9" x2="1430.1" y2="37.5" stroke-opacity="0.30"/><line x1="1430.1" y1="37.5" x2="1395.4" y2="36.2" stroke-opacity="0.30"/><line x1="1395.4" y1="36.2" x2="1362.8" y2="35" stroke-opacity="0.30"/><line x1="1829.2" y1="52" x2="1766.4" y2="49.6" stroke-opacity="0.30"/><line x1="1766.4" y1="49.6" x2="1708.6" y2="47.5" stroke-opacity="0.30"/><line x1="1708.6" y1="47.5" x2="1655.3" y2="45.5" stroke-opacity="0.30"/><line x1="1655.3" y1="45.5" x2="1605.9" y2="43.7" stroke-opacity="0.30"/><line x1="1605.9" y1="43.7" x2="1560.1" y2="42" stroke-opacity="0.30"/><line x1="1560.1" y1="42" x2="1517.5" y2="40.4" stroke-opacity="0.30"/><line x1="1517.5" y1="40.4" x2="1477.7" y2="38.9" stroke-opacity="0.30"/><line x1="1477.7" y1="38.9" x2="1440.5" y2="37.5" stroke-opacity="0.30"/><line x1="1440.5" y1="37.5" x2="1405.6" y2="36.2" stroke-opacity="0.30"/><line x1="1405.6" y1="36.2" x2="1372.9" y2="35" stroke-opacity="0.30"/><line x1="1840.4" y1="51.9" x2="1777.5" y2="49.6" stroke-opacity="0.30"/><line x1="1777.5" y1="49.6" x2="1719.7" y2="47.4" stroke-opacity="0.30"/><line x1="1719.7" y1="47.4" x2="1666.2" y2="45.5" stroke-opacity="0.30"/><line x1="1666.2" y1="45.5" x2="1616.8" y2="43.7" stroke-opacity="0.30"/><line x1="1616.8" y1="43.7" x2="1570.8" y2="42" stroke-opacity="0.30"/><line x1="1570.8" y1="42" x2="1528" y2="40.4" stroke-opacity="0.30"/><line x1="1528" y1="40.4" x2="1488.1" y2="38.9" stroke-opacity="0.30"/><line x1="1488.1" y1="38.9" x2="1450.8" y2="37.5" stroke-opacity="0.30"/><line x1="1450.8" y1="37.5" x2="1415.7" y2="36.3" stroke-opacity="0.30"/><line x1="1415.7" y1="36.3" x2="1382.8" y2="35" stroke-opacity="0.30"/><line x1="1851.5" y1="51.8" x2="1788.5" y2="49.5" stroke-opacity="0.30"/><line x1="1788.5" y1="49.5" x2="1730.6" y2="47.4" stroke-opacity="0.30"/><line x1="1730.6" y1="47.4" x2="1677" y2="45.5" stroke-opacity="0.30"/><line x1="1677" y1="45.5" x2="1627.5" y2="43.7" stroke-opacity="0.30"/><line x1="1627.5" y1="43.7" x2="1581.4" y2="42" stroke-opacity="0.30"/><line x1="1581.4" y1="42" x2="1538.5" y2="40.4" stroke-opacity="0.30"/><line x1="1538.5" y1="40.4" x2="1498.4" y2="38.9" stroke-opacity="0.30"/><line x1="1498.4" y1="38.9" x2="1460.9" y2="37.6" stroke-opacity="0.30"/><line x1="1460.9" y1="37.6" x2="1425.7" y2="36.3" stroke-opacity="0.30"/><line x1="1425.7" y1="36.3" x2="1392.7" y2="35.1" stroke-opacity="0.30"/><line x1="1862.4" y1="51.8" x2="1799.4" y2="49.5" stroke-opacity="0.30"/><line x1="1799.4" y1="49.5" x2="1741.4" y2="47.4" stroke-opacity="0.30"/><line x1="1741.4" y1="47.4" x2="1687.7" y2="45.4" stroke-opacity="0.30"/><line x1="1687.7" y1="45.4" x2="1638" y2="43.6" stroke-opacity="0.30"/><line x1="1638" y1="43.6" x2="1591.8" y2="42" stroke-opacity="0.30"/><line x1="1591.8" y1="42" x2="1548.8" y2="40.4" stroke-opacity="0.30"/><line x1="1548.8" y1="40.4" x2="1508.6" y2="39" stroke-opacity="0.30"/><line x1="1508.6" y1="39" x2="1471" y2="37.6" stroke-opacity="0.30"/><line x1="1471" y1="37.6" x2="1435.7" y2="36.3" stroke-opacity="0.30"/><line x1="1810.1" y1="49.4" x2="1752" y2="47.4" stroke-opacity="0.30"/><line x1="1752" y1="47.4" x2="1698.3" y2="45.4" stroke-opacity="0.30"/><line x1="1698.3" y1="45.4" x2="1648.5" y2="43.6" stroke-opacity="0.30"/><line x1="1648.5" y1="43.6" x2="1602.2" y2="42" stroke-opacity="0.30"/><line x1="1602.2" y1="42" x2="1559" y2="40.4" stroke-opacity="0.30"/><line x1="1559" y1="40.4" x2="1518.7" y2="39" stroke-opacity="0.30"/><line x1="1518.7" y1="39" x2="1480.9" y2="37.6" stroke-opacity="0.30"/><line x1="1480.9" y1="37.6" x2="1445.5" y2="36.3" stroke-opacity="0.30"/><line x1="1820.7" y1="49.4" x2="1762.5" y2="47.3" stroke-opacity="0.30"/><line x1="1762.5" y1="47.3" x2="1708.8" y2="45.4" stroke-opacity="0.30"/><line x1="1708.8" y1="45.4" x2="1658.9" y2="43.6" stroke-opacity="0.30"/><line x1="1658.9" y1="43.6" x2="1612.4" y2="42" stroke-opacity="0.30"/><line x1="1612.4" y1="42" x2="1569.1" y2="40.4" stroke-opacity="0.30"/><line x1="1569.1" y1="40.4" x2="1528.7" y2="39" stroke-opacity="0.30"/><line x1="1528.7" y1="39" x2="1490.8" y2="37.6" stroke-opacity="0.30"/><line x1="1490.8" y1="37.6" x2="1455.2" y2="36.4" stroke-opacity="0.30"/><line x1="1831.2" y1="49.4" x2="1773" y2="47.3" stroke-opacity="0.30"/><line x1="1773" y1="47.3" x2="1719.1" y2="45.4" stroke-opacity="0.30"/><line x1="1719.1" y1="45.4" x2="1669.1" y2="43.6" stroke-opacity="0.30"/><line x1="1669.1" y1="43.6" x2="1622.6" y2="42" stroke-opacity="0.30"/><line x1="1622.6" y1="42" x2="1579.2" y2="40.5" stroke-opacity="0.30"/><line x1="1579.2" y1="40.5" x2="1538.6" y2="39" stroke-opacity="0.30"/><line x1="1538.6" y1="39" x2="1500.5" y2="37.7" stroke-opacity="0.30"/><line x1="1500.5" y1="37.7" x2="1464.8" y2="36.4" stroke-opacity="0.30"/><line x1="1841.5" y1="49.3" x2="1783.2" y2="47.3" stroke-opacity="0.30"/><line x1="1783.2" y1="47.3" x2="1729.3" y2="45.4" stroke-opacity="0.30"/><line x1="1729.3" y1="45.4" x2="1679.2" y2="43.6" stroke-opacity="0.30"/><line x1="1679.2" y1="43.6" x2="1632.6" y2="42" stroke-opacity="0.30"/><line x1="1632.6" y1="42" x2="1589.1" y2="40.5" stroke-opacity="0.30"/><line x1="1589.1" y1="40.5" x2="1548.4" y2="39" stroke-opacity="0.30"/><line x1="1548.4" y1="39" x2="1510.2" y2="37.7" stroke-opacity="0.30"/><line x1="1510.2" y1="37.7" x2="1474.4" y2="36.4" stroke-opacity="0.30"/><line x1="1851.7" y1="49.3" x2="1793.4" y2="47.2" stroke-opacity="0.30"/><line x1="1793.4" y1="47.2" x2="1739.4" y2="45.4" stroke-opacity="0.30"/><line x1="1739.4" y1="45.4" x2="1689.2" y2="43.6" stroke-opacity="0.30"/><line x1="1689.2" y1="43.6" x2="1642.5" y2="42" stroke-opacity="0.30"/><line x1="1642.5" y1="42" x2="1598.9" y2="40.5" stroke-opacity="0.30"/><line x1="1598.9" y1="40.5" x2="1558.1" y2="39.1" stroke-opacity="0.30"/><line x1="1558.1" y1="39.1" x2="1519.8" y2="37.7" stroke-opacity="0.30"/><line x1="1519.8" y1="37.7" x2="1483.8" y2="36.5" stroke-opacity="0.30"/><line x1="1803.4" y1="47.2" x2="1749.4" y2="45.4" stroke-opacity="0.30"/><line x1="1749.4" y1="45.4" x2="1699.1" y2="43.6" stroke-opacity="0.30"/><line x1="1699.1" y1="43.6" x2="1652.3" y2="42" stroke-opacity="0.30"/><line x1="1652.3" y1="42" x2="1608.6" y2="40.5" stroke-opacity="0.30"/><line x1="1608.6" y1="40.5" x2="1567.7" y2="39.1" stroke-opacity="0.30"/><line x1="1567.7" y1="39.1" x2="1529.3" y2="37.7" stroke-opacity="0.30"/><line x1="1813.3" y1="47.2" x2="1759.2" y2="45.3" stroke-opacity="0.30"/><line x1="1759.2" y1="45.3" x2="1708.9" y2="43.6" stroke-opacity="0.30"/><line x1="1708.9" y1="43.6" x2="1662" y2="42" stroke-opacity="0.30"/><line x1="1662" y1="42" x2="1618.2" y2="40.5" stroke-opacity="0.30"/><line x1="1618.2" y1="40.5" x2="1577.2" y2="39.1" stroke-opacity="0.30"/><line x1="1577.2" y1="39.1" x2="1538.7" y2="37.8" stroke-opacity="0.30"/><line x1="1823.1" y1="47.2" x2="1769" y2="45.3" stroke-opacity="0.30"/><line x1="1769" y1="45.3" x2="1718.6" y2="43.6" stroke-opacity="0.30"/><line x1="1718.6" y1="43.6" x2="1671.6" y2="42" stroke-opacity="0.30"/><line x1="1671.6" y1="42" x2="1627.7" y2="40.5" stroke-opacity="0.30"/><line x1="1627.7" y1="40.5" x2="1586.6" y2="39.1" stroke-opacity="0.30"/><line x1="1586.6" y1="39.1" x2="1548" y2="37.8" stroke-opacity="0.30"/><line x1="1832.8" y1="47.1" x2="1778.6" y2="45.3" stroke-opacity="0.30"/><line x1="1778.6" y1="45.3" x2="1728.2" y2="43.6" stroke-opacity="0.30"/><line x1="1728.2" y1="43.6" x2="1681.1" y2="42" stroke-opacity="0.30"/><line x1="1681.1" y1="42" x2="1637.1" y2="40.5" stroke-opacity="0.30"/><line x1="1637.1" y1="40.5" x2="1595.9" y2="39.1" stroke-opacity="0.30"/><line x1="1595.9" y1="39.1" x2="1557.2" y2="37.8" stroke-opacity="0.30"/><line x1="1842.4" y1="47.1" x2="1788.1" y2="45.3" stroke-opacity="0.30"/><line x1="1788.1" y1="45.3" x2="1737.6" y2="43.6" stroke-opacity="0.30"/><line x1="1737.6" y1="43.6" x2="1690.5" y2="42" stroke-opacity="0.30"/><line x1="1690.5" y1="42" x2="1646.4" y2="40.5" stroke-opacity="0.30"/><line x1="1646.4" y1="40.5" x2="1605.1" y2="39.1" stroke-opacity="0.30"/><line x1="1605.1" y1="39.1" x2="1566.3" y2="37.8" stroke-opacity="0.30"/><line x1="1851.9" y1="47.1" x2="1797.6" y2="45.3" stroke-opacity="0.30"/><line x1="1797.6" y1="45.3" x2="1747" y2="43.6" stroke-opacity="0.30"/><line x1="1747" y1="43.6" x2="1699.8" y2="42" stroke-opacity="0.30"/><line x1="1699.8" y1="42" x2="1655.6" y2="40.5" stroke-opacity="0.30"/><line x1="1655.6" y1="40.5" x2="1614.2" y2="39.2" stroke-opacity="0.30"/><line x1="1614.2" y1="39.2" x2="1575.3" y2="37.9" stroke-opacity="0.30"/><line x1="1806.9" y1="45.3" x2="1756.3" y2="43.6" stroke-opacity="0.30"/><line x1="1756.3" y1="43.6" x2="1709" y2="42" stroke-opacity="0.30"/><line x1="1709" y1="42" x2="1664.8" y2="40.5" stroke-opacity="0.30"/><line x1="1664.8" y1="40.5" x2="1623.3" y2="39.2" stroke-opacity="0.30"/><line x1="1623.3" y1="39.2" x2="1584.3" y2="37.9" stroke-opacity="0.30"/><line x1="1816.1" y1="45.2" x2="1765.5" y2="43.6" stroke-opacity="0.30"/><line x1="1765.5" y1="43.6" x2="1718.1" y2="42" stroke-opacity="0.30"/><line x1="1718.1" y1="42" x2="1673.8" y2="40.6" stroke-opacity="0.30"/><line x1="1673.8" y1="40.6" x2="1632.3" y2="39.2" stroke-opacity="0.30"/><line x1="1825.3" y1="45.2" x2="1774.5" y2="43.6" stroke-opacity="0.30"/><line x1="1774.5" y1="43.6" x2="1727.2" y2="42" stroke-opacity="0.30"/><line x1="1727.2" y1="42" x2="1682.8" y2="40.6" stroke-opacity="0.30"/><line x1="1682.8" y1="40.6" x2="1641.1" y2="39.2" stroke-opacity="0.30"/><line x1="1834.3" y1="45.2" x2="1783.5" y2="43.6" stroke-opacity="0.30"/><line x1="1783.5" y1="43.6" x2="1736.1" y2="42" stroke-opacity="0.30"/><line x1="1736.1" y1="42" x2="1691.7" y2="40.6" stroke-opacity="0.30"/><line x1="1691.7" y1="40.6" x2="1649.9" y2="39.2" stroke-opacity="0.30"/><line x1="1843.2" y1="45.2" x2="1792.4" y2="43.6" stroke-opacity="0.30"/><line x1="1792.4" y1="43.6" x2="1744.9" y2="42" stroke-opacity="0.30"/><line x1="1744.9" y1="42" x2="1700.4" y2="40.6" stroke-opacity="0.30"/><line x1="1700.4" y1="40.6" x2="1658.6" y2="39.2" stroke-opacity="0.30"/><line x1="1801.2" y1="43.6" x2="1753.7" y2="42" stroke-opacity="0.30"/><line x1="1753.7" y1="42" x2="1709.1" y2="40.6" stroke-opacity="0.30"/><line x1="1709.1" y1="40.6" x2="1667.3" y2="39.3" stroke-opacity="0.30"/><line x1="1809.9" y1="43.6" x2="1762.4" y2="42" stroke-opacity="0.30"/><line x1="1762.4" y1="42" x2="1717.7" y2="40.6" stroke-opacity="0.30"/><line x1="1717.7" y1="40.6" x2="1675.8" y2="39.3" stroke-opacity="0.30"/><line x1="1818.6" y1="43.6" x2="1770.9" y2="42" stroke-opacity="0.30"/><line x1="1770.9" y1="42" x2="1726.3" y2="40.6" stroke-opacity="0.30"/><line x1="1827.1" y1="43.5" x2="1779.4" y2="42" stroke-opacity="0.30"/><line x1="1779.4" y1="42" x2="1734.7" y2="40.6" stroke-opacity="0.30"/><line x1="1835.5" y1="43.5" x2="1787.9" y2="42" stroke-opacity="0.30"/><line x1="1787.9" y1="42" x2="1743.1" y2="40.6" stroke-opacity="0.30"/><line x1="1843.9" y1="43.5" x2="1796.2" y2="42" stroke-opacity="0.30"/><line x1="1796.2" y1="42" x2="1751.4" y2="40.6" stroke-opacity="0.30"/><line x1="1804.4" y1="42.1" x2="1759.6" y2="40.7" stroke-opacity="0.30"/><line x1="1812.6" y1="42.1" x2="1767.7" y2="40.7" stroke-opacity="0.30"/><line x1="1820.7" y1="42.1" x2="1775.8" y2="40.7" stroke-opacity="0.30"/></g><g stroke="#853f4a" stroke-width="1.2"><line x1="590" y1="414.5" x2="481.2" y2="239.9" stroke-opacity="1.00"/><line x1="481.2" y1="239.9" x2="436.4" y2="168.2" stroke-opacity="1.00"/><line x1="436.4" y1="168.2" x2="412" y2="129.1" stroke-opacity="1.00"/><line x1="412" y1="129.1" x2="396.7" y2="104.5" stroke-opacity="1.00"/><line x1="396.7" y1="104.5" x2="386.1" y2="87.5" stroke-opacity="0.95"/><line x1="386.1" y1="87.5" x2="378.4" y2="75.2" stroke-opacity="0.88"/><line x1="378.4" y1="75.2" x2="372.5" y2="65.8" stroke-opacity="0.80"/><line x1="372.5" y1="65.8" x2="367.9" y2="58.4" stroke-opacity="0.73"/><line x1="367.9" y1="58.4" x2="364.2" y2="52.4" stroke-opacity="0.65"/><line x1="364.2" y1="52.4" x2="361.1" y2="47.5" stroke-opacity="0.57"/><line x1="361.1" y1="47.5" x2="358.5" y2="43.3" stroke-opacity="0.50"/><line x1="358.5" y1="43.3" x2="356.4" y2="39.8" stroke-opacity="0.42"/><line x1="356.4" y1="39.8" x2="354.5" y2="36.8" stroke-opacity="0.35"/><line x1="354.5" y1="36.8" x2="352.8" y2="34.2" stroke-opacity="0.27"/><line x1="352.8" y1="34.2" x2="351.4" y2="31.9" stroke-opacity="0.20"/><line x1="351.4" y1="31.9" x2="350.1" y2="29.8" stroke-opacity="0.12"/><line x1="350.1" y1="29.8" x2="349" y2="28" stroke-opacity="0.04"/></g><polygon points="464,141 887,124 1143,178 533,214" fill="none" stroke="#111" stroke-width="1.2"/><circle cx="759" cy="157" r="12" fill="none" stroke="#1a1a1a" stroke-width="1.2" stroke-dasharray="3,2.5"/><rect x="756.5" y="154.5" width="5" height="5" transform="rotate(45 759 157)" fill="none" stroke="#1a1a1a"/><polygon points="-831.792,499.853 1093.41,296.526 1837.7,588.967 1837.7,3000 -400,3000" fill="url(#pg)"/><polyline points="-831.792,499.853 1093.41,296.526 1837.7,588.967" fill="none" stroke="#e4e4e4" stroke-width="1" stroke-opacity="0.85"/><g><polygon points="873,238 917,238 917,247 873,247" fill="#8c8c8c" stroke="#575757" stroke-width="1.2"/><line x1="858" y1="234.8" x2="891" y2="279.8" stroke="#575757" stroke-width="17" stroke-linecap="round"/><line x1="858" y1="234" x2="891" y2="279" stroke="#858585" stroke-width="15" stroke-linecap="round"/><line x1="860.2" y1="232.4" x2="893.2" y2="277.4" stroke="#9b9b9b" stroke-width="9" stroke-linecap="round"/><line x1="861.5" y1="231.4" x2="894.5" y2="276.4" stroke="#adadad" stroke-width="3" stroke-linecap="round"/><path d="M950.0,293.0 L949.6,294.3 L948.3,295.6 L946.2,296.7 L943.5,297.8 L940.2,298.7 L936.5,299.5 L932.6,300.1 L931.2,301.2 L929.9,302.4 L928.0,303.6 L925.5,304.7 L922.3,305.7 L918.6,306.5 L914.5,307.1 L910.0,307.5 L905.3,307.6 L900.6,307.5 L896.0,307.2 L891.7,306.7 L887.7,306.0 L884.2,305.2 L880.6,304.8 L876.1,304.9 L871.4,304.8 L866.8,304.6 L862.4,304.1 L858.3,303.5 L854.7,302.6 L851.8,301.6 L849.5,300.5 L848.1,299.2 L847.4,297.9 L847.5,296.6 L848.3,295.3 L849.8,294.1 L851.7,293.0 L849.8,291.9 L848.3,290.7 L847.5,289.4 L847.4,288.1 L848.1,286.8 L849.5,285.5 L851.8,284.4 L854.7,283.4 L858.3,282.5 L862.4,281.9 L866.8,281.4 L871.4,281.2 L876.1,281.1 L880.6,281.2 L884.2,280.8 L887.7,280.0 L891.7,279.3 L896.0,278.8 L900.6,278.5 L905.3,278.4 L910.0,278.5 L914.5,278.9 L918.6,279.5 L922.3,280.3 L925.5,281.3 L928.0,282.4 L929.9,283.6 L931.2,284.8 L932.6,285.9 L936.5,286.5 L940.2,287.3 L943.5,288.2 L946.2,289.3 L948.3,290.4 L949.6,291.7 L950.0,293.0z" fill="none" stroke="#4f4f4f" stroke-width="6.5" transform="translate(0,1.5)"/><path d="M950.0,293.0 L949.6,294.3 L948.3,295.6 L946.2,296.7 L943.5,297.8 L940.2,298.7 L936.5,299.5 L932.6,300.1 L931.2,301.2 L929.9,302.4 L928.0,303.6 L925.5,304.7 L922.3,305.7 L918.6,306.5 L914.5,307.1 L910.0,307.5 L905.3,307.6 L900.6,307.5 L896.0,307.2 L891.7,306.7 L887.7,306.0 L884.2,305.2 L880.6,304.8 L876.1,304.9 L871.4,304.8 L866.8,304.6 L862.4,304.1 L858.3,303.5 L854.7,302.6 L851.8,301.6 L849.5,300.5 L848.1,299.2 L847.4,297.9 L847.5,296.6 L848.3,295.3 L849.8,294.1 L851.7,293.0 L849.8,291.9 L848.3,290.7 L847.5,289.4 L847.4,288.1 L848.1,286.8 L849.5,285.5 L851.8,284.4 L854.7,283.4 L858.3,282.5 L862.4,281.9 L866.8,281.4 L871.4,281.2 L876.1,281.1 L880.6,281.2 L884.2,280.8 L887.7,280.0 L891.7,279.3 L896.0,278.8 L900.6,278.5 L905.3,278.4 L910.0,278.5 L914.5,278.9 L918.6,279.5 L922.3,280.3 L925.5,281.3 L928.0,282.4 L929.9,283.6 L931.2,284.8 L932.6,285.9 L936.5,286.5 L940.2,287.3 L943.5,288.2 L946.2,289.3 L948.3,290.4 L949.6,291.7 L950.0,293.0z" fill="none" stroke="#858585" stroke-width="4"/><path d="M950.0,293.0 L949.6,294.3 L948.3,295.6 L946.2,296.7 L943.5,297.8 L940.2,298.7 L936.5,299.5 L932.6,300.1 L931.2,301.2 L929.9,302.4 L928.0,303.6 L925.5,304.7 L922.3,305.7 L918.6,306.5 L914.5,307.1 L910.0,307.5 L905.3,307.6 L900.6,307.5 L896.0,307.2 L891.7,306.7 L887.7,306.0 L884.2,305.2 L880.6,304.8 L876.1,304.9 L871.4,304.8 L866.8,304.6 L862.4,304.1 L858.3,303.5 L854.7,302.6 L851.8,301.6 L849.5,300.5 L848.1,299.2 L847.4,297.9 L847.5,296.6 L848.3,295.3 L849.8,294.1 L851.7,293.0 L849.8,291.9 L848.3,290.7 L847.5,289.4 L847.4,288.1 L848.1,286.8 L849.5,285.5 L851.8,284.4 L854.7,283.4 L858.3,282.5 L862.4,281.9 L866.8,281.4 L871.4,281.2 L876.1,281.1 L880.6,281.2 L884.2,280.8 L887.7,280.0 L891.7,279.3 L896.0,278.8 L900.6,278.5 L905.3,278.4 L910.0,278.5 L914.5,278.9 L918.6,279.5 L922.3,280.3 L925.5,281.3 L928.0,282.4 L929.9,283.6 L931.2,284.8 L932.6,285.9 L936.5,286.5 L940.2,287.3 L943.5,288.2 L946.2,289.3 L948.3,290.4 L949.6,291.7 L950.0,293.0z" fill="none" stroke="#a4a4a4" stroke-width="1.4" transform="translate(0,-1)"/><path d="M939.2,293.0 L938.9,294.0 L937.8,295.0 L936.2,295.9 L934.0,296.7 L931.4,297.5 L928.4,298.1 L925.3,298.6 L924.2,299.4 L923.2,300.4 L921.6,301.3 L919.6,302.1 L917.1,302.9 L914.1,303.5 L910.8,304.0 L907.2,304.3 L903.4,304.4 L899.7,304.3 L896.0,304.1 L892.5,303.7 L889.4,303.2 L886.6,302.5 L883.7,302.2 L880.0,302.3 L876.3,302.2 L872.7,302.0 L869.1,301.7 L865.9,301.2 L863.0,300.5 L860.6,299.7 L858.8,298.8 L857.6,297.8 L857.1,296.8 L857.2,295.8 L857.9,294.8 L859.0,293.9 L860.6,293.0 L859.0,292.1 L857.9,291.2 L857.2,290.2 L857.1,289.2 L857.6,288.2 L858.8,287.2 L860.6,286.3 L863.0,285.5 L865.9,284.8 L869.1,284.3 L872.7,284.0 L876.3,283.8 L880.0,283.7 L883.7,283.8 L886.6,283.5 L889.4,282.8 L892.5,282.3 L896.0,281.9 L899.7,281.7 L903.4,281.6 L907.2,281.7 L910.8,282.0 L914.1,282.5 L917.1,283.1 L919.6,283.9 L921.6,284.7 L923.2,285.6 L924.2,286.6 L925.3,287.4 L928.4,287.9 L931.4,288.5 L934.0,289.3 L936.2,290.1 L937.8,291.0 L938.9,292.0 L939.2,293.0z" fill="none" stroke="#5a5a5a" stroke-width="3.5"/><path d="M939.2,293.0 L938.9,294.0 L937.8,295.0 L936.2,295.9 L934.0,296.7 L931.4,297.5 L928.4,298.1 L925.3,298.6 L924.2,299.4 L923.2,300.4 L921.6,301.3 L919.6,302.1 L917.1,302.9 L914.1,303.5 L910.8,304.0 L907.2,304.3 L903.4,304.4 L899.7,304.3 L896.0,304.1 L892.5,303.7 L889.4,303.2 L886.6,302.5 L883.7,302.2 L880.0,302.3 L876.3,302.2 L872.7,302.0 L869.1,301.7 L865.9,301.2 L863.0,300.5 L860.6,299.7 L858.8,298.8 L857.6,297.8 L857.1,296.8 L857.2,295.8 L857.9,294.8 L859.0,293.9 L860.6,293.0 L859.0,292.1 L857.9,291.2 L857.2,290.2 L857.1,289.2 L857.6,288.2 L858.8,287.2 L860.6,286.3 L863.0,285.5 L865.9,284.8 L869.1,284.3 L872.7,284.0 L876.3,283.8 L880.0,283.7 L883.7,283.8 L886.6,283.5 L889.4,282.8 L892.5,282.3 L896.0,281.9 L899.7,281.7 L903.4,281.6 L907.2,281.7 L910.8,282.0 L914.1,282.5 L917.1,283.1 L919.6,283.9 L921.6,284.7 L923.2,285.6 L924.2,286.6 L925.3,287.4 L928.4,287.9 L931.4,288.5 L934.0,289.3 L936.2,290.1 L937.8,291.0 L938.9,292.0 L939.2,293.0z" fill="none" stroke="#8e8e8e" stroke-width="2"/><ellipse cx="899.8" cy="299.7" rx="10.8" ry="3.3" fill="none" stroke="#575757" stroke-width="3.9"/><ellipse cx="899.8" cy="299.7" rx="10.8" ry="3.3" fill="none" stroke="#909090" stroke-width="2.4"/><ellipse cx="874.3" cy="296.1" rx="10.8" ry="3.3" fill="none" stroke="#575757" stroke-width="3.9"/><ellipse cx="874.3" cy="296.1" rx="10.8" ry="3.3" fill="none" stroke="#909090" stroke-width="2.4"/><ellipse cx="878.8" cy="288.2" rx="10.8" ry="3.3" fill="none" stroke="#575757" stroke-width="3.9"/><ellipse cx="878.8" cy="288.2" rx="10.8" ry="3.3" fill="none" stroke="#909090" stroke-width="2.4"/><ellipse cx="907.0" cy="287.0" rx="10.8" ry="3.3" fill="none" stroke="#575757" stroke-width="3.9"/><ellipse cx="907.0" cy="287.0" rx="10.8" ry="3.3" fill="none" stroke="#909090" stroke-width="2.4"/><ellipse cx="920.0" cy="294.1" rx="10.8" ry="3.3" fill="none" stroke="#575757" stroke-width="3.9"/><ellipse cx="920.0" cy="294.1" rx="10.8" ry="3.3" fill="none" stroke="#909090" stroke-width="2.4"/><ellipse cx="896" cy="293" rx="11.88" ry="4.5" fill="#8a8a8a" stroke="#575757" stroke-width="1.2"/><line x1="675" y1="323.8" x2="880" y2="316.8" stroke="#575757" stroke-width="13" stroke-linecap="round"/><line x1="675" y1="323" x2="880" y2="316" stroke="#858585" stroke-width="11" stroke-linecap="round"/><line x1="674.9" y1="321.0" x2="879.9" y2="314.0" stroke="#9b9b9b" stroke-width="6.6" stroke-linecap="round"/><line x1="674.9" y1="319.8" x2="879.9" y2="312.8" stroke="#adadad" stroke-width="2.2" stroke-linecap="round"/><path d="M673.0,328.0 L672.7,329.4 L671.6,330.7 L670.0,332.0 L667.8,333.1 L665.2,334.1 L662.3,334.9 L659.2,335.6 L658.0,336.8 L657.0,338.1 L655.5,339.3 L653.5,340.5 L651.0,341.5 L648.0,342.4 L644.7,343.0 L641.1,343.4 L637.4,343.6 L633.6,343.5 L630.0,343.2 L626.6,342.6 L623.4,341.9 L620.6,341.0 L617.7,340.6 L614.1,340.7 L610.4,340.6 L606.8,340.3 L603.3,339.9 L600.0,339.2 L597.2,338.3 L594.8,337.2 L593.0,336.0 L591.8,334.6 L591.3,333.2 L591.4,331.8 L592.1,330.5 L593.2,329.2 L594.7,328.0 L593.2,326.8 L592.1,325.5 L591.4,324.2 L591.3,322.8 L591.8,321.4 L593.0,320.0 L594.8,318.8 L597.2,317.7 L600.0,316.8 L603.3,316.1 L606.8,315.7 L610.4,315.4 L614.1,315.3 L617.7,315.4 L620.6,315.0 L623.4,314.1 L626.6,313.4 L630.0,312.8 L633.6,312.5 L637.4,312.4 L641.1,312.6 L644.7,313.0 L648.0,313.6 L651.0,314.5 L653.5,315.5 L655.5,316.7 L657.0,317.9 L658.0,319.2 L659.2,320.4 L662.3,321.1 L665.2,321.9 L667.8,322.9 L670.0,324.0 L671.6,325.3 L672.7,326.6 L673.0,328.0z" fill="none" stroke="#4f4f4f" stroke-width="6.5" transform="translate(0,1.5)"/><path d="M673.0,328.0 L672.7,329.4 L671.6,330.7 L670.0,332.0 L667.8,333.1 L665.2,334.1 L662.3,334.9 L659.2,335.6 L658.0,336.8 L657.0,338.1 L655.5,339.3 L653.5,340.5 L651.0,341.5 L648.0,342.4 L644.7,343.0 L641.1,343.4 L637.4,343.6 L633.6,343.5 L630.0,343.2 L626.6,342.6 L623.4,341.9 L620.6,341.0 L617.7,340.6 L614.1,340.7 L610.4,340.6 L606.8,340.3 L603.3,339.9 L600.0,339.2 L597.2,338.3 L594.8,337.2 L593.0,336.0 L591.8,334.6 L591.3,333.2 L591.4,331.8 L592.1,330.5 L593.2,329.2 L594.7,328.0 L593.2,326.8 L592.1,325.5 L591.4,324.2 L591.3,322.8 L591.8,321.4 L593.0,320.0 L594.8,318.8 L597.2,317.7 L600.0,316.8 L603.3,316.1 L606.8,315.7 L610.4,315.4 L614.1,315.3 L617.7,315.4 L620.6,315.0 L623.4,314.1 L626.6,313.4 L630.0,312.8 L633.6,312.5 L637.4,312.4 L641.1,312.6 L644.7,313.0 L648.0,313.6 L651.0,314.5 L653.5,315.5 L655.5,316.7 L657.0,317.9 L658.0,319.2 L659.2,320.4 L662.3,321.1 L665.2,321.9 L667.8,322.9 L670.0,324.0 L671.6,325.3 L672.7,326.6 L673.0,328.0z" fill="none" stroke="#858585" stroke-width="4"/><path d="M673.0,328.0 L672.7,329.4 L671.6,330.7 L670.0,332.0 L667.8,333.1 L665.2,334.1 L662.3,334.9 L659.2,335.6 L658.0,336.8 L657.0,338.1 L655.5,339.3 L653.5,340.5 L651.0,341.5 L648.0,342.4 L644.7,343.0 L641.1,343.4 L637.4,343.6 L633.6,343.5 L630.0,343.2 L626.6,342.6 L623.4,341.9 L620.6,341.0 L617.7,340.6 L614.1,340.7 L610.4,340.6 L606.8,340.3 L603.3,339.9 L600.0,339.2 L597.2,338.3 L594.8,337.2 L593.0,336.0 L591.8,334.6 L591.3,333.2 L591.4,331.8 L592.1,330.5 L593.2,329.2 L594.7,328.0 L593.2,326.8 L592.1,325.5 L591.4,324.2 L591.3,322.8 L591.8,321.4 L593.0,320.0 L594.8,318.8 L597.2,317.7 L600.0,316.8 L603.3,316.1 L606.8,315.7 L610.4,315.4 L614.1,315.3 L617.7,315.4 L620.6,315.0 L623.4,314.1 L626.6,313.4 L630.0,312.8 L633.6,312.5 L637.4,312.4 L641.1,312.6 L644.7,313.0 L648.0,313.6 L651.0,314.5 L653.5,315.5 L655.5,316.7 L657.0,317.9 L658.0,319.2 L659.2,320.4 L662.3,321.1 L665.2,321.9 L667.8,322.9 L670.0,324.0 L671.6,325.3 L672.7,326.6 L673.0,328.0z" fill="none" stroke="#a4a4a4" stroke-width="1.4" transform="translate(0,-1)"/><path d="M664.4,328.0 L664.1,329.1 L663.3,330.1 L662.0,331.1 L660.2,332.0 L658.2,332.8 L655.8,333.4 L653.3,333.9 L652.4,334.8 L651.6,335.8 L650.4,336.8 L648.8,337.7 L646.8,338.5 L644.4,339.2 L641.8,339.7 L638.9,340.0 L635.9,340.2 L632.9,340.1 L630.0,339.8 L627.3,339.4 L624.7,338.8 L622.5,338.2 L620.2,337.8 L617.3,337.9 L614.3,337.8 L611.4,337.6 L608.6,337.2 L606.0,336.7 L603.7,336.0 L601.8,335.2 L600.4,334.2 L599.5,333.2 L599.0,332.1 L599.1,331.0 L599.6,329.9 L600.6,328.9 L601.8,328.0 L600.6,327.1 L599.6,326.1 L599.1,325.0 L599.0,323.9 L599.5,322.8 L600.4,321.8 L601.8,320.8 L603.7,320.0 L606.0,319.3 L608.6,318.8 L611.4,318.4 L614.3,318.2 L617.3,318.1 L620.2,318.2 L622.5,317.8 L624.7,317.2 L627.3,316.6 L630.0,316.2 L632.9,315.9 L635.9,315.8 L638.9,316.0 L641.8,316.3 L644.4,316.8 L646.8,317.5 L648.8,318.3 L650.4,319.2 L651.6,320.2 L652.4,321.2 L653.3,322.1 L655.8,322.6 L658.2,323.2 L660.2,324.0 L662.0,324.9 L663.3,325.9 L664.1,326.9 L664.4,328.0z" fill="none" stroke="#5a5a5a" stroke-width="3.5"/><path d="M664.4,328.0 L664.1,329.1 L663.3,330.1 L662.0,331.1 L660.2,332.0 L658.2,332.8 L655.8,333.4 L653.3,333.9 L652.4,334.8 L651.6,335.8 L650.4,336.8 L648.8,337.7 L646.8,338.5 L644.4,339.2 L641.8,339.7 L638.9,340.0 L635.9,340.2 L632.9,340.1 L630.0,339.8 L627.3,339.4 L624.7,338.8 L622.5,338.2 L620.2,337.8 L617.3,337.9 L614.3,337.8 L611.4,337.6 L608.6,337.2 L606.0,336.7 L603.7,336.0 L601.8,335.2 L600.4,334.2 L599.5,333.2 L599.0,332.1 L599.1,331.0 L599.6,329.9 L600.6,328.9 L601.8,328.0 L600.6,327.1 L599.6,326.1 L599.1,325.0 L599.0,323.9 L599.5,322.8 L600.4,321.8 L601.8,320.8 L603.7,320.0 L606.0,319.3 L608.6,318.8 L611.4,318.4 L614.3,318.2 L617.3,318.1 L620.2,318.2 L622.5,317.8 L624.7,317.2 L627.3,316.6 L630.0,316.2 L632.9,315.9 L635.9,315.8 L638.9,316.0 L641.8,316.3 L644.4,316.8 L646.8,317.5 L648.8,318.3 L650.4,319.2 L651.6,320.2 L652.4,321.2 L653.3,322.1 L655.8,322.6 L658.2,323.2 L660.2,324.0 L662.0,324.9 L663.3,325.9 L664.1,326.9 L664.4,328.0z" fill="none" stroke="#8e8e8e" stroke-width="2"/><ellipse cx="633.0" cy="335.1" rx="8.6" ry="3.5" fill="none" stroke="#575757" stroke-width="3.9"/><ellipse cx="633.0" cy="335.1" rx="8.6" ry="3.5" fill="none" stroke="#909090" stroke-width="2.4"/><ellipse cx="612.8" cy="331.3" rx="8.6" ry="3.5" fill="none" stroke="#575757" stroke-width="3.9"/><ellipse cx="612.8" cy="331.3" rx="8.6" ry="3.5" fill="none" stroke="#909090" stroke-width="2.4"/><ellipse cx="616.3" cy="322.9" rx="8.6" ry="3.5" fill="none" stroke="#575757" stroke-width="3.9"/><ellipse cx="616.3" cy="322.9" rx="8.6" ry="3.5" fill="none" stroke="#909090" stroke-width="2.4"/><ellipse cx="638.8" cy="321.6" rx="8.6" ry="3.5" fill="none" stroke="#575757" stroke-width="3.9"/><ellipse cx="638.8" cy="321.6" rx="8.6" ry="3.5" fill="none" stroke="#909090" stroke-width="2.4"/><ellipse cx="649.1" cy="329.1" rx="8.6" ry="3.5" fill="none" stroke="#575757" stroke-width="3.9"/><ellipse cx="649.1" cy="329.1" rx="8.6" ry="3.5" fill="none" stroke="#909090" stroke-width="2.4"/><ellipse cx="630" cy="328" rx="9.46" ry="4.8" fill="#8a8a8a" stroke="#575757" stroke-width="1.2"/><polygon points="818,303 843,303 843,312 818,312" fill="#8c8c8c" stroke="#575757" stroke-width="1.2"/><ellipse cx="960" cy="341.8" rx="22" ry="9" fill="none" stroke="#575757" stroke-width="7.4"/><ellipse cx="960" cy="341" rx="22" ry="9" fill="none" stroke="#868686" stroke-width="5.4"/><ellipse cx="960" cy="339.92" rx="22" ry="9" fill="none" stroke="#a2a2a2" stroke-width="2.43"/><ellipse cx="994" cy="345.8" rx="22" ry="9" fill="none" stroke="#575757" stroke-width="7.4"/><ellipse cx="994" cy="345" rx="22" ry="9" fill="none" stroke="#868686" stroke-width="5.4"/><ellipse cx="994" cy="343.92" rx="22" ry="9" fill="none" stroke="#a2a2a2" stroke-width="2.43"/><line x1="787" y1="308.8" x2="921" y2="334.8" stroke="#575757" stroke-width="13" stroke-linecap="round"/><line x1="787" y1="308" x2="921" y2="334" stroke="#858585" stroke-width="11" stroke-linecap="round"/><line x1="787.4" y1="306.1" x2="921.4" y2="332.1" stroke="#9b9b9b" stroke-width="6.6" stroke-linecap="round"/><line x1="787.6" y1="304.9" x2="921.6" y2="330.9" stroke="#adadad" stroke-width="2.2" stroke-linecap="round"/><path d="M856.0,342.0 L855.7,343.1 L854.8,344.2 L853.3,345.2 L851.4,346.2 L849.1,347.0 L846.5,347.6 L843.8,348.2 L842.8,349.1 L841.9,350.2 L840.6,351.2 L838.8,352.1 L836.5,353.0 L833.9,353.7 L831.0,354.2 L827.8,354.5 L824.5,354.7 L821.2,354.6 L818.0,354.3 L815.0,353.9 L812.2,353.3 L809.7,352.6 L807.1,352.2 L804.0,352.3 L800.7,352.2 L797.5,352.0 L794.4,351.6 L791.5,351.1 L789.0,350.3 L786.9,349.5 L785.3,348.5 L784.3,347.4 L783.8,346.3 L783.9,345.1 L784.5,344.0 L785.5,343.0 L786.8,342.0 L785.5,341.0 L784.5,340.0 L783.9,338.9 L783.8,337.7 L784.3,336.6 L785.3,335.5 L786.9,334.5 L789.0,333.7 L791.5,332.9 L794.4,332.4 L797.5,332.0 L800.7,331.8 L804.0,331.7 L807.1,331.8 L809.7,331.4 L812.2,330.7 L815.0,330.1 L818.0,329.7 L821.2,329.4 L824.5,329.3 L827.8,329.5 L831.0,329.8 L833.9,330.3 L836.5,331.0 L838.8,331.9 L840.6,332.8 L841.9,333.8 L842.8,334.9 L843.8,335.8 L846.5,336.4 L849.1,337.0 L851.4,337.8 L853.3,338.8 L854.8,339.8 L855.7,340.9 L856.0,342.0z" fill="none" stroke="#4f4f4f" stroke-width="6" transform="translate(0,1.5)"/><path d="M856.0,342.0 L855.7,343.1 L854.8,344.2 L853.3,345.2 L851.4,346.2 L849.1,347.0 L846.5,347.6 L843.8,348.2 L842.8,349.1 L841.9,350.2 L840.6,351.2 L838.8,352.1 L836.5,353.0 L833.9,353.7 L831.0,354.2 L827.8,354.5 L824.5,354.7 L821.2,354.6 L818.0,354.3 L815.0,353.9 L812.2,353.3 L809.7,352.6 L807.1,352.2 L804.0,352.3 L800.7,352.2 L797.5,352.0 L794.4,351.6 L791.5,351.1 L789.0,350.3 L786.9,349.5 L785.3,348.5 L784.3,347.4 L783.8,346.3 L783.9,345.1 L784.5,344.0 L785.5,343.0 L786.8,342.0 L785.5,341.0 L784.5,340.0 L783.9,338.9 L783.8,337.7 L784.3,336.6 L785.3,335.5 L786.9,334.5 L789.0,333.7 L791.5,332.9 L794.4,332.4 L797.5,332.0 L800.7,331.8 L804.0,331.7 L807.1,331.8 L809.7,331.4 L812.2,330.7 L815.0,330.1 L818.0,329.7 L821.2,329.4 L824.5,329.3 L827.8,329.5 L831.0,329.8 L833.9,330.3 L836.5,331.0 L838.8,331.9 L840.6,332.8 L841.9,333.8 L842.8,334.9 L843.8,335.8 L846.5,336.4 L849.1,337.0 L851.4,337.8 L853.3,338.8 L854.8,339.8 L855.7,340.9 L856.0,342.0z" fill="none" stroke="#858585" stroke-width="3.5"/><path d="M856.0,342.0 L855.7,343.1 L854.8,344.2 L853.3,345.2 L851.4,346.2 L849.1,347.0 L846.5,347.6 L843.8,348.2 L842.8,349.1 L841.9,350.2 L840.6,351.2 L838.8,352.1 L836.5,353.0 L833.9,353.7 L831.0,354.2 L827.8,354.5 L824.5,354.7 L821.2,354.6 L818.0,354.3 L815.0,353.9 L812.2,353.3 L809.7,352.6 L807.1,352.2 L804.0,352.3 L800.7,352.2 L797.5,352.0 L794.4,351.6 L791.5,351.1 L789.0,350.3 L786.9,349.5 L785.3,348.5 L784.3,347.4 L783.8,346.3 L783.9,345.1 L784.5,344.0 L785.5,343.0 L786.8,342.0 L785.5,341.0 L784.5,340.0 L783.9,338.9 L783.8,337.7 L784.3,336.6 L785.3,335.5 L786.9,334.5 L789.0,333.7 L791.5,332.9 L794.4,332.4 L797.5,332.0 L800.7,331.8 L804.0,331.7 L807.1,331.8 L809.7,331.4 L812.2,330.7 L815.0,330.1 L818.0,329.7 L821.2,329.4 L824.5,329.3 L827.8,329.5 L831.0,329.8 L833.9,330.3 L836.5,331.0 L838.8,331.9 L840.6,332.8 L841.9,333.8 L842.8,334.9 L843.8,335.8 L846.5,336.4 L849.1,337.0 L851.4,337.8 L853.3,338.8 L854.8,339.8 L855.7,340.9 L856.0,342.0z" fill="none" stroke="#a4a4a4" stroke-width="1.225" transform="translate(0,-0.875)"/><path d="M848.4,342.0 L848.2,342.9 L847.4,343.7 L846.3,344.5 L844.7,345.2 L842.9,345.9 L840.8,346.4 L838.6,346.8 L837.8,347.5 L837.1,348.4 L836.0,349.2 L834.6,349.9 L832.8,350.6 L830.7,351.1 L828.4,351.5 L825.9,351.8 L823.2,351.9 L820.6,351.8 L818.0,351.6 L815.6,351.3 L813.3,350.8 L811.4,350.3 L809.3,350.0 L806.8,350.0 L804.2,350.0 L801.6,349.8 L799.1,349.5 L796.8,349.1 L794.8,348.5 L793.1,347.8 L791.8,347.0 L791.0,346.2 L790.6,345.3 L790.7,344.4 L791.2,343.6 L792.0,342.8 L793.1,342.0 L792.0,341.2 L791.2,340.4 L790.7,339.6 L790.6,338.7 L791.0,337.8 L791.8,337.0 L793.1,336.2 L794.8,335.5 L796.8,334.9 L799.1,334.5 L801.6,334.2 L804.2,334.0 L806.8,334.0 L809.3,334.0 L811.4,333.7 L813.3,333.2 L815.6,332.7 L818.0,332.4 L820.6,332.2 L823.2,332.1 L825.9,332.2 L828.4,332.5 L830.7,332.9 L832.8,333.4 L834.6,334.1 L836.0,334.8 L837.1,335.6 L837.8,336.5 L838.6,337.2 L840.8,337.6 L842.9,338.1 L844.7,338.8 L846.3,339.5 L847.4,340.3 L848.2,341.1 L848.4,342.0z" fill="none" stroke="#5a5a5a" stroke-width="3.25"/><path d="M848.4,342.0 L848.2,342.9 L847.4,343.7 L846.3,344.5 L844.7,345.2 L842.9,345.9 L840.8,346.4 L838.6,346.8 L837.8,347.5 L837.1,348.4 L836.0,349.2 L834.6,349.9 L832.8,350.6 L830.7,351.1 L828.4,351.5 L825.9,351.8 L823.2,351.9 L820.6,351.8 L818.0,351.6 L815.6,351.3 L813.3,350.8 L811.4,350.3 L809.3,350.0 L806.8,350.0 L804.2,350.0 L801.6,349.8 L799.1,349.5 L796.8,349.1 L794.8,348.5 L793.1,347.8 L791.8,347.0 L791.0,346.2 L790.6,345.3 L790.7,344.4 L791.2,343.6 L792.0,342.8 L793.1,342.0 L792.0,341.2 L791.2,340.4 L790.7,339.6 L790.6,338.7 L791.0,337.8 L791.8,337.0 L793.1,336.2 L794.8,335.5 L796.8,334.9 L799.1,334.5 L801.6,334.2 L804.2,334.0 L806.8,334.0 L809.3,334.0 L811.4,333.7 L813.3,333.2 L815.6,332.7 L818.0,332.4 L820.6,332.2 L823.2,332.1 L825.9,332.2 L828.4,332.5 L830.7,332.9 L832.8,333.4 L834.6,334.1 L836.0,334.8 L837.1,335.6 L837.8,336.5 L838.6,337.2 L840.8,337.6 L842.9,338.1 L844.7,338.8 L846.3,339.5 L847.4,340.3 L848.2,341.1 L848.4,342.0z" fill="none" stroke="#8e8e8e" stroke-width="1.75"/><ellipse cx="820.7" cy="347.8" rx="7.6" ry="2.9" fill="none" stroke="#575757" stroke-width="3.6"/><ellipse cx="820.7" cy="347.8" rx="7.6" ry="2.9" fill="none" stroke="#909090" stroke-width="2.1"/><ellipse cx="802.8" cy="344.7" rx="7.6" ry="2.9" fill="none" stroke="#575757" stroke-width="3.6"/><ellipse cx="802.8" cy="344.7" rx="7.6" ry="2.9" fill="none" stroke="#909090" stroke-width="2.1"/><ellipse cx="805.9" cy="337.9" rx="7.6" ry="2.9" fill="none" stroke="#575757" stroke-width="3.6"/><ellipse cx="805.9" cy="337.9" rx="7.6" ry="2.9" fill="none" stroke="#909090" stroke-width="2.1"/><ellipse cx="825.8" cy="336.8" rx="7.6" ry="2.9" fill="none" stroke="#575757" stroke-width="3.6"/><ellipse cx="825.8" cy="336.8" rx="7.6" ry="2.9" fill="none" stroke="#909090" stroke-width="2.1"/><ellipse cx="834.9" cy="342.9" rx="7.6" ry="2.9" fill="none" stroke="#575757" stroke-width="3.6"/><ellipse cx="834.9" cy="342.9" rx="7.6" ry="2.9" fill="none" stroke="#909090" stroke-width="2.1"/><ellipse cx="818" cy="342" rx="8.36" ry="3.9" fill="#8a8a8a" stroke="#575757" stroke-width="1.2"/><line x1="825" y1="346.8" x2="858" y2="396.8" stroke="#575757" stroke-width="12" stroke-linecap="round"/><line x1="825" y1="346" x2="858" y2="396" stroke="#858585" stroke-width="10" stroke-linecap="round"/><line x1="826.5" y1="345.0" x2="859.5" y2="395.0" stroke="#9b9b9b" stroke-width="6" stroke-linecap="round"/><line x1="827.4" y1="344.4" x2="860.4" y2="394.4" stroke="#adadad" stroke-width="2" stroke-linecap="round"/><polygon points="742,351 790,351 790,362 742,362" fill="#8c8c8c" stroke="#575757" stroke-width="1.2"/><path d="M581.0,350.0 Q582.6,357.5 567.8,362.4 Q555.3,368.1 536.0,367.5 Q516.7,368.1 504.2,362.4 Q489.4,357.5 491.0,350.0 Q489.4,342.5 504.2,337.6 Q516.7,331.9 536.0,332.5 Q555.3,331.9 567.8,337.6 Q582.6,342.5 581.0,350.0z" transform="translate(0,2)" fill="#505050"/><path d="M581.0,350.0 Q582.6,357.5 567.8,362.4 Q555.3,368.1 536.0,367.5 Q516.7,368.1 504.2,362.4 Q489.4,357.5 491.0,350.0 Q489.4,342.5 504.2,337.6 Q516.7,331.9 536.0,332.5 Q555.3,331.9 567.8,337.6 Q582.6,342.5 581.0,350.0z" fill="#8f8f8f" stroke="#575757" stroke-width="1.1"/><clipPath id="oc1"><path d="M581.0,350.0 Q582.6,357.5 567.8,362.4 Q555.3,368.1 536.0,367.5 Q516.7,368.1 504.2,362.4 Q489.4,357.5 491.0,350.0 Q489.4,342.5 504.2,337.6 Q516.7,331.9 536.0,332.5 Q555.3,331.9 567.8,337.6 Q582.6,342.5 581.0,350.0z"/></clipPath><g clip-path="url(#oc1)"><ellipse cx="536" cy="349" rx="40.5" ry="14.875" fill="none" stroke="#9e9e9e" stroke-width="2"/><ellipse cx="546.0" cy="362.8" rx="6.1" ry="3.4" fill="#747474" stroke="#a6a6a6" stroke-width="1.4"/><ellipse cx="532.7" cy="362.3" rx="3.2" ry="1.8" fill="#747474" stroke="#a6a6a6" stroke-width="1.4"/><ellipse cx="560.3" cy="347.3" rx="4.9" ry="2.7" fill="#747474" stroke="#a6a6a6" stroke-width="1.4"/><ellipse cx="538.6" cy="353.2" rx="5.8" ry="3.2" fill="#747474" stroke="#a6a6a6" stroke-width="1.4"/><ellipse cx="508.9" cy="357.2" rx="4.8" ry="2.7" fill="#747474" stroke="#a6a6a6" stroke-width="1.4"/><ellipse cx="554.7" cy="354.2" rx="3.9" ry="2.2" fill="#747474" stroke="#a6a6a6" stroke-width="1.4"/><ellipse cx="537.2" cy="346.5" rx="5.6" ry="3.1" fill="#747474" stroke="#a6a6a6" stroke-width="1.4"/><ellipse cx="536.7" cy="345.0" rx="3.1" ry="1.7" fill="#747474" stroke="#a6a6a6" stroke-width="1.4"/><ellipse cx="549.6" cy="339.8" rx="4.8" ry="2.6" fill="#747474" stroke="#a6a6a6" stroke-width="1.4"/><ellipse cx="549.5" cy="357.6" rx="4.5" ry="2.5" fill="#747474" stroke="#a6a6a6" stroke-width="1.4"/><ellipse cx="560.4" cy="355.4" rx="5.2" ry="2.9" fill="#747474" stroke="#a6a6a6" stroke-width="1.4"/><ellipse cx="534.0" cy="357.6" rx="4.5" ry="2.5" fill="#747474" stroke="#a6a6a6" stroke-width="1.4"/><ellipse cx="559.7" cy="339.2" rx="4.4" ry="2.4" fill="#747474" stroke="#a6a6a6" stroke-width="1.4"/><ellipse cx="513.5" cy="343.3" rx="6.0" ry="3.3" fill="#747474" stroke="#a6a6a6" stroke-width="1.4"/><ellipse cx="567.9" cy="357.7" rx="5.3" ry="2.9" fill="#747474" stroke="#a6a6a6" stroke-width="1.4"/><ellipse cx="512.0" cy="339.0" rx="6.0" ry="3.3" fill="#747474" stroke="#a6a6a6" stroke-width="1.4"/><ellipse cx="510.0" cy="350.5" rx="4.7" ry="2.6" fill="#747474" stroke="#a6a6a6" stroke-width="1.4"/><ellipse cx="507.0" cy="353.1" rx="3.2" ry="1.7" fill="#747474" stroke="#a6a6a6" stroke-width="1.4"/><ellipse cx="523.4" cy="346.8" rx="4.8" ry="2.6" fill="#747474" stroke="#a6a6a6" stroke-width="1.4"/><ellipse cx="545.5" cy="356.6" rx="5.1" ry="2.8" fill="#747474" stroke="#a6a6a6" stroke-width="1.4"/><ellipse cx="532.0" cy="360.7" rx="3.5" ry="1.9" fill="#747474" stroke="#a6a6a6" stroke-width="1.4"/></g><line x1="596" y1="352.8" x2="800" y2="372.8" stroke="#575757" stroke-width="18" stroke-linecap="round"/><line x1="596" y1="352" x2="800" y2="372" stroke="#858585" stroke-width="16" stroke-linecap="round"/><line x1="596.3" y1="349.1" x2="800.3" y2="369.1" stroke="#9b9b9b" stroke-width="9.6" stroke-linecap="round"/><line x1="596.4" y1="347.4" x2="800.4" y2="367.4" stroke="#adadad" stroke-width="3.2" stroke-linecap="round"/><ellipse cx="586" cy="357" rx="10" ry="9" fill="#858585" stroke="#575757" stroke-width="1.2"/><ellipse cx="586" cy="354.75" rx="6" ry="4.05" fill="#999"/><ellipse cx="905" cy="362.8" rx="20" ry="8" fill="none" stroke="#575757" stroke-width="7.4"/><ellipse cx="905" cy="362" rx="20" ry="8" fill="none" stroke="#868686" stroke-width="5.4"/><ellipse cx="905" cy="360.92" rx="20" ry="8" fill="none" stroke="#a2a2a2" stroke-width="2.43"/><ellipse cx="940" cy="366.8" rx="20" ry="8" fill="none" stroke="#575757" stroke-width="7.4"/><ellipse cx="940" cy="366" rx="20" ry="8" fill="none" stroke="#868686" stroke-width="5.4"/><ellipse cx="940" cy="364.92" rx="20" ry="8" fill="none" stroke="#a2a2a2" stroke-width="2.43"/><ellipse cx="922" cy="357.8" rx="15" ry="6" fill="none" stroke="#575757" stroke-width="6.05"/><ellipse cx="922" cy="357" rx="15" ry="6" fill="none" stroke="#868686" stroke-width="4.05"/><ellipse cx="922" cy="356.19" rx="15" ry="6" fill="none" stroke="#a2a2a2" stroke-width="1.8225"/><line x1="908" y1="374.8" x2="866" y2="402.8" stroke="#575757" stroke-width="12" stroke-linecap="round"/><line x1="908" y1="374" x2="866" y2="402" stroke="#858585" stroke-width="10" stroke-linecap="round"/><line x1="907.0" y1="372.5" x2="865.0" y2="400.5" stroke="#9b9b9b" stroke-width="6" stroke-linecap="round"/><line x1="906.4" y1="371.6" x2="864.4" y2="399.6" stroke="#adadad" stroke-width="2" stroke-linecap="round"/><ellipse cx="662" cy="406.8" rx="33" ry="11" fill="none" stroke="#575757" stroke-width="7.4"/><ellipse cx="662" cy="406" rx="33" ry="11" fill="none" stroke="#868686" stroke-width="5.4"/><ellipse cx="662" cy="404.92" rx="33" ry="11" fill="none" stroke="#a2a2a2" stroke-width="2.43"/><ellipse cx="727" cy="394.8" rx="36" ry="10" fill="none" stroke="#575757" stroke-width="7.4"/><ellipse cx="727" cy="394" rx="36" ry="10" fill="none" stroke="#868686" stroke-width="5.4"/><ellipse cx="727" cy="392.92" rx="36" ry="10" fill="none" stroke="#a2a2a2" stroke-width="2.43"/><line x1="697" y1="419.8" x2="800" y2="447.8" stroke="#575757" stroke-width="12" stroke-linecap="round"/><line x1="697" y1="419" x2="800" y2="447" stroke="#858585" stroke-width="10" stroke-linecap="round"/><line x1="697.5" y1="417.3" x2="800.5" y2="445.3" stroke="#9b9b9b" stroke-width="6" stroke-linecap="round"/><line x1="697.8" y1="416.2" x2="800.8" y2="444.2" stroke="#adadad" stroke-width="2" stroke-linecap="round"/><line x1="506" y1="401.8" x2="561" y2="369.8" stroke="#575757" stroke-width="11" stroke-linecap="round"/><line x1="506" y1="401" x2="561" y2="369" stroke="#858585" stroke-width="9" stroke-linecap="round"/><line x1="505.2" y1="399.6" x2="560.2" y2="367.6" stroke="#9b9b9b" stroke-width="5.4" stroke-linecap="round"/><line x1="504.7" y1="398.8" x2="559.7" y2="366.8" stroke="#adadad" stroke-width="1.8" stroke-linecap="round"/><line x1="518" y1="419.8" x2="627" y2="405.8" stroke="#575757" stroke-width="10" stroke-linecap="round"/><line x1="518" y1="419" x2="627" y2="405" stroke="#858585" stroke-width="8" stroke-linecap="round"/><line x1="517.8" y1="417.6" x2="626.8" y2="403.6" stroke="#9b9b9b" stroke-width="4.8" stroke-linecap="round"/><line x1="517.7" y1="416.7" x2="626.7" y2="402.7" stroke="#adadad" stroke-width="1.6" stroke-linecap="round"/><ellipse cx="438" cy="426.8" rx="22" ry="10" fill="none" stroke="#575757" stroke-width="8.75"/><ellipse cx="438" cy="426" rx="22" ry="10" fill="none" stroke="#868686" stroke-width="6.75"/><ellipse cx="438" cy="424.65" rx="22" ry="10" fill="none" stroke="#a2a2a2" stroke-width="3.0375"/><ellipse cx="477" cy="428.8" rx="19" ry="9" fill="none" stroke="#575757" stroke-width="8.75"/><ellipse cx="477" cy="428" rx="19" ry="9" fill="none" stroke="#868686" stroke-width="6.75"/><ellipse cx="477" cy="426.65" rx="19" ry="9" fill="none" stroke="#a2a2a2" stroke-width="3.0375"/><ellipse cx="518" cy="429.8" rx="22" ry="10" fill="none" stroke="#575757" stroke-width="8.75"/><ellipse cx="518" cy="429" rx="22" ry="10" fill="none" stroke="#868686" stroke-width="6.75"/><ellipse cx="518" cy="427.65" rx="22" ry="10" fill="none" stroke="#a2a2a2" stroke-width="3.0375"/><ellipse cx="458" cy="443.8" rx="23" ry="10" fill="none" stroke="#575757" stroke-width="8.75"/><ellipse cx="458" cy="443" rx="23" ry="10" fill="none" stroke="#868686" stroke-width="6.75"/><ellipse cx="458" cy="441.65" rx="23" ry="10" fill="none" stroke="#a2a2a2" stroke-width="3.0375"/><ellipse cx="501" cy="405" rx="9" ry="8" fill="#858585" stroke="#575757" stroke-width="1.2"/><ellipse cx="501" cy="403" rx="5.4" ry="3.6" fill="#999"/><line x1="785" y1="406.8" x2="989" y2="419.8" stroke="#575757" stroke-width="20" stroke-linecap="round"/><line x1="785" y1="406" x2="989" y2="419" stroke="#858585" stroke-width="18" stroke-linecap="round"/><line x1="785.2" y1="402.8" x2="989.2" y2="415.8" stroke="#9b9b9b" stroke-width="10.8" stroke-linecap="round"/><line x1="785.3" y1="400.8" x2="989.3" y2="413.8" stroke="#adadad" stroke-width="3.6" stroke-linecap="round"/><ellipse cx="996" cy="420" rx="11" ry="12" fill="#8a8a8a" stroke="#575757" stroke-width="1.2"/><ellipse cx="996" cy="416.4" rx="5.5" ry="4.2" fill="#a0a0a0"/><path d="M1097.0,449.0 Q1098.4,453.9 1085.3,457.1 Q1074.1,460.9 1057.0,460.5 Q1039.9,460.9 1028.7,457.1 Q1015.6,453.9 1017.0,449.0 Q1015.6,444.1 1028.7,440.9 Q1039.9,437.1 1057.0,437.5 Q1074.1,437.1 1085.3,440.9 Q1098.4,444.1 1097.0,449.0z" transform="translate(0,2)" fill="#505050"/><path d="M1097.0,449.0 Q1098.4,453.9 1085.3,457.1 Q1074.1,460.9 1057.0,460.5 Q1039.9,460.9 1028.7,457.1 Q1015.6,453.9 1017.0,449.0 Q1015.6,444.1 1028.7,440.9 Q1039.9,437.1 1057.0,437.5 Q1074.1,437.1 1085.3,440.9 Q1098.4,444.1 1097.0,449.0z" fill="#8f8f8f" stroke="#575757" stroke-width="1.1"/><path d="M1101.0,425.0 Q1104.4,432.1 1091.1,437.0 Q1083.2,443.6 1065.1,444.5 Q1049.0,448.0 1032.9,444.5 Q1014.8,443.6 1006.9,437.0 Q993.6,432.1 997.0,425.0 Q993.6,417.9 1006.9,413.0 Q1014.8,406.4 1032.9,405.5 Q1049.0,402.0 1065.1,405.5 Q1083.2,406.4 1091.1,413.0 Q1104.4,417.9 1101.0,425.0z" transform="translate(0,2)" fill="#505050"/><path d="M1101.0,425.0 Q1104.4,432.1 1091.1,437.0 Q1083.2,443.6 1065.1,444.5 Q1049.0,448.0 1032.9,444.5 Q1014.8,443.6 1006.9,437.0 Q993.6,432.1 997.0,425.0 Q993.6,417.9 1006.9,413.0 Q1014.8,406.4 1032.9,405.5 Q1049.0,402.0 1065.1,405.5 Q1083.2,406.4 1091.1,413.0 Q1104.4,417.9 1101.0,425.0z" fill="#8f8f8f" stroke="#575757" stroke-width="1.1"/><clipPath id="oc3"><path d="M1101.0,425.0 Q1104.4,432.1 1091.1,437.0 Q1083.2,443.6 1065.1,444.5 Q1049.0,448.0 1032.9,444.5 Q1014.8,443.6 1006.9,437.0 Q993.6,432.1 997.0,425.0 Q993.6,417.9 1006.9,413.0 Q1014.8,406.4 1032.9,405.5 Q1049.0,402.0 1065.1,405.5 Q1083.2,406.4 1091.1,413.0 Q1104.4,417.9 1101.0,425.0z"/></clipPath><g clip-path="url(#oc3)"><ellipse cx="1049" cy="424" rx="46.8" ry="17.425" fill="none" stroke="#9e9e9e" stroke-width="2"/><ellipse cx="1045.6" cy="412.8" rx="5.4" ry="3.0" fill="#747474" stroke="#a6a6a6" stroke-width="1.4"/><ellipse cx="1078.1" cy="414.7" rx="6.2" ry="3.4" fill="#747474" stroke="#a6a6a6" stroke-width="1.4"/><ellipse cx="1025.6" cy="433.1" rx="5.3" ry="2.9" fill="#747474" stroke="#a6a6a6" stroke-width="1.4"/><ellipse cx="1037.2" cy="438.8" rx="3.3" ry="1.8" fill="#747474" stroke="#a6a6a6" stroke-width="1.4"/><ellipse cx="1062.6" cy="430.7" rx="4.4" ry="2.4" fill="#747474" stroke="#a6a6a6" stroke-width="1.4"/><ellipse cx="1028.7" cy="412.7" rx="6.2" ry="3.4" fill="#747474" stroke="#a6a6a6" stroke-width="1.4"/><ellipse cx="1069.3" cy="432.8" rx="3.7" ry="2.1" fill="#747474" stroke="#a6a6a6" stroke-width="1.4"/><ellipse cx="1063.1" cy="433.6" rx="5.6" ry="3.1" fill="#747474" stroke="#a6a6a6" stroke-width="1.4"/><ellipse cx="1016.5" cy="418.3" rx="6.2" ry="3.4" fill="#747474" stroke="#a6a6a6" stroke-width="1.4"/><ellipse cx="1057.0" cy="430.4" rx="3.6" ry="2.0" fill="#747474" stroke="#a6a6a6" stroke-width="1.4"/><ellipse cx="1037.0" cy="428.4" rx="6.3" ry="3.5" fill="#747474" stroke="#a6a6a6" stroke-width="1.4"/><ellipse cx="1035.3" cy="425.2" rx="5.1" ry="2.8" fill="#747474" stroke="#a6a6a6" stroke-width="1.4"/><ellipse cx="1051.9" cy="421.9" rx="6.4" ry="3.5" fill="#747474" stroke="#a6a6a6" stroke-width="1.4"/><ellipse cx="1033.8" cy="436.3" rx="3.4" ry="1.9" fill="#747474" stroke="#a6a6a6" stroke-width="1.4"/><ellipse cx="1076.0" cy="412.1" rx="3.9" ry="2.1" fill="#747474" stroke="#a6a6a6" stroke-width="1.4"/><ellipse cx="1044.6" cy="431.6" rx="3.1" ry="1.7" fill="#747474" stroke="#a6a6a6" stroke-width="1.4"/><ellipse cx="1034.8" cy="422.2" rx="6.3" ry="3.5" fill="#747474" stroke="#a6a6a6" stroke-width="1.4"/><ellipse cx="1041.7" cy="422.6" rx="4.8" ry="2.6" fill="#747474" stroke="#a6a6a6" stroke-width="1.4"/><ellipse cx="1050.1" cy="413.0" rx="5.9" ry="3.3" fill="#747474" stroke="#a6a6a6" stroke-width="1.4"/><ellipse cx="1063.0" cy="439.5" rx="6.4" ry="3.5" fill="#747474" stroke="#a6a6a6" stroke-width="1.4"/><ellipse cx="1038.4" cy="411.6" rx="3.4" ry="1.8" fill="#747474" stroke="#a6a6a6" stroke-width="1.4"/><ellipse cx="1061.7" cy="412.7" rx="5.7" ry="3.1" fill="#747474" stroke="#a6a6a6" stroke-width="1.4"/><ellipse cx="1075.2" cy="413.2" rx="5.3" ry="2.9" fill="#747474" stroke="#a6a6a6" stroke-width="1.4"/><ellipse cx="1068.7" cy="425.7" rx="4.4" ry="2.4" fill="#747474" stroke="#a6a6a6" stroke-width="1.4"/><ellipse cx="1026.1" cy="412.2" rx="4.7" ry="2.6" fill="#747474" stroke="#a6a6a6" stroke-width="1.4"/><ellipse cx="1017.1" cy="432.5" rx="5.1" ry="2.8" fill="#747474" stroke="#a6a6a6" stroke-width="1.4"/><ellipse cx="1075.5" cy="431.0" rx="4.1" ry="2.2" fill="#747474" stroke="#a6a6a6" stroke-width="1.4"/><ellipse cx="1075.2" cy="423.0" rx="3.6" ry="2.0" fill="#747474" stroke="#a6a6a6" stroke-width="1.4"/></g><line x1="838" y1="384.8" x2="793" y2="434.8" stroke="#575757" stroke-width="14" stroke-linecap="round"/><line x1="838" y1="384" x2="793" y2="434" stroke="#858585" stroke-width="12" stroke-linecap="round"/><line x1="836.4" y1="382.6" x2="791.4" y2="432.6" stroke="#9b9b9b" stroke-width="7.2" stroke-linecap="round"/><line x1="835.4" y1="381.7" x2="790.4" y2="431.7" stroke="#adadad" stroke-width="2.4" stroke-linecap="round"/><path d="M937.0,441.0 L936.6,442.6 L935.6,444.1 L933.9,445.5 L931.7,446.8 L929.0,447.9 L926.0,448.8 L922.8,449.5 L921.7,450.8 L920.7,452.3 L919.1,453.7 L917.0,455.0 L914.5,456.2 L911.4,457.2 L908.0,457.9 L904.4,458.4 L900.6,458.5 L896.7,458.4 L893.0,458.1 L889.5,457.4 L886.3,456.6 L883.4,455.7 L880.4,455.1 L876.7,455.3 L873.0,455.2 L869.2,454.9 L865.6,454.3 L862.3,453.6 L859.4,452.5 L857.0,451.3 L855.1,449.9 L853.9,448.5 L853.4,446.9 L853.5,445.3 L854.2,443.8 L855.3,442.3 L856.9,441.0 L855.3,439.7 L854.2,438.2 L853.5,436.7 L853.4,435.1 L853.9,433.5 L855.1,432.1 L857.0,430.7 L859.4,429.5 L862.3,428.4 L865.6,427.7 L869.2,427.1 L873.0,426.8 L876.7,426.7 L880.4,426.9 L883.4,426.3 L886.3,425.4 L889.5,424.6 L893.0,423.9 L896.7,423.6 L900.6,423.5 L904.4,423.6 L908.0,424.1 L911.4,424.8 L914.5,425.8 L917.0,427.0 L919.1,428.3 L920.7,429.7 L921.7,431.2 L922.8,432.5 L926.0,433.2 L929.0,434.1 L931.7,435.2 L933.9,436.5 L935.6,437.9 L936.6,439.4 L937.0,441.0z" fill="none" stroke="#4f4f4f" stroke-width="6.5" transform="translate(0,1.5)"/><path d="M937.0,441.0 L936.6,442.6 L935.6,444.1 L933.9,445.5 L931.7,446.8 L929.0,447.9 L926.0,448.8 L922.8,449.5 L921.7,450.8 L920.7,452.3 L919.1,453.7 L917.0,455.0 L914.5,456.2 L911.4,457.2 L908.0,457.9 L904.4,458.4 L900.6,458.5 L896.7,458.4 L893.0,458.1 L889.5,457.4 L886.3,456.6 L883.4,455.7 L880.4,455.1 L876.7,455.3 L873.0,455.2 L869.2,454.9 L865.6,454.3 L862.3,453.6 L859.4,452.5 L857.0,451.3 L855.1,449.9 L853.9,448.5 L853.4,446.9 L853.5,445.3 L854.2,443.8 L855.3,442.3 L856.9,441.0 L855.3,439.7 L854.2,438.2 L853.5,436.7 L853.4,435.1 L853.9,433.5 L855.1,432.1 L857.0,430.7 L859.4,429.5 L862.3,428.4 L865.6,427.7 L869.2,427.1 L873.0,426.8 L876.7,426.7 L880.4,426.9 L883.4,426.3 L886.3,425.4 L889.5,424.6 L893.0,423.9 L896.7,423.6 L900.6,423.5 L904.4,423.6 L908.0,424.1 L911.4,424.8 L914.5,425.8 L917.0,427.0 L919.1,428.3 L920.7,429.7 L921.7,431.2 L922.8,432.5 L926.0,433.2 L929.0,434.1 L931.7,435.2 L933.9,436.5 L935.6,437.9 L936.6,439.4 L937.0,441.0z" fill="none" stroke="#858585" stroke-width="4"/><path d="M937.0,441.0 L936.6,442.6 L935.6,444.1 L933.9,445.5 L931.7,446.8 L929.0,447.9 L926.0,448.8 L922.8,449.5 L921.7,450.8 L920.7,452.3 L919.1,453.7 L917.0,455.0 L914.5,456.2 L911.4,457.2 L908.0,457.9 L904.4,458.4 L900.6,458.5 L896.7,458.4 L893.0,458.1 L889.5,457.4 L886.3,456.6 L883.4,455.7 L880.4,455.1 L876.7,455.3 L873.0,455.2 L869.2,454.9 L865.6,454.3 L862.3,453.6 L859.4,452.5 L857.0,451.3 L855.1,449.9 L853.9,448.5 L853.4,446.9 L853.5,445.3 L854.2,443.8 L855.3,442.3 L856.9,441.0 L855.3,439.7 L854.2,438.2 L853.5,436.7 L853.4,435.1 L853.9,433.5 L855.1,432.1 L857.0,430.7 L859.4,429.5 L862.3,428.4 L865.6,427.7 L869.2,427.1 L873.0,426.8 L876.7,426.7 L880.4,426.9 L883.4,426.3 L886.3,425.4 L889.5,424.6 L893.0,423.9 L896.7,423.6 L900.6,423.5 L904.4,423.6 L908.0,424.1 L911.4,424.8 L914.5,425.8 L917.0,427.0 L919.1,428.3 L920.7,429.7 L921.7,431.2 L922.8,432.5 L926.0,433.2 L929.0,434.1 L931.7,435.2 L933.9,436.5 L935.6,437.9 L936.6,439.4 L937.0,441.0z" fill="none" stroke="#a4a4a4" stroke-width="1.4" transform="translate(0,-1)"/><path d="M928.2,441.0 L927.9,442.2 L927.1,443.4 L925.7,444.5 L924.0,445.5 L921.8,446.4 L919.4,447.1 L916.9,447.7 L916.0,448.7 L915.1,449.8 L913.9,450.9 L912.2,452.0 L910.2,452.9 L907.8,453.6 L905.0,454.2 L902.1,454.5 L899.0,454.7 L896.0,454.6 L893.0,454.3 L890.2,453.8 L887.6,453.2 L885.3,452.4 L882.9,452.0 L880.0,452.1 L877.0,452.1 L874.0,451.8 L871.1,451.4 L868.5,450.8 L866.1,450.0 L864.2,449.1 L862.7,448.0 L861.7,446.8 L861.3,445.6 L861.4,444.4 L861.9,443.2 L862.9,442.1 L864.1,441.0 L862.9,439.9 L861.9,438.8 L861.4,437.6 L861.3,436.4 L861.7,435.2 L862.7,434.0 L864.2,432.9 L866.1,432.0 L868.5,431.2 L871.1,430.6 L874.0,430.2 L877.0,429.9 L880.0,429.9 L882.9,430.0 L885.3,429.6 L887.6,428.8 L890.2,428.2 L893.0,427.7 L896.0,427.4 L899.0,427.3 L902.1,427.5 L905.0,427.8 L907.8,428.4 L910.2,429.1 L912.2,430.0 L913.9,431.1 L915.1,432.2 L916.0,433.3 L916.9,434.3 L919.4,434.9 L921.8,435.6 L924.0,436.5 L925.7,437.5 L927.1,438.6 L927.9,439.8 L928.2,441.0z" fill="none" stroke="#5a5a5a" stroke-width="3.5"/><path d="M928.2,441.0 L927.9,442.2 L927.1,443.4 L925.7,444.5 L924.0,445.5 L921.8,446.4 L919.4,447.1 L916.9,447.7 L916.0,448.7 L915.1,449.8 L913.9,450.9 L912.2,452.0 L910.2,452.9 L907.8,453.6 L905.0,454.2 L902.1,454.5 L899.0,454.7 L896.0,454.6 L893.0,454.3 L890.2,453.8 L887.6,453.2 L885.3,452.4 L882.9,452.0 L880.0,452.1 L877.0,452.1 L874.0,451.8 L871.1,451.4 L868.5,450.8 L866.1,450.0 L864.2,449.1 L862.7,448.0 L861.7,446.8 L861.3,445.6 L861.4,444.4 L861.9,443.2 L862.9,442.1 L864.1,441.0 L862.9,439.9 L861.9,438.8 L861.4,437.6 L861.3,436.4 L861.7,435.2 L862.7,434.0 L864.2,432.9 L866.1,432.0 L868.5,431.2 L871.1,430.6 L874.0,430.2 L877.0,429.9 L880.0,429.9 L882.9,430.0 L885.3,429.6 L887.6,428.8 L890.2,428.2 L893.0,427.7 L896.0,427.4 L899.0,427.3 L902.1,427.5 L905.0,427.8 L907.8,428.4 L910.2,429.1 L912.2,430.0 L913.9,431.1 L915.1,432.2 L916.0,433.3 L916.9,434.3 L919.4,434.9 L921.8,435.6 L924.0,436.5 L925.7,437.5 L927.1,438.6 L927.9,439.8 L928.2,441.0z" fill="none" stroke="#8e8e8e" stroke-width="2"/><ellipse cx="896.1" cy="449.0" rx="8.8" ry="4.0" fill="none" stroke="#575757" stroke-width="3.9"/><ellipse cx="896.1" cy="449.0" rx="8.8" ry="4.0" fill="none" stroke="#909090" stroke-width="2.4"/><ellipse cx="875.4" cy="444.7" rx="8.8" ry="4.0" fill="none" stroke="#575757" stroke-width="3.9"/><ellipse cx="875.4" cy="444.7" rx="8.8" ry="4.0" fill="none" stroke="#909090" stroke-width="2.4"/><ellipse cx="879.0" cy="435.3" rx="8.8" ry="4.0" fill="none" stroke="#575757" stroke-width="3.9"/><ellipse cx="879.0" cy="435.3" rx="8.8" ry="4.0" fill="none" stroke="#909090" stroke-width="2.4"/><ellipse cx="902.0" cy="433.8" rx="8.8" ry="4.0" fill="none" stroke="#575757" stroke-width="3.9"/><ellipse cx="902.0" cy="433.8" rx="8.8" ry="4.0" fill="none" stroke="#909090" stroke-width="2.4"/><ellipse cx="912.6" cy="442.3" rx="8.8" ry="4.0" fill="none" stroke="#575757" stroke-width="3.9"/><ellipse cx="912.6" cy="442.3" rx="8.8" ry="4.0" fill="none" stroke="#909090" stroke-width="2.4"/><ellipse cx="893" cy="441" rx="9.68" ry="5.4" fill="#8a8a8a" stroke="#575757" stroke-width="1.2"/><ellipse cx="1095" cy="470.8" rx="38" ry="14" fill="none" stroke="#575757" stroke-width="8.75"/><ellipse cx="1095" cy="470" rx="38" ry="14" fill="none" stroke="#868686" stroke-width="6.75"/><ellipse cx="1095" cy="468.65" rx="38" ry="14" fill="none" stroke="#a2a2a2" stroke-width="3.0375"/><polygon points="1075,494 1104,494 1104,517 1075,517" fill="#8c8c8c" stroke="#575757" stroke-width="1.2"/><polygon points="1105,494 1133,494 1133,518 1105,518" fill="#8c8c8c" stroke="#575757" stroke-width="1.2"/><line x1="945" y1="430.8" x2="1045" y2="460.8" stroke="#575757" stroke-width="15" stroke-linecap="round"/><line x1="945" y1="430" x2="1045" y2="460" stroke="#858585" stroke-width="13" stroke-linecap="round"/><line x1="945.7" y1="427.8" x2="1045.7" y2="457.8" stroke="#9b9b9b" stroke-width="7.8" stroke-linecap="round"/><line x1="946.1" y1="426.4" x2="1046.1" y2="456.4" stroke="#adadad" stroke-width="2.6" stroke-linecap="round"/><line x1="932" y1="448.8" x2="1162" y2="502.8" stroke="#575757" stroke-width="18" stroke-linecap="round"/><line x1="932" y1="448" x2="1162" y2="502" stroke="#858585" stroke-width="16" stroke-linecap="round"/><line x1="932.7" y1="445.2" x2="1162.7" y2="499.2" stroke="#9b9b9b" stroke-width="9.6" stroke-linecap="round"/><line x1="933.1" y1="443.5" x2="1163.1" y2="497.5" stroke="#adadad" stroke-width="3.2" stroke-linecap="round"/><line x1="987" y1="427.8" x2="972" y2="480.8" stroke="#575757" stroke-width="13" stroke-linecap="round"/><line x1="987" y1="427" x2="972" y2="480" stroke="#858585" stroke-width="11" stroke-linecap="round"/><line x1="985.1" y1="426.5" x2="970.1" y2="479.5" stroke="#9b9b9b" stroke-width="6.6" stroke-linecap="round"/><line x1="984.0" y1="426.1" x2="969.0" y2="479.1" stroke="#adadad" stroke-width="2.2" stroke-linecap="round"/><line x1="700" y1="425.8" x2="745" y2="470.8" stroke="#575757" stroke-width="14" stroke-linecap="round"/><line x1="700" y1="425" x2="745" y2="470" stroke="#858585" stroke-width="12" stroke-linecap="round"/><line x1="701.5" y1="423.5" x2="746.5" y2="468.5" stroke="#9b9b9b" stroke-width="7.2" stroke-linecap="round"/><line x1="702.4" y1="422.6" x2="747.4" y2="467.6" stroke="#adadad" stroke-width="2.4" stroke-linecap="round"/><polygon points="752,451 812,451 812,466 752,466" fill="#8c8c8c" stroke="#575757" stroke-width="1.2"/><polygon points="772,445 800,445 800,452 772,452" fill="#8c8c8c" stroke="#575757" stroke-width="1.2"/><ellipse cx="773" cy="460.8" rx="65" ry="22" fill="none" stroke="#575757" stroke-width="12.8"/><ellipse cx="773" cy="460" rx="65" ry="22" fill="none" stroke="#868686" stroke-width="10.8"/><ellipse cx="773" cy="457.84" rx="65" ry="22" fill="none" stroke="#a2a2a2" stroke-width="4.86"/><ellipse cx="651" cy="483.8" rx="47" ry="19" fill="none" stroke="#575757" stroke-width="8.75"/><ellipse cx="651" cy="483" rx="47" ry="19" fill="none" stroke="#868686" stroke-width="6.75"/><ellipse cx="651" cy="481.65" rx="47" ry="19" fill="none" stroke="#a2a2a2" stroke-width="3.0375"/><path d="M1034.0,506.0 Q1039.2,515.2 1027.1,522.0 Q1024.3,531.6 1008.1,534.4 Q997.8,542.1 981.2,540.2 Q965.9,544.4 952.7,538.3 Q935.8,537.8 929.1,528.9 Q914.5,524.0 915.7,514.3 Q906.8,506.0 915.7,497.7 Q914.5,488.0 929.1,483.1 Q935.8,474.2 952.7,473.7 Q965.9,467.6 981.2,471.8 Q997.8,469.9 1008.1,477.6 Q1024.3,480.4 1027.1,490.0 Q1039.2,496.8 1034.0,506.0z" transform="translate(0,2)" fill="#505050"/><path d="M1034.0,506.0 Q1039.2,515.2 1027.1,522.0 Q1024.3,531.6 1008.1,534.4 Q997.8,542.1 981.2,540.2 Q965.9,544.4 952.7,538.3 Q935.8,537.8 929.1,528.9 Q914.5,524.0 915.7,514.3 Q906.8,506.0 915.7,497.7 Q914.5,488.0 929.1,483.1 Q935.8,474.2 952.7,473.7 Q965.9,467.6 981.2,471.8 Q997.8,469.9 1008.1,477.6 Q1024.3,480.4 1027.1,490.0 Q1039.2,496.8 1034.0,506.0z" fill="#8f8f8f" stroke="#575757" stroke-width="1.1"/><clipPath id="oc4"><path d="M1034.0,506.0 Q1039.2,515.2 1027.1,522.0 Q1024.3,531.6 1008.1,534.4 Q997.8,542.1 981.2,540.2 Q965.9,544.4 952.7,538.3 Q935.8,537.8 929.1,528.9 Q914.5,524.0 915.7,514.3 Q906.8,506.0 915.7,497.7 Q914.5,488.0 929.1,483.1 Q935.8,474.2 952.7,473.7 Q965.9,467.6 981.2,471.8 Q997.8,469.9 1008.1,477.6 Q1024.3,480.4 1027.1,490.0 Q1039.2,496.8 1034.0,506.0z"/></clipPath><g clip-path="url(#oc4)"><ellipse cx="974" cy="505" rx="54" ry="29.325" fill="none" stroke="#9e9e9e" stroke-width="2"/><ellipse cx="1000.8" cy="525.2" rx="4.7" ry="2.6" fill="#747474" stroke="#a6a6a6" stroke-width="1.4"/><ellipse cx="997.4" cy="507.4" rx="4.3" ry="2.4" fill="#747474" stroke="#a6a6a6" stroke-width="1.4"/><ellipse cx="964.3" cy="487.7" rx="5.8" ry="3.2" fill="#747474" stroke="#a6a6a6" stroke-width="1.4"/><ellipse cx="1012.7" cy="496.9" rx="5.9" ry="3.2" fill="#747474" stroke="#a6a6a6" stroke-width="1.4"/><ellipse cx="933.1" cy="522.6" rx="4.2" ry="2.3" fill="#747474" stroke="#a6a6a6" stroke-width="1.4"/><ellipse cx="959.9" cy="516.6" rx="6.4" ry="3.5" fill="#747474" stroke="#a6a6a6" stroke-width="1.4"/><ellipse cx="985.0" cy="511.4" rx="3.3" ry="1.8" fill="#747474" stroke="#a6a6a6" stroke-width="1.4"/><ellipse cx="953.2" cy="507.2" rx="5.7" ry="3.1" fill="#747474" stroke="#a6a6a6" stroke-width="1.4"/><ellipse cx="976.7" cy="483.0" rx="5.7" ry="3.2" fill="#747474" stroke="#a6a6a6" stroke-width="1.4"/><ellipse cx="1002.3" cy="517.0" rx="5.5" ry="3.0" fill="#747474" stroke="#a6a6a6" stroke-width="1.4"/><ellipse cx="989.1" cy="522.6" rx="5.9" ry="3.2" fill="#747474" stroke="#a6a6a6" stroke-width="1.4"/><ellipse cx="977.6" cy="518.9" rx="4.0" ry="2.2" fill="#747474" stroke="#a6a6a6" stroke-width="1.4"/><ellipse cx="958.2" cy="494.0" rx="5.1" ry="2.8" fill="#747474" stroke="#a6a6a6" stroke-width="1.4"/><ellipse cx="986.2" cy="510.9" rx="5.9" ry="3.3" fill="#747474" stroke="#a6a6a6" stroke-width="1.4"/><ellipse cx="980.1" cy="512.7" rx="4.3" ry="2.3" fill="#747474" stroke="#a6a6a6" stroke-width="1.4"/><ellipse cx="944.2" cy="510.3" rx="3.7" ry="2.1" fill="#747474" stroke="#a6a6a6" stroke-width="1.4"/><ellipse cx="973.2" cy="482.1" rx="4.6" ry="2.5" fill="#747474" stroke="#a6a6a6" stroke-width="1.4"/><ellipse cx="1011.8" cy="505.9" rx="3.5" ry="1.9" fill="#747474" stroke="#a6a6a6" stroke-width="1.4"/><ellipse cx="994.4" cy="511.7" rx="4.3" ry="2.4" fill="#747474" stroke="#a6a6a6" stroke-width="1.4"/><ellipse cx="1011.1" cy="514.3" rx="3.2" ry="1.7" fill="#747474" stroke="#a6a6a6" stroke-width="1.4"/><ellipse cx="977.4" cy="515.6" rx="6.4" ry="3.5" fill="#747474" stroke="#a6a6a6" stroke-width="1.4"/><ellipse cx="1016.8" cy="516.5" rx="3.6" ry="2.0" fill="#747474" stroke="#a6a6a6" stroke-width="1.4"/><ellipse cx="962.2" cy="528.1" rx="4.6" ry="2.5" fill="#747474" stroke="#a6a6a6" stroke-width="1.4"/><ellipse cx="973.1" cy="531.3" rx="4.5" ry="2.5" fill="#747474" stroke="#a6a6a6" stroke-width="1.4"/><ellipse cx="946.5" cy="508.9" rx="4.5" ry="2.5" fill="#747474" stroke="#a6a6a6" stroke-width="1.4"/><ellipse cx="963.4" cy="504.8" rx="6.4" ry="3.5" fill="#747474" stroke="#a6a6a6" stroke-width="1.4"/><ellipse cx="974.6" cy="526.2" rx="4.2" ry="2.3" fill="#747474" stroke="#a6a6a6" stroke-width="1.4"/><ellipse cx="991.4" cy="479.5" rx="5.4" ry="3.0" fill="#747474" stroke="#a6a6a6" stroke-width="1.4"/><ellipse cx="966.3" cy="496.6" rx="4.4" ry="2.4" fill="#747474" stroke="#a6a6a6" stroke-width="1.4"/><ellipse cx="950.7" cy="483.4" rx="6.2" ry="3.4" fill="#747474" stroke="#a6a6a6" stroke-width="1.4"/><ellipse cx="985.4" cy="491.7" rx="3.4" ry="1.9" fill="#747474" stroke="#a6a6a6" stroke-width="1.4"/><ellipse cx="986.7" cy="509.5" rx="5.7" ry="3.2" fill="#747474" stroke="#a6a6a6" stroke-width="1.4"/><ellipse cx="976.0" cy="497.8" rx="3.6" ry="2.0" fill="#747474" stroke="#a6a6a6" stroke-width="1.4"/><ellipse cx="1011.2" cy="520.4" rx="6.5" ry="3.6" fill="#747474" stroke="#a6a6a6" stroke-width="1.4"/><ellipse cx="973.9" cy="512.7" rx="6.1" ry="3.4" fill="#747474" stroke="#a6a6a6" stroke-width="1.4"/><ellipse cx="1020.8" cy="499.3" rx="3.5" ry="2.0" fill="#747474" stroke="#a6a6a6" stroke-width="1.4"/><ellipse cx="936.4" cy="490.2" rx="5.5" ry="3.0" fill="#747474" stroke="#a6a6a6" stroke-width="1.4"/><ellipse cx="986.2" cy="481.0" rx="4.1" ry="2.3" fill="#747474" stroke="#a6a6a6" stroke-width="1.4"/><ellipse cx="962.6" cy="507.9" rx="3.9" ry="2.2" fill="#747474" stroke="#a6a6a6" stroke-width="1.4"/><ellipse cx="990.9" cy="503.7" rx="3.0" ry="1.7" fill="#747474" stroke="#a6a6a6" stroke-width="1.4"/><ellipse cx="982.2" cy="522.1" rx="6.0" ry="3.3" fill="#747474" stroke="#a6a6a6" stroke-width="1.4"/><ellipse cx="986.5" cy="522.4" rx="3.6" ry="2.0" fill="#747474" stroke="#a6a6a6" stroke-width="1.4"/></g><ellipse cx="971" cy="508" rx="28" ry="14" fill="#858585" stroke="#575757" stroke-width="1.2"/><ellipse cx="971" cy="504.5" rx="16.8" ry="6.3" fill="#999"/><path d="M725.0,521.0 Q729.0,530.3 716.6,536.9 Q710.9,546.0 694.0,547.8 Q680.4,553.7 664.5,550.2 Q647.3,551.1 637.3,543.3 Q622.1,538.9 621.1,529.3 Q612.6,521.0 621.1,512.7 Q622.1,503.1 637.3,498.7 Q647.3,490.9 664.5,491.8 Q680.4,488.3 694.0,494.2 Q710.9,496.0 716.6,505.1 Q729.0,511.7 725.0,521.0z" transform="translate(0,2)" fill="#505050"/><path d="M725.0,521.0 Q729.0,530.3 716.6,536.9 Q710.9,546.0 694.0,547.8 Q680.4,553.7 664.5,550.2 Q647.3,551.1 637.3,543.3 Q622.1,538.9 621.1,529.3 Q612.6,521.0 621.1,512.7 Q622.1,503.1 637.3,498.7 Q647.3,490.9 664.5,491.8 Q680.4,488.3 694.0,494.2 Q710.9,496.0 716.6,505.1 Q729.0,511.7 725.0,521.0z" fill="#8f8f8f" stroke="#575757" stroke-width="1.1"/><clipPath id="oc5"><path d="M725.0,521.0 Q729.0,530.3 716.6,536.9 Q710.9,546.0 694.0,547.8 Q680.4,553.7 664.5,550.2 Q647.3,551.1 637.3,543.3 Q622.1,538.9 621.1,529.3 Q612.6,521.0 621.1,512.7 Q622.1,503.1 637.3,498.7 Q647.3,490.9 664.5,491.8 Q680.4,488.3 694.0,494.2 Q710.9,496.0 716.6,505.1 Q729.0,511.7 725.0,521.0z"/></clipPath><g clip-path="url(#oc5)"><ellipse cx="672" cy="520" rx="47.7" ry="25.075" fill="none" stroke="#9e9e9e" stroke-width="2"/><ellipse cx="678.8" cy="539.5" rx="4.2" ry="2.3" fill="#747474" stroke="#a6a6a6" stroke-width="1.4"/><ellipse cx="684.4" cy="525.0" rx="5.1" ry="2.8" fill="#747474" stroke="#a6a6a6" stroke-width="1.4"/><ellipse cx="677.8" cy="508.6" rx="4.3" ry="2.4" fill="#747474" stroke="#a6a6a6" stroke-width="1.4"/><ellipse cx="698.1" cy="504.0" rx="5.0" ry="2.7" fill="#747474" stroke="#a6a6a6" stroke-width="1.4"/><ellipse cx="682.4" cy="535.3" rx="6.3" ry="3.5" fill="#747474" stroke="#a6a6a6" stroke-width="1.4"/><ellipse cx="692.5" cy="527.2" rx="6.2" ry="3.4" fill="#747474" stroke="#a6a6a6" stroke-width="1.4"/><ellipse cx="704.4" cy="531.5" rx="5.4" ry="3.0" fill="#747474" stroke="#a6a6a6" stroke-width="1.4"/><ellipse cx="708.2" cy="513.7" rx="4.6" ry="2.5" fill="#747474" stroke="#a6a6a6" stroke-width="1.4"/><ellipse cx="662.9" cy="527.3" rx="3.5" ry="1.9" fill="#747474" stroke="#a6a6a6" stroke-width="1.4"/><ellipse cx="655.3" cy="501.2" rx="3.5" ry="1.9" fill="#747474" stroke="#a6a6a6" stroke-width="1.4"/><ellipse cx="647.5" cy="522.1" rx="3.7" ry="2.0" fill="#747474" stroke="#a6a6a6" stroke-width="1.4"/><ellipse cx="645.5" cy="530.2" rx="3.2" ry="1.7" fill="#747474" stroke="#a6a6a6" stroke-width="1.4"/><ellipse cx="695.1" cy="517.8" rx="5.9" ry="3.2" fill="#747474" stroke="#a6a6a6" stroke-width="1.4"/><ellipse cx="675.9" cy="505.8" rx="4.3" ry="2.3" fill="#747474" stroke="#a6a6a6" stroke-width="1.4"/><ellipse cx="688.4" cy="526.8" rx="3.1" ry="1.7" fill="#747474" stroke="#a6a6a6" stroke-width="1.4"/><ellipse cx="658.7" cy="503.7" rx="4.6" ry="2.5" fill="#747474" stroke="#a6a6a6" stroke-width="1.4"/><ellipse cx="648.7" cy="533.4" rx="4.8" ry="2.6" fill="#747474" stroke="#a6a6a6" stroke-width="1.4"/><ellipse cx="695.4" cy="525.0" rx="4.6" ry="2.5" fill="#747474" stroke="#a6a6a6" stroke-width="1.4"/><ellipse cx="631.4" cy="514.9" rx="3.4" ry="1.9" fill="#747474" stroke="#a6a6a6" stroke-width="1.4"/><ellipse cx="673.8" cy="544.0" rx="3.3" ry="1.8" fill="#747474" stroke="#a6a6a6" stroke-width="1.4"/><ellipse cx="659.3" cy="534.9" rx="4.8" ry="2.6" fill="#747474" stroke="#a6a6a6" stroke-width="1.4"/><ellipse cx="676.2" cy="513.6" rx="5.4" ry="3.0" fill="#747474" stroke="#a6a6a6" stroke-width="1.4"/><ellipse cx="674.2" cy="509.7" rx="3.1" ry="1.7" fill="#747474" stroke="#a6a6a6" stroke-width="1.4"/><ellipse cx="652.9" cy="505.0" rx="5.0" ry="2.8" fill="#747474" stroke="#a6a6a6" stroke-width="1.4"/><ellipse cx="703.0" cy="523.8" rx="5.1" ry="2.8" fill="#747474" stroke="#a6a6a6" stroke-width="1.4"/><ellipse cx="658.9" cy="519.7" rx="3.6" ry="2.0" fill="#747474" stroke="#a6a6a6" stroke-width="1.4"/><ellipse cx="670.6" cy="499.4" rx="5.8" ry="3.2" fill="#747474" stroke="#a6a6a6" stroke-width="1.4"/><ellipse cx="690.4" cy="518.2" rx="6.1" ry="3.3" fill="#747474" stroke="#a6a6a6" stroke-width="1.4"/><ellipse cx="673.4" cy="536.6" rx="5.4" ry="3.0" fill="#747474" stroke="#a6a6a6" stroke-width="1.4"/><ellipse cx="670.9" cy="536.1" rx="3.9" ry="2.2" fill="#747474" stroke="#a6a6a6" stroke-width="1.4"/><ellipse cx="692.0" cy="538.4" rx="5.4" ry="3.0" fill="#747474" stroke="#a6a6a6" stroke-width="1.4"/><ellipse cx="690.1" cy="513.2" rx="3.7" ry="2.0" fill="#747474" stroke="#a6a6a6" stroke-width="1.4"/></g><line x1="570" y1="533.8" x2="657" y2="483.8" stroke="#575757" stroke-width="12" stroke-linecap="round"/><line x1="570" y1="533" x2="657" y2="483" stroke="#858585" stroke-width="10" stroke-linecap="round"/><line x1="569.1" y1="531.4" x2="656.1" y2="481.4" stroke="#9b9b9b" stroke-width="6" stroke-linecap="round"/><line x1="568.6" y1="530.5" x2="655.6" y2="480.5" stroke="#adadad" stroke-width="2" stroke-linecap="round"/><ellipse cx="518" cy="570.8" rx="45" ry="21" fill="none" stroke="#575757" stroke-width="8.75"/><ellipse cx="518" cy="570" rx="45" ry="21" fill="none" stroke="#868686" stroke-width="6.75"/><ellipse cx="518" cy="568.65" rx="45" ry="21" fill="none" stroke="#a2a2a2" stroke-width="3.0375"/><ellipse cx="570" cy="531" rx="9" ry="8" fill="#858585" stroke="#575757" stroke-width="1.2"/><ellipse cx="570" cy="529" rx="5.4" ry="3.6" fill="#999"/><path d="M842.0,508.0 L841.7,509.8 L841.0,511.6 L839.7,513.2 L838.0,514.7 L836.0,516.0 L833.8,517.1 L831.4,518.0 L830.5,519.5 L829.7,521.2 L828.6,522.9 L827.0,524.4 L825.1,525.7 L822.8,526.9 L820.3,527.7 L817.5,528.3 L814.7,528.5 L811.8,528.3 L809.0,527.9 L806.4,527.2 L803.9,526.2 L801.8,525.1 L799.6,524.5 L796.8,524.6 L794.0,524.5 L791.2,524.2 L788.5,523.6 L786.0,522.6 L783.8,521.5 L782.0,520.0 L780.6,518.4 L779.7,516.7 L779.3,514.9 L779.4,513.1 L779.9,511.3 L780.8,509.6 L781.9,508.0 L780.8,506.4 L779.9,504.7 L779.4,502.9 L779.3,501.1 L779.7,499.3 L780.6,497.6 L782.0,496.0 L783.8,494.5 L786.0,493.4 L788.5,492.4 L791.2,491.8 L794.0,491.5 L796.8,491.4 L799.6,491.5 L801.8,490.9 L803.9,489.8 L806.4,488.8 L809.0,488.1 L811.8,487.7 L814.7,487.5 L817.5,487.7 L820.3,488.3 L822.8,489.1 L825.1,490.3 L827.0,491.6 L828.6,493.1 L829.7,494.8 L830.5,496.5 L831.4,498.0 L833.8,498.9 L836.0,500.0 L838.0,501.3 L839.7,502.8 L841.0,504.4 L841.7,506.2 L842.0,508.0z" fill="none" stroke="#4f4f4f" stroke-width="6.5" transform="translate(0,1.5)"/><path d="M842.0,508.0 L841.7,509.8 L841.0,511.6 L839.7,513.2 L838.0,514.7 L836.0,516.0 L833.8,517.1 L831.4,518.0 L830.5,519.5 L829.7,521.2 L828.6,522.9 L827.0,524.4 L825.1,525.7 L822.8,526.9 L820.3,527.7 L817.5,528.3 L814.7,528.5 L811.8,528.3 L809.0,527.9 L806.4,527.2 L803.9,526.2 L801.8,525.1 L799.6,524.5 L796.8,524.6 L794.0,524.5 L791.2,524.2 L788.5,523.6 L786.0,522.6 L783.8,521.5 L782.0,520.0 L780.6,518.4 L779.7,516.7 L779.3,514.9 L779.4,513.1 L779.9,511.3 L780.8,509.6 L781.9,508.0 L780.8,506.4 L779.9,504.7 L779.4,502.9 L779.3,501.1 L779.7,499.3 L780.6,497.6 L782.0,496.0 L783.8,494.5 L786.0,493.4 L788.5,492.4 L791.2,491.8 L794.0,491.5 L796.8,491.4 L799.6,491.5 L801.8,490.9 L803.9,489.8 L806.4,488.8 L809.0,488.1 L811.8,487.7 L814.7,487.5 L817.5,487.7 L820.3,488.3 L822.8,489.1 L825.1,490.3 L827.0,491.6 L828.6,493.1 L829.7,494.8 L830.5,496.5 L831.4,498.0 L833.8,498.9 L836.0,500.0 L838.0,501.3 L839.7,502.8 L841.0,504.4 L841.7,506.2 L842.0,508.0z" fill="none" stroke="#858585" stroke-width="4"/><path d="M842.0,508.0 L841.7,509.8 L841.0,511.6 L839.7,513.2 L838.0,514.7 L836.0,516.0 L833.8,517.1 L831.4,518.0 L830.5,519.5 L829.7,521.2 L828.6,522.9 L827.0,524.4 L825.1,525.7 L822.8,526.9 L820.3,527.7 L817.5,528.3 L814.7,528.5 L811.8,528.3 L809.0,527.9 L806.4,527.2 L803.9,526.2 L801.8,525.1 L799.6,524.5 L796.8,524.6 L794.0,524.5 L791.2,524.2 L788.5,523.6 L786.0,522.6 L783.8,521.5 L782.0,520.0 L780.6,518.4 L779.7,516.7 L779.3,514.9 L779.4,513.1 L779.9,511.3 L780.8,509.6 L781.9,508.0 L780.8,506.4 L779.9,504.7 L779.4,502.9 L779.3,501.1 L779.7,499.3 L780.6,497.6 L782.0,496.0 L783.8,494.5 L786.0,493.4 L788.5,492.4 L791.2,491.8 L794.0,491.5 L796.8,491.4 L799.6,491.5 L801.8,490.9 L803.9,489.8 L806.4,488.8 L809.0,488.1 L811.8,487.7 L814.7,487.5 L817.5,487.7 L820.3,488.3 L822.8,489.1 L825.1,490.3 L827.0,491.6 L828.6,493.1 L829.7,494.8 L830.5,496.5 L831.4,498.0 L833.8,498.9 L836.0,500.0 L838.0,501.3 L839.7,502.8 L841.0,504.4 L841.7,506.2 L842.0,508.0z" fill="none" stroke="#a4a4a4" stroke-width="1.4" transform="translate(0,-1)"/><path d="M835.4,508.0 L835.2,509.4 L834.6,510.8 L833.6,512.1 L832.2,513.2 L830.6,514.3 L828.8,515.1 L826.9,515.8 L826.2,517.0 L825.6,518.3 L824.7,519.6 L823.4,520.8 L821.9,521.8 L820.1,522.7 L818.0,523.4 L815.8,523.8 L813.5,524.0 L811.2,523.9 L809.0,523.5 L806.9,523.0 L805.0,522.2 L803.2,521.3 L801.5,520.9 L799.2,521.0 L797.0,520.9 L794.7,520.6 L792.6,520.1 L790.6,519.4 L788.8,518.5 L787.4,517.4 L786.3,516.1 L785.6,514.8 L785.2,513.4 L785.3,511.9 L785.7,510.5 L786.4,509.2 L787.4,508.0 L786.4,506.8 L785.7,505.5 L785.3,504.1 L785.2,502.6 L785.6,501.2 L786.3,499.9 L787.4,498.6 L788.8,497.5 L790.6,496.6 L792.6,495.9 L794.7,495.4 L797.0,495.1 L799.2,495.0 L801.5,495.1 L803.2,494.7 L805.0,493.8 L806.9,493.0 L809.0,492.5 L811.2,492.1 L813.5,492.0 L815.8,492.2 L818.0,492.6 L820.1,493.3 L821.9,494.2 L823.4,495.2 L824.7,496.4 L825.6,497.7 L826.2,499.0 L826.9,500.2 L828.8,500.9 L830.6,501.7 L832.2,502.8 L833.6,503.9 L834.6,505.2 L835.2,506.6 L835.4,508.0z" fill="none" stroke="#5a5a5a" stroke-width="3.5"/><path d="M835.4,508.0 L835.2,509.4 L834.6,510.8 L833.6,512.1 L832.2,513.2 L830.6,514.3 L828.8,515.1 L826.9,515.8 L826.2,517.0 L825.6,518.3 L824.7,519.6 L823.4,520.8 L821.9,521.8 L820.1,522.7 L818.0,523.4 L815.8,523.8 L813.5,524.0 L811.2,523.9 L809.0,523.5 L806.9,523.0 L805.0,522.2 L803.2,521.3 L801.5,520.9 L799.2,521.0 L797.0,520.9 L794.7,520.6 L792.6,520.1 L790.6,519.4 L788.8,518.5 L787.4,517.4 L786.3,516.1 L785.6,514.8 L785.2,513.4 L785.3,511.9 L785.7,510.5 L786.4,509.2 L787.4,508.0 L786.4,506.8 L785.7,505.5 L785.3,504.1 L785.2,502.6 L785.6,501.2 L786.3,499.9 L787.4,498.6 L788.8,497.5 L790.6,496.6 L792.6,495.9 L794.7,495.4 L797.0,495.1 L799.2,495.0 L801.5,495.1 L803.2,494.7 L805.0,493.8 L806.9,493.0 L809.0,492.5 L811.2,492.1 L813.5,492.0 L815.8,492.2 L818.0,492.6 L820.1,493.3 L821.9,494.2 L823.4,495.2 L824.7,496.4 L825.6,497.7 L826.2,499.0 L826.9,500.2 L828.8,500.9 L830.6,501.7 L832.2,502.8 L833.6,503.9 L834.6,505.2 L835.2,506.6 L835.4,508.0z" fill="none" stroke="#8e8e8e" stroke-width="2"/><ellipse cx="811.3" cy="517.3" rx="6.6" ry="4.6" fill="none" stroke="#575757" stroke-width="3.9"/><ellipse cx="811.3" cy="517.3" rx="6.6" ry="4.6" fill="none" stroke="#909090" stroke-width="2.4"/><ellipse cx="795.8" cy="512.3" rx="6.6" ry="4.6" fill="none" stroke="#575757" stroke-width="3.9"/><ellipse cx="795.8" cy="512.3" rx="6.6" ry="4.6" fill="none" stroke="#909090" stroke-width="2.4"/><ellipse cx="798.5" cy="501.3" rx="6.6" ry="4.6" fill="none" stroke="#575757" stroke-width="3.9"/><ellipse cx="798.5" cy="501.3" rx="6.6" ry="4.6" fill="none" stroke="#909090" stroke-width="2.4"/><ellipse cx="815.7" cy="499.6" rx="6.6" ry="4.6" fill="none" stroke="#575757" stroke-width="3.9"/><ellipse cx="815.7" cy="499.6" rx="6.6" ry="4.6" fill="none" stroke="#909090" stroke-width="2.4"/><ellipse cx="823.7" cy="509.5" rx="6.6" ry="4.6" fill="none" stroke="#575757" stroke-width="3.9"/><ellipse cx="823.7" cy="509.5" rx="6.6" ry="4.6" fill="none" stroke="#909090" stroke-width="2.4"/><ellipse cx="809" cy="508" rx="7.26" ry="6.3" fill="#8a8a8a" stroke="#575757" stroke-width="1.2"/><path d="M858.0,510.0 Q859.3,517.1 846.9,521.7 Q836.3,527.1 820.0,526.5 Q803.7,527.1 793.1,521.7 Q780.7,517.1 782.0,510.0 Q780.7,502.9 793.1,498.3 Q803.7,492.9 820.0,493.5 Q836.3,492.9 846.9,498.3 Q859.3,502.9 858.0,510.0z" transform="translate(0,2)" fill="#505050"/><path d="M858.0,510.0 Q859.3,517.1 846.9,521.7 Q836.3,527.1 820.0,526.5 Q803.7,527.1 793.1,521.7 Q780.7,517.1 782.0,510.0 Q780.7,502.9 793.1,498.3 Q803.7,492.9 820.0,493.5 Q836.3,492.9 846.9,498.3 Q859.3,502.9 858.0,510.0z" fill="#8f8f8f" stroke="#575757" stroke-width="1.1"/><polygon points="724,539 753,539 753,556 724,556" fill="#8c8c8c" stroke="#575757" stroke-width="1.2"/><line x1="721" y1="522.8" x2="766" y2="546.8" stroke="#575757" stroke-width="18" stroke-linecap="round"/><line x1="721" y1="522" x2="766" y2="546" stroke="#858585" stroke-width="16" stroke-linecap="round"/><line x1="722.4" y1="519.5" x2="767.4" y2="543.5" stroke="#9b9b9b" stroke-width="9.6" stroke-linecap="round"/><line x1="723.2" y1="517.9" x2="768.2" y2="541.9" stroke="#adadad" stroke-width="3.2" stroke-linecap="round"/><line x1="828" y1="483.8" x2="876" y2="589.8" stroke="#575757" stroke-width="16" stroke-linecap="round"/><line x1="828" y1="483" x2="876" y2="589" stroke="#858585" stroke-width="14" stroke-linecap="round"/><line x1="830.3" y1="482.0" x2="878.3" y2="588.0" stroke="#9b9b9b" stroke-width="8.4" stroke-linecap="round"/><line x1="831.7" y1="481.3" x2="879.7" y2="587.3" stroke="#adadad" stroke-width="2.8" stroke-linecap="round"/><ellipse cx="905" cy="551.8" rx="22" ry="10" fill="none" stroke="#575757" stroke-width="7.4"/><ellipse cx="905" cy="551" rx="22" ry="10" fill="none" stroke="#868686" stroke-width="5.4"/><ellipse cx="905" cy="549.92" rx="22" ry="10" fill="none" stroke="#a2a2a2" stroke-width="2.43"/><ellipse cx="948" cy="553.8" rx="22" ry="10" fill="none" stroke="#575757" stroke-width="7.4"/><ellipse cx="948" cy="553" rx="22" ry="10" fill="none" stroke="#868686" stroke-width="5.4"/><ellipse cx="948" cy="551.92" rx="22" ry="10" fill="none" stroke="#a2a2a2" stroke-width="2.43"/><line x1="803" y1="564.8" x2="956" y2="574.8" stroke="#575757" stroke-width="16" stroke-linecap="round"/><line x1="803" y1="564" x2="956" y2="574" stroke="#858585" stroke-width="14" stroke-linecap="round"/><line x1="803.2" y1="561.5" x2="956.2" y2="571.5" stroke="#9b9b9b" stroke-width="8.4" stroke-linecap="round"/><line x1="803.3" y1="560.0" x2="956.3" y2="570.0" stroke="#adadad" stroke-width="2.8" stroke-linecap="round"/><ellipse cx="1002" cy="579.8" rx="43" ry="29" fill="none" stroke="#575757" stroke-width="10.1"/><ellipse cx="1002" cy="579" rx="43" ry="29" fill="none" stroke="#868686" stroke-width="8.1"/><ellipse cx="1002" cy="577.38" rx="43" ry="29" fill="none" stroke="#a2a2a2" stroke-width="3.645"/><polygon points="806,552 831,552 831,580 806,580" fill="#8c8c8c" stroke="#575757" stroke-width="1.2"/><polygon points="713,575 742,567 750,590 720,596" fill="#8c8c8c" stroke="#575757" stroke-width="1.2"/><line x1="818" y1="511.8" x2="747" y2="601.8" stroke="#575757" stroke-width="15" stroke-linecap="round"/><line x1="818" y1="511" x2="747" y2="601" stroke="#858585" stroke-width="13" stroke-linecap="round"/><line x1="816.2" y1="509.6" x2="745.2" y2="599.6" stroke="#9b9b9b" stroke-width="7.8" stroke-linecap="round"/><line x1="815.1" y1="508.7" x2="744.1" y2="598.7" stroke="#adadad" stroke-width="2.6" stroke-linecap="round"/><line x1="781" y1="555.8" x2="840" y2="586.8" stroke="#575757" stroke-width="14" stroke-linecap="round"/><line x1="781" y1="555" x2="840" y2="586" stroke="#858585" stroke-width="12" stroke-linecap="round"/><line x1="782.0" y1="553.1" x2="841.0" y2="584.1" stroke="#9b9b9b" stroke-width="7.2" stroke-linecap="round"/><line x1="782.6" y1="551.9" x2="841.6" y2="582.9" stroke="#adadad" stroke-width="2.4" stroke-linecap="round"/><ellipse cx="929" cy="617.8" rx="33" ry="15" fill="none" stroke="#575757" stroke-width="8.75"/><ellipse cx="929" cy="617" rx="33" ry="15" fill="none" stroke="#868686" stroke-width="6.75"/><ellipse cx="929" cy="615.65" rx="33" ry="15" fill="none" stroke="#a2a2a2" stroke-width="3.0375"/><polygon points="606,562 652,562 652,584 606,584" fill="#8c8c8c" stroke="#575757" stroke-width="1.2"/><line x1="597" y1="557.8" x2="598" y2="674.8" stroke="#575757" stroke-width="16" stroke-linecap="round"/><line x1="597" y1="557" x2="598" y2="674" stroke="#858585" stroke-width="14" stroke-linecap="round"/><line x1="599.5" y1="557.0" x2="600.5" y2="674.0" stroke="#9b9b9b" stroke-width="8.4" stroke-linecap="round"/><line x1="601.0" y1="557.0" x2="602.0" y2="674.0" stroke="#adadad" stroke-width="2.8" stroke-linecap="round"/><path d="M662.0,712.0 L661.6,714.7 L660.3,717.3 L658.3,719.8 L655.6,722.2 L652.3,724.3 L648.4,726.1 L644.2,727.7 L639.7,729.0 L635.1,730.0 L633.0,732.2 L630.4,734.4 L627.1,736.4 L623.3,738.3 L619.0,739.9 L614.2,741.2 L609.0,742.2 L603.6,742.8 L598.0,743.0 L592.4,742.8 L587.0,742.2 L581.8,741.2 L577.0,739.9 L572.7,738.3 L568.9,736.4 L565.6,734.4 L563.0,732.2 L560.9,730.0 L556.3,729.0 L551.8,727.7 L547.6,726.1 L543.7,724.3 L540.4,722.2 L537.7,719.8 L535.7,717.3 L534.4,714.7 L534.0,712.0 L534.4,709.3 L535.7,706.7 L537.7,704.2 L540.4,701.8 L543.7,699.7 L547.6,697.9 L551.8,696.3 L556.3,695.0 L560.9,694.0 L563.0,691.8 L565.6,689.6 L568.9,687.6 L572.7,685.7 L577.0,684.1 L581.8,682.8 L587.0,681.8 L592.4,681.2 L598.0,681.0 L603.6,681.2 L609.0,681.8 L614.2,682.8 L619.0,684.1 L623.3,685.7 L627.1,687.6 L630.4,689.6 L633.0,691.8 L635.1,694.0 L639.7,695.0 L644.2,696.3 L648.4,697.9 L652.3,699.7 L655.6,701.8 L658.3,704.2 L660.3,706.7 L661.6,709.3 L662.0,712.0z" fill="none" stroke="#4f4f4f" stroke-width="8.5" transform="translate(0,1.5)"/><path d="M662.0,712.0 L661.6,714.7 L660.3,717.3 L658.3,719.8 L655.6,722.2 L652.3,724.3 L648.4,726.1 L644.2,727.7 L639.7,729.0 L635.1,730.0 L633.0,732.2 L630.4,734.4 L627.1,736.4 L623.3,738.3 L619.0,739.9 L614.2,741.2 L609.0,742.2 L603.6,742.8 L598.0,743.0 L592.4,742.8 L587.0,742.2 L581.8,741.2 L577.0,739.9 L572.7,738.3 L568.9,736.4 L565.6,734.4 L563.0,732.2 L560.9,730.0 L556.3,729.0 L551.8,727.7 L547.6,726.1 L543.7,724.3 L540.4,722.2 L537.7,719.8 L535.7,717.3 L534.4,714.7 L534.0,712.0 L534.4,709.3 L535.7,706.7 L537.7,704.2 L540.4,701.8 L543.7,699.7 L547.6,697.9 L551.8,696.3 L556.3,695.0 L560.9,694.0 L563.0,691.8 L565.6,689.6 L568.9,687.6 L572.7,685.7 L577.0,684.1 L581.8,682.8 L587.0,681.8 L592.4,681.2 L598.0,681.0 L603.6,681.2 L609.0,681.8 L614.2,682.8 L619.0,684.1 L623.3,685.7 L627.1,687.6 L630.4,689.6 L633.0,691.8 L635.1,694.0 L639.7,695.0 L644.2,696.3 L648.4,697.9 L652.3,699.7 L655.6,701.8 L658.3,704.2 L660.3,706.7 L661.6,709.3 L662.0,712.0z" fill="none" stroke="#858585" stroke-width="6"/><path d="M662.0,712.0 L661.6,714.7 L660.3,717.3 L658.3,719.8 L655.6,722.2 L652.3,724.3 L648.4,726.1 L644.2,727.7 L639.7,729.0 L635.1,730.0 L633.0,732.2 L630.4,734.4 L627.1,736.4 L623.3,738.3 L619.0,739.9 L614.2,741.2 L609.0,742.2 L603.6,742.8 L598.0,743.0 L592.4,742.8 L587.0,742.2 L581.8,741.2 L577.0,739.9 L572.7,738.3 L568.9,736.4 L565.6,734.4 L563.0,732.2 L560.9,730.0 L556.3,729.0 L551.8,727.7 L547.6,726.1 L543.7,724.3 L540.4,722.2 L537.7,719.8 L535.7,717.3 L534.4,714.7 L534.0,712.0 L534.4,709.3 L535.7,706.7 L537.7,704.2 L540.4,701.8 L543.7,699.7 L547.6,697.9 L551.8,696.3 L556.3,695.0 L560.9,694.0 L563.0,691.8 L565.6,689.6 L568.9,687.6 L572.7,685.7 L577.0,684.1 L581.8,682.8 L587.0,681.8 L592.4,681.2 L598.0,681.0 L603.6,681.2 L609.0,681.8 L614.2,682.8 L619.0,684.1 L623.3,685.7 L627.1,687.6 L630.4,689.6 L633.0,691.8 L635.1,694.0 L639.7,695.0 L644.2,696.3 L648.4,697.9 L652.3,699.7 L655.6,701.8 L658.3,704.2 L660.3,706.7 L661.6,709.3 L662.0,712.0z" fill="none" stroke="#a4a4a4" stroke-width="2.1" transform="translate(0,-1.5)"/><path d="M649.2,712.0 L648.9,714.1 L647.9,716.2 L646.3,718.1 L644.1,719.9 L641.4,721.6 L638.3,723.0 L635.0,724.2 L631.4,725.2 L627.7,726.0 L626.0,727.8 L623.9,729.5 L621.3,731.1 L618.2,732.5 L614.8,733.8 L610.9,734.8 L606.8,735.6 L602.5,736.0 L598.0,736.2 L593.5,736.0 L589.2,735.6 L585.1,734.8 L581.2,733.8 L577.8,732.5 L574.7,731.1 L572.1,729.5 L570.0,727.8 L568.3,726.0 L564.6,725.2 L561.0,724.2 L557.7,723.0 L554.6,721.6 L551.9,719.9 L549.7,718.1 L548.1,716.2 L547.1,714.1 L546.8,712.0 L547.1,709.9 L548.1,707.8 L549.7,705.9 L551.9,704.1 L554.6,702.4 L557.7,701.0 L561.0,699.8 L564.6,698.8 L568.3,698.0 L570.0,696.2 L572.1,694.5 L574.7,692.9 L577.8,691.5 L581.2,690.2 L585.1,689.2 L589.2,688.4 L593.5,688.0 L598.0,687.8 L602.5,688.0 L606.8,688.4 L610.9,689.2 L614.8,690.2 L618.2,691.5 L621.3,692.9 L623.9,694.5 L626.0,696.2 L627.7,698.0 L631.4,698.8 L635.0,699.8 L638.3,701.0 L641.4,702.4 L644.1,704.1 L646.3,705.9 L647.9,707.8 L648.9,709.9 L649.2,712.0z" fill="none" stroke="#5a5a5a" stroke-width="4.5"/><path d="M649.2,712.0 L648.9,714.1 L647.9,716.2 L646.3,718.1 L644.1,719.9 L641.4,721.6 L638.3,723.0 L635.0,724.2 L631.4,725.2 L627.7,726.0 L626.0,727.8 L623.9,729.5 L621.3,731.1 L618.2,732.5 L614.8,733.8 L610.9,734.8 L606.8,735.6 L602.5,736.0 L598.0,736.2 L593.5,736.0 L589.2,735.6 L585.1,734.8 L581.2,733.8 L577.8,732.5 L574.7,731.1 L572.1,729.5 L570.0,727.8 L568.3,726.0 L564.6,725.2 L561.0,724.2 L557.7,723.0 L554.6,721.6 L551.9,719.9 L549.7,718.1 L548.1,716.2 L547.1,714.1 L546.8,712.0 L547.1,709.9 L548.1,707.8 L549.7,705.9 L551.9,704.1 L554.6,702.4 L557.7,701.0 L561.0,699.8 L564.6,698.8 L568.3,698.0 L570.0,696.2 L572.1,694.5 L574.7,692.9 L577.8,691.5 L581.2,690.2 L585.1,689.2 L589.2,688.4 L593.5,688.0 L598.0,687.8 L602.5,688.0 L606.8,688.4 L610.9,689.2 L614.8,690.2 L618.2,691.5 L621.3,692.9 L623.9,694.5 L626.0,696.2 L627.7,698.0 L631.4,698.8 L635.0,699.8 L638.3,701.0 L641.4,702.4 L644.1,704.1 L646.3,705.9 L647.9,707.8 L648.9,709.9 L649.2,712.0z" fill="none" stroke="#8e8e8e" stroke-width="3"/><ellipse cx="598.0" cy="726.0" rx="12.8" ry="6.8" fill="none" stroke="#575757" stroke-width="5.1"/><ellipse cx="598.0" cy="726.0" rx="12.8" ry="6.8" fill="none" stroke="#909090" stroke-width="3.6"/><ellipse cx="569.2" cy="712.0" rx="12.8" ry="6.8" fill="none" stroke="#575757" stroke-width="5.1"/><ellipse cx="569.2" cy="712.0" rx="12.8" ry="6.8" fill="none" stroke="#909090" stroke-width="3.6"/><ellipse cx="598.0" cy="698.0" rx="12.8" ry="6.8" fill="none" stroke="#575757" stroke-width="5.1"/><ellipse cx="598.0" cy="698.0" rx="12.8" ry="6.8" fill="none" stroke="#909090" stroke-width="3.6"/><ellipse cx="626.8" cy="712.0" rx="12.8" ry="6.8" fill="none" stroke="#575757" stroke-width="5.1"/><ellipse cx="626.8" cy="712.0" rx="12.8" ry="6.8" fill="none" stroke="#909090" stroke-width="3.6"/><ellipse cx="598" cy="712" rx="14.08" ry="9.3" fill="#8a8a8a" stroke="#575757" stroke-width="1.2"/><ellipse cx="597" cy="676" rx="15" ry="11" fill="#858585" stroke="#575757" stroke-width="1.2"/><ellipse cx="597" cy="673.25" rx="9" ry="4.95" fill="#999"/></g><line x1="760" y1="169" x2="765" y2="700" stroke="#111" stroke-width="1.2"/><circle cx="760" cy="244" r="1.8" fill="#111"/><polygon points="1292,188 1400,300 1420,395 1399,404 1348,486" fill="#000"/><g stroke="#111" stroke-width="1.1" fill="none"><polyline points="1432,404 1340,573 1565,541"/><line x1="1340" y1="573" x2="1506" y2="913"/><line x1="1482" y1="404" x2="1565" y2="578"/><line x1="1375" y1="404" x2="1555" y2="404" stroke-opacity="0"/></g><line x1="765" y1="700" x2="765" y2="650" stroke="#3f8ae6" stroke-width="2"/><path d="M759,652 L765,637 L771,652 z" fill="#3f8ae6"/><line x1="780" y1="710" x2="840" y2="699" stroke="#7fd15a" stroke-width="2"/><path d="M836,693 L852,698 L838,705 z" fill="#7fd15a"/><line x1="772" y1="724" x2="793" y2="758" stroke="#e4505c" stroke-width="2"/><circle cx="794" cy="761" r="4" fill="#e4505c"/><polygon points="802,667 811,665 812,674 803,676" fill="#d88080" fill-opacity="0.75"/><rect x="816" y="727" width="11" height="7" fill="#5a8ad8" fill-opacity="0.8"/><circle cx="765.5" cy="714" r="15.5" fill="none" stroke="#eee" stroke-width="1.6"/><circle cx="765" cy="700" r="8" fill="none" stroke="#d43" stroke-width="1.6" stroke-dasharray="2.5,2"/><circle cx="765" cy="713" r="3" fill="#e69a3a"/><path d="M752,702 l8,-6 M770,696 l10,4 M756,708 l-4,2" stroke="#111" stroke-width="1"/></g></svg><div class="a" style="left:2px;top:50px;width:1583px;height:25px;background:rgba(54,54,54,0.9);border-radius:6px 6px 0 0;"></div><div class="a" style="left:2px;top:75px;width:1583px;height:26px;background:rgba(50,50,50,0.25);border-radius:0px;"></div><div class="a" style="left:10px;top:53px;width:30px;height:18.5px;background:#1e1e1e;border-radius:4px;"></div><div class="a" style="left:47.5px;top:53px;width:107.5px;height:18.5px;background:#1e1e1e;border-radius:4px;"></div><div class="t" style="left:72px;top:56.316px;font-size:11.6px;color:#e0e0e0;font-weight:normal;">Edit Mode</div><div class="a" style="left:162px;top:53px;width:19.5px;height:18.5px;background:#545454;border-radius:4px 0 0 4px;"></div><div class="a" style="left:181.5px;top:53px;width:19.5px;height:18.5px;background:#545454;border-radius:0px;"></div><div class="a" style="left:201px;top:53px;width:19px;height:18.5px;background:#4772b3;border-radius:0 4px 4px 0;"></div><div class="t" style="left:233px;top:56.316px;font-size:11.6px;color:#dcdcdc;font-weight:normal;">View</div><div class="t" style="left:274px;top:56.316px;font-size:11.6px;color:#dcdcdc;font-weight:normal;">Select</div><div class="t" style="left:322px;top:56.316px;font-size:11.6px;color:#dcdcdc;font-weight:normal;">Add</div><div class="t" style="left:359px;top:56.316px;font-size:11.6px;color:#dcdcdc;font-weight:normal;">Mesh</div><div class="t" style="left:403px;top:56.316px;font-size:11.6px;color:#dcdcdc;font-weight:normal;">Vertex</div><div class="t" style="left:453px;top:56.316px;font-size:11.6px;color:#dcdcdc;font-weight:normal;">Edge</div><div class="t" style="left:495px;top:56.316px;font-size:11.6px;color:#dcdcdc;font-weight:normal;">Face</div><div class="t" style="left:535px;top:56.316px;font-size:11.6px;color:#dcdcdc;font-weight:normal;">UV</div><div class="a" style="left:561px;top:53px;width:29px;height:18.5px;background:#1e1e1e;border-radius:4px;"></div><div class="a" style="left:662.5px;top:53px;width:77px;height:18.5px;background:#1e1e1e;border-radius:4px;"></div><div class="t" style="left:687px;top:56.316px;font-size:11.6px;color:#e0e0e0;font-weight:normal;">Global</div><div class="a" style="left:747.5px;top:53px;width:28.5px;height:18.5px;background:#1e1e1e;border-radius:4px;"></div><div class="a" style="left:784.5px;top:53px;width:61px;height:18.5px;background:#1e1e1e;border-radius:4px;"></div><div class="a" style="left:784.5px;top:53px;width:18px;height:18.5px;background:#545454;border-radius:4px 0 0 4px;"></div><div class="t" style="left:810px;top:56.316px;font-size:11.6px;color:#e0e0e0;font-weight:normal;">Mix</div><div class="a" style="left:853px;top:53px;width:49.5px;height:18.5px;background:#1e1e1e;border-radius:4px;"></div><div class="a" style="left:853px;top:53px;width:18px;height:18.5px;background:#545454;border-radius:4px 0 0 4px;"></div><div class="a" style="left:1298px;top:53px;width:30px;height:18.5px;background:#1e1e1e;border-radius:4px;"></div><div class="a" style="left:1335px;top:53px;width:37.5px;height:18.5px;background:#1e1e1e;border-radius:4px;"></div><div class="a" style="left:1335px;top:53px;width:18px;height:18.5px;background:#4772b3;border-radius:4px 0 0 4px;"></div><div class="a" style="left:1380px;top:53px;width:70px;height:18.5px;background:#1e1e1e;border-radius:4px;"></div><div class="a" style="left:1380px;top:53px;width:18px;height:18.5px;background:#4772b3;border-radius:4px 0 0 4px;"></div><div class="a" style="left:1457px;top:53px;width:18px;height:18.5px;background:#545454;border-radius:4px;"></div><div class="a" style="left:1482px;top:53px;width:95px;height:18.5px;background:#1e1e1e;border-radius:4px;"></div><div class="a" style="left:1482px;top:53px;width:18px;height:18.5px;background:#545454;border-radius:4px 0 0 4px;"></div><div class="a" style="left:1500px;top:53px;width:19px;height:18.5px;background:#4772b3;border-radius:0px;"></div><div class="a" style="left:1519px;top:53px;width:19px;height:18.5px;background:#545454;border-radius:0px;"></div><div class="a" style="left:1538px;top:53px;width:19px;height:18.5px;background:#545454;border-radius:0px;"></div><svg class="a" style="left:0px;top:50px;" width="1600" height="25" viewBox="0 50 1600 25"><path d="M31,60.9 l3,3 l3,-3" fill="none" stroke="#cfcfcf" stroke-width="1.3"/><path d="M15,66 h14 M16,61 h12 M18,58 v10 M25,58 v10" stroke="#ccc" stroke-width="1.2"/><circle cx="24" cy="58" r="3.5" fill="#ddd"/><rect x="54" y="56" width="12" height="12" fill="none" stroke="#bbb" stroke-width="1.1" stroke-dasharray="3,3"/><rect x="63" y="55" width="4" height="4" fill="#eee"/><path d="M146,60.9 l3,3 l3,-3" fill="none" stroke="#cfcfcf" stroke-width="1.3"/><path d="M166,58 h8 l3,3 v6 h-11 z" fill="none" stroke="#ddd" stroke-width="1.2"/><rect x="165" y="59" width="3" height="3" fill="#eee"/><path d="M186,67 v-8 l3,-3 h8 v11" fill="none" stroke="#ddd" stroke-width="1.2"/><rect x="189" y="60" width="3" height="8" fill="#eee"/><rect x="204" y="59" width="9" height="9" fill="#fff"/><path d="M206,59 l3,-3 h8 v8 l-3,3" fill="none" stroke="#fff" stroke-width="1.2"/><rect x="566" y="57" width="11" height="11" fill="none" stroke="#777" stroke-width="1"/><path d="M570,68 q0,-6 6,-6" stroke="#999" fill="none"/><path d="M581,60.9 l3,3 l3,-3" fill="none" stroke="#cfcfcf" stroke-width="1.3"/><path d="M669,56 v12 h13 M669,68 l8,-8 M666,59 l3,-3 l3,3 M679,65 l3,3 l-3,3" fill="none" stroke="#ddd" stroke-width="1.1"/><path d="M730,60.9 l3,3 l3,-3" fill="none" stroke="#cfcfcf" stroke-width="1.3"/><circle cx="756" cy="64" r="4" fill="none" stroke="#ddd" stroke-width="1.2"/><circle cx="760" cy="60" r="4" fill="none" stroke="#ddd" stroke-width="1.2"/><circle cx="758" cy="62" r="1.2" fill="#fff"/><path d="M768,60.9 l3,3 l3,-3" fill="none" stroke="#cfcfcf" stroke-width="1.3"/><path d="M788,60 a5,5 0 0 1 10,0 v3 M792,63 v-3 a1.5,1.5 0 0 1 3,0" fill="none" stroke="#bbb" stroke-width="1.4"/><path d="M836,60.9 l3,3 l3,-3" fill="none" stroke="#cfcfcf" stroke-width="1.3"/><circle cx="862" cy="62" r="5.5" fill="none" stroke="#999" stroke-width="1.1"/><circle cx="862" cy="62" r="1.5" fill="#ddd"/><path d="M877,68 q5,0 6,-6 q1,-6 3,-6 q2,0 3,6 q1,6 6,6" fill="none" stroke="#bbb" stroke-width="1.1"/><path d="M1301,66 l2,-7 l5,4 z" fill="#eee"/><ellipse cx="1308" cy="59" rx="5" ry="3" fill="none" stroke="#eee" stroke-width="1.2"/><circle cx="1308" cy="59" r="1.5" fill="#eee"/><path d="M1319,60.9 l3,3 l3,-3" fill="none" stroke="#cfcfcf" stroke-width="1.3"/><path d="M1340,68 q2,-10 10,-12 M1346,56 h5 v5" fill="none" stroke="#fff" stroke-width="1.2"/><circle cx="1340" cy="67" r="1.8" fill="none" stroke="#fff"/><path d="M1360,60.9 l3,3 l3,-3" fill="none" stroke="#cfcfcf" stroke-width="1.3"/><circle cx="1391" cy="60" r="5" fill="#fff"/><path d="M1385,62 a5,5 0 1 0 8,4" fill="none" stroke="#fff" stroke-width="1.2"/><path d="M1405,60.9 l3,3 l3,-3" fill="none" stroke="#cfcfcf" stroke-width="1.3"/><rect x="1421" y="56" width="10" height="11" fill="none" stroke="#ccc" stroke-width="1" stroke-dasharray="2,2"/><rect x="1431" y="55" width="4" height="4" fill="#eee"/><path d="M1440,60.9 l3,3 l3,-3" fill="none" stroke="#cfcfcf" stroke-width="1.3"/><rect x="1461" y="58" width="9" height="9" fill="none" stroke="#ddd" stroke-width="1.1"/><path d="M1463,58 v-2 h9 v9 h-2" fill="none" stroke="#ddd"/><circle cx="1491" cy="62" r="6" fill="none" stroke="#ddd" stroke-width="1.1"/><path d="M1485,62 h12 M1491,56 v12" stroke="#ddd" stroke-width="1"/><ellipse cx="1491" cy="62" rx="3" ry="6" fill="none" stroke="#ddd" stroke-width="1"/><circle cx="1509.5" cy="62" r="6" fill="#fff"/><circle cx="1528.5" cy="62" r="6" fill="none" stroke="#ddd" stroke-width="1.1"/><path d="M1528.5,56 a6,6 0 0 0 0,12 z" fill="#ddd"/><circle cx="1547.5" cy="62" r="6" fill="none" stroke="#ddd" stroke-width="1.1"/><path d="M1564,60.9 l3,3 l3,-3" fill="none" stroke="#cfcfcf" stroke-width="1.3"/></svg><div class="t" style="left:9px;top:82.316px;font-size:11.6px;color:#c8c8c8;font-weight:normal;">Orientation:</div><div class="a" style="left:75px;top:79px;width:97.5px;height:18px;background:#1e1e1e;border-radius:4px;"></div><div class="t" style="left:100px;top:82.316px;font-size:11.6px;color:#e0e0e0;font-weight:normal;">Default</div><div class="t" style="left:187.5px;top:82.316px;font-size:11.6px;color:#c8c8c8;font-weight:normal;">Drag:</div><div class="a" style="left:225px;top:79px;width:74.5px;height:18px;background:#1e1e1e;border-radius:4px;"></div><div class="t" style="left:232px;top:82.316px;font-size:11.6px;color:#e0e0e0;font-weight:normal;">Select Box</div><div class="a" style="left:1433px;top:79px;width:49px;height:18px;background:#474747;border-radius:4px;"></div><div class="a" style="left:1449px;top:79px;width:1px;height:18px;background:#383838;border-radius:0px;"></div><div class="a" style="left:1465.5px;top:79px;width:1px;height:18px;background:#383838;border-radius:0px;"></div><div class="t" style="left:1441px;top:82.316px;width:0;font-size:11.6px;color:#e0e0e0;font-weight:normal;"><span style="position:absolute;left:0;transform:translateX(-50%)">X</span></div><div class="t" style="left:1457.5px;top:82.316px;width:0;font-size:11.6px;color:#e0e0e0;font-weight:normal;"><span style="position:absolute;left:0;transform:translateX(-50%)">Y</span></div><div class="t" style="left:1474px;top:82.316px;width:0;font-size:11.6px;color:#e0e0e0;font-weight:normal;"><span style="position:absolute;left:0;transform:translateX(-50%)">Z</span></div><div class="a" style="left:1489px;top:79px;width:17.7px;height:18px;background:#454545;border-radius:4px;"></div><div class="a" style="left:1514px;top:79px;width:63.5px;height:18px;background:#1e1e1e;border-radius:4px;"></div><div class="t" style="left:1521px;top:82.316px;font-size:11.6px;color:#e0e0e0;font-weight:normal;">Options</div><svg class="a" style="left:0px;top:75px;" width="1600" height="26" viewBox="0 75 1600 26"><path d="M163,86.4 l3,3 l3,-3" fill="none" stroke="#cfcfcf" stroke-width="1.3"/><path d="M290,86.4 l3,3 l3,-3" fill="none" stroke="#cfcfcf" stroke-width="1.3"/><path d="M1568,86.4 l3,3 l3,-3" fill="none" stroke="#cfcfcf" stroke-width="1.3"/><path d="M82,83 v6 M80,85 l2,-2 l2,2 M84,92 h7 l-2,-2 M89,94 l2,-2" fill="none" stroke="#ccc" stroke-width="1"/><circle cx="82" cy="91" r="2" fill="#ddd"/><path d="M1420,84 q-6,0 -5,4 q-1,4 5,4 M1424,84 q6,0 5,4 q1,4 -5,4 M1422,81 v14" fill="none" stroke="#bbb" stroke-width="1" stroke-dasharray="2,1"/><rect x="1492" y="90" width="3" height="3" fill="none" stroke="#888"/><rect x="1500" y="82" width="3" height="3" fill="none" stroke="#888"/></svg><div class="t" style="left:65px;top:111.61px;font-size:11px;color:#f0f0f0;font-weight:bold;">User Perspective</div><div class="t" style="left:65px;top:129.61px;font-size:11px;color:#f0f0f0;font-weight:bold;">(0) Plane</div><div class="a" style="left:9px;top:109.7px;width:38.4px;height:67.8px;background:#232323;border-radius:5px;"></div><div class="a" style="left:9px;top:142.6px;width:38.4px;height:1px;background:#2c2c2c;border-radius:0px;"></div><div class="a" style="left:9px;top:185px;width:38.4px;height:138px;background:#232323;border-radius:5px;"></div><div class="a" style="left:9px;top:218px;width:38.4px;height:1px;background:#2c2c2c;border-radius:0px;"></div><div class="a" style="left:9px;top:252px;width:38.4px;height:1px;background:#2c2c2c;border-radius:0px;"></div><div class="a" style="left:9px;top:288px;width:38.4px;height:1px;background:#2c2c2c;border-radius:0px;"></div><div class="a" style="left:9px;top:330px;width:38.4px;height:67.7px;background:#232323;border-radius:5px;"></div><div class="a" style="left:9px;top:363.6px;width:38.4px;height:1px;background:#2c2c2c;border-radius:0px;"></div><div class="a" style="left:9px;top:405px;width:38.4px;height:33px;background:#232323;border-radius:5px;"></div><div class="a" style="left:9px;top:444px;width:38.4px;height:419px;background:#232323;border-radius:5px;"></div><div class="a" style="left:9px;top:478.5px;width:38.4px;height:1px;background:#2c2c2c;border-radius:0px;"></div><div class="a" style="left:9px;top:513px;width:38.4px;height:1px;background:#2c2c2c;border-radius:0px;"></div><div class="a" style="left:9px;top:548px;width:38.4px;height:1px;background:#2c2c2c;border-radius:0px;"></div><div class="a" style="left:9px;top:583px;width:38.4px;height:1px;background:#2c2c2c;border-radius:0px;"></div><div class="a" style="left:9px;top:618.6px;width:38.4px;height:1px;background:#2c2c2c;border-radius:0px;"></div><div class="a" style="left:9px;top:653.6px;width:38.4px;height:1px;background:#2c2c2c;border-radius:0px;"></div><div class="a" style="left:9px;top:689px;width:38.4px;height:1px;background:#2c2c2c;border-radius:0px;"></div><div class="a" style="left:9px;top:724px;width:38.4px;height:1px;background:#2c2c2c;border-radius:0px;"></div><div class="a" style="left:9px;top:758.5px;width:38.4px;height:1px;background:#2c2c2c;border-radius:0px;"></div><div class="a" style="left:9px;top:793px;width:38.4px;height:1px;background:#2c2c2c;border-radius:0px;"></div><div class="a" style="left:9px;top:828px;width:38.4px;height:1px;background:#2c2c2c;border-radius:0px;"></div><div class="a" style="left:9px;top:869px;width:38.4px;height:44px;background:#232323;border-radius:5px;"></div><div class="a" style="left:9px;top:904px;width:38.4px;height:1px;background:#2c2c2c;border-radius:0px;"></div><div class="a" style="left:9px;top:185px;width:38.4px;height:33px;background:#4772b3;border-radius:5px 5px 0 0;"></div><div class="a" style="left:9px;top:880px;width:38.4px;height:33px;background:#232323;border-radius:0px;"></div><svg class="a" style="left:0px;top:100px;" width="60" height="813" viewBox="0 100 60 813"><rect x="20" y="117" width="15" height="15" fill="none" stroke="#d8a050" stroke-width="1.2" stroke-dasharray="2.5,2"/><path d="M25,120 l7,5 l-3,1 l2,3 l-1,1 l-2,-3 l-2,2 z" fill="#fff"/><circle cx="28" cy="160" r="8" fill="none" stroke="#e0e0e0" stroke-width="1.5" stroke-dasharray="3,2"/><path d="M28,154 v4 M28,162 v4 M22,160 h4 M30,160 h4" stroke="#ddd" stroke-width="1"/><path d="M28,192 v17 M19.5,200.5 h17" stroke="#fff" stroke-width="1.4" stroke-dasharray="2.5,2"/><path d="M25,195 l3,-4 l3,4 z M25,206 l3,4 l3,-4 z M22,197.5 l-4,3 l4,3 z M34,197.5 l4,3 l-4,3 z" fill="#fff"/><path d="M20,232 a8.5,8.5 0 0 1 16,-1 M36,239 a8.5,8.5 0 0 1 -16,1" fill="none" stroke="#ddd" stroke-width="1.3"/><rect x="25" y="232.5" width="6" height="6" transform="rotate(45 28 235.5)" fill="#ddd"/><rect x="19" y="272" width="10" height="10" fill="#e8e8e8"/><path d="M22,272 v-9 h15 v15 h-8 M30,270 l6,-6 M32,264 h4 v4" fill="none" stroke="#ddd" stroke-width="1.2"/><circle cx="28" cy="305.5" r="9" fill="none" stroke="#ddd" stroke-width="1.3" stroke-dasharray="6,3"/><rect x="23" y="300.5" width="10" height="10" fill="#eee"/><path d="M20,353 l12,-12 l3,3 l-12,12 l-4,1 z" fill="none" stroke="#eee" stroke-width="1.3"/><path d="M19,357 q6,-5 9,-1 q4,4 9,-2" fill="none" stroke="#7ed8a4" stroke-width="1.3"/><path d="M21,372 v19 h17" fill="none" stroke="#eee" stroke-width="2"/><path d="M23,390 v-12 a12,12 0 0 1 12,12 z" fill="#7ed8a4"/><path d="M24,416 h12 v12 h-12 z M24,416 l4,-4 h12 l-4,4 M40,412 v12 l-4,4" fill="none" stroke="#7ed8a4" stroke-width="1.2"/><path d="M18,413 h6 M21,410 v6" stroke="#7ed8a4" stroke-width="1.5"/><rect x="20" y="455" width="13" height="7" fill="#7ed8a4"/><path d="M20,462 h13 v10 h-13 z M20,455 l4,-4 h13 l-4,4 M37,451 v17 l-4,4" fill="none" stroke="#e8e8e8" stroke-width="1.2"/><path d="M20,490 h13 v13 h-13 z M20,490 l4,-4 h13 l-4,4 M37,486 v13 l-4,4" fill="none" stroke="#e8e8e8" stroke-width="1.2"/><path d="M20,490 l5,5 h3 l5,-5 v13 l-5,-5 h-3 l-5,5 z" fill="#7ed8a4"/><path d="M20,527 h13 v10 h-13 z M20,527 l4,-4 h13 l-4,4 M37,523 v10 l-4,4" fill="none" stroke="#e8e8e8" stroke-width="1.2"/><path d="M20,527 l4,-4 h13 l-4,4 z" fill="#7ed8a4"/><path d="M20,561 h13 v13 h-13 z M20,561 l4,-4 h13 l-4,4 M37,557 v13 l-4,4" fill="none" stroke="#e8e8e8" stroke-width="1.2"/><path d="M27,561 v13" stroke="#7ed8a4" stroke-width="1.5"/><path d="M20,596 h13 v13 h-13 z M20,596 l4,-4 h13 l-4,4 M37,592 v13 l-4,4" fill="none" stroke="#e8e8e8" stroke-width="1.2"/><path d="M29,592 l-4,12 l5,5" stroke="#7ed8a4" stroke-width="1.5" fill="none"/><path d="M21,644 l2,-10 l6,-4 l7,4 l1,10 z" fill="#7ed8a4"/><circle cx="21" cy="644" r="1.5" fill="#fff"/><circle cx="37" cy="644" r="1.5" fill="#fff"/><circle cx="36" cy="634" r="1.5" fill="#fff"/><circle cx="23" cy="634" r="1.5" fill="#fff"/><circle cx="27" cy="672" r="9" fill="#7ed8a4"/><path d="M27,672 l-9,0 M27,672 l-6,6 M27,672 l0,9 M27,672 l6,6 M27,672 l9,0" stroke="#232323" stroke-width="1"/><ellipse cx="28" cy="706" rx="9" ry="8" fill="#d7c3ee"/><path d="M19,706 h18 M28,698 v16" stroke="#232323" stroke-width="0.8"/><path d="M20,734 h12 v13 h-12 z M24,734 l4,-4 h8 v13 l-4,4" fill="none" stroke="#e8e8e8" stroke-width="1.2"/><circle cx="19" cy="731" r="1.5" fill="#d7c3ee"/><rect x="23" y="769" width="10" height="10" fill="none" stroke="#e8e8e8" stroke-width="1.2"/><path d="M22,768 l12,12 M34,768 l-12,12" stroke="#e8e8e8" stroke-width="1"/><path d="M28,763 l-3,3 h6 z M28,785 l-3,-3 h6 z M17,774 l3,-3 v6 z M39,774 l-3,-3 v6 z" fill="#d7c3ee"/><path d="M17,805 l10,-6 l12,8 l-10,6 z" fill="#d7c3ee"/><path d="M17,805 v4 l12,8 v-4 M39,807 v4 l-10,6" fill="#d7c3ee" stroke="#bbb" stroke-width="0.6"/><path d="M20,842 h12 v12 h-12 z M24,838 h12 v12" fill="none" stroke="#e8e8e8" stroke-width="1.2"/><path d="M15,848 l9,-6" stroke="#e8e8e8" stroke-width="1"/><circle cx="15" cy="848" r="1.5" fill="#d7c3ee"/><rect x="19" y="878" width="17" height="17" fill="none" stroke="#e8e8e8" stroke-width="1.4"/><path d="M24,891 v-4 a4,4 0 0 1 4,-4 h4" fill="none" stroke="#fff" stroke-width="3"/><path d="M45,140.6 l0,-5 l-5,5 z" fill="#9a9a9a"/><path d="M45,286 l0,-5 l-5,5 z" fill="#9a9a9a"/><path d="M45,361.6 l0,-5 l-5,5 z" fill="#9a9a9a"/><path d="M45,436 l0,-5 l-5,5 z" fill="#9a9a9a"/><path d="M45,476.5 l0,-5 l-5,5 z" fill="#9a9a9a"/><path d="M45,581 l0,-5 l-5,5 z" fill="#9a9a9a"/><path d="M45,616.6 l0,-5 l-5,5 z" fill="#9a9a9a"/><path d="M45,722 l0,-5 l-5,5 z" fill="#9a9a9a"/><path d="M45,756.5 l0,-5 l-5,5 z" fill="#9a9a9a"/><path d="M45,791 l0,-5 l-5,5 z" fill="#9a9a9a"/><path d="M45,826 l0,-5 l-5,5 z" fill="#9a9a9a"/><path d="M45,861 l0,-5 l-5,5 z" fill="#9a9a9a"/></svg><svg class="a" style="left:60px;top:468px;" width="30" height="28" viewBox="60 468 30 28"><circle cx="72" cy="481" r="12" fill="#6f7d7c" fill-opacity="0.6"/><rect x="67" y="475" width="11" height="13" fill="none" stroke="#ddd" stroke-width="1"/><rect x="70" y="476" width="7" height="10" fill="#ddd" fill-opacity="0.6"/></svg><svg class="a" style="left:1270px;top:100px;" width="100" height="220" viewBox="1270 100 100 220"><line x1="1316" y1="151" x2="1316" y2="121" stroke="#3d87d9" stroke-width="2"/><line x1="1316" y1="151" x2="1346" y2="146" stroke="#6aa632" stroke-width="2"/><line x1="1316" y1="151" x2="1327" y2="162" stroke="#e33c4e" stroke-width="2"/><circle cx="1304" cy="139" r="6.8" fill="#4a3a3c" fill-opacity="0.5" stroke="#b2485a" stroke-width="1.3"/><circle cx="1316" cy="180" r="7.3" fill="#324050" fill-opacity="0.6" stroke="#3d74b8" stroke-width="1.3"/><circle cx="1286" cy="155" r="8" fill="#4d6d34" stroke="#7ac43c" stroke-width="1.5"/><circle cx="1316" cy="121.3" r="8.2" fill="#3d8ae6"/><circle cx="1345.7" cy="145.8" r="8" fill="#6cb434"/><circle cx="1327" cy="162.5" r="8.5" fill="#f03c52"/><text x="1316" y="125.5" font-size="11" font-weight="bold" text-anchor="middle" fill="#10243a" font-family="Liberation Sans">Z</text><text x="1345.7" y="150" font-size="11" font-weight="bold" text-anchor="middle" fill="#1e3010" font-family="Liberation Sans">Y</text><text x="1327" y="166.7" font-size="11" font-weight="bold" text-anchor="middle" fill="#3a0c14" font-family="Liberation Sans">X</text><circle cx="1343.6" cy="204.5" r="13" fill="#2e2e2e" fill-opacity="0.55"/><circle cx="1343.6" cy="235.4" r="13" fill="#2e2e2e" fill-opacity="0.55"/><circle cx="1343.6" cy="265" r="13" fill="#2e2e2e" fill-opacity="0.55"/><circle cx="1343.6" cy="296" r="13" fill="#2e2e2e" fill-opacity="0.55"/><circle cx="1346" cy="203" r="6" fill="#fff"/><path d="M1343,206 l-6,6" stroke="#fff" stroke-width="2.2"/><path d="M1346,199.5 v7 M1342.5,203 h7" stroke="#222" stroke-width="1.3"/><path d="M1337,236 q0,-7 2,-9 v6 v-9 q1,-1 2,0 v9 v-10 q1,-1 2,0 v10 v-9 q1,-1 2,0 v10 l2,-3 q2,-1 2,1 l-4,8 q-2,3 -5,3 q-4,0 -5,-4 z" fill="#fff"/><path d="M1336,261 q0,-4 4,-4 h8 q4,0 4,4 q0,4 -4,4 h-8 q-4,0 -4,-4 z" fill="none" stroke="#fff" stroke-width="1.3"/><rect x="1339" y="267" width="8" height="6" fill="none" stroke="#fff" stroke-width="1.3"/><path d="M1347,270 l4,-3 v6 z" fill="#fff"/><path d="M1337,303 l3,-14 h8 l3,14 z M1338.5,296 h11 M1339.5,292 h9 M1341,289 l-1,14 M1344,289 v14 M1347,289 l1,14" fill="none" stroke="#fff" stroke-width="1.2"/></svg><div class="a" style="left:1374px;top:102px;width:191px;height:303px;background:rgba(44,44,44,0.45);border-radius:0px;"></div><div class="a" style="left:1374px;top:103px;width:183px;height:274px;background:#383838;border-radius:5px;"></div><div class="a" style="left:1374px;top:381px;width:183px;height:24px;background:#383838;border-radius:5px;"></div><svg class="a" style="left:1374px;top:100px;" width="186" height="310" viewBox="1374 100 186 310"><path d="M1385,114.4 l3,3 l3,-3" fill="none" stroke="#ccc" stroke-width="1.3"/><path d="M1385,390 l3,3 l-3,3" fill="none" stroke="#ccc" stroke-width="1.3"/><circle cx="1541" cy="114" r="0.8" fill="#111"/><circle cx="1541" cy="116.5" r="0.8" fill="#111"/><circle cx="1543.2" cy="114" r="0.8" fill="#111"/><circle cx="1543.2" cy="116.5" r="0.8" fill="#111"/><circle cx="1545.4" cy="114" r="0.8" fill="#111"/><circle cx="1545.4" cy="116.5" r="0.8" fill="#111"/><circle cx="1547.6" cy="114" r="0.8" fill="#111"/><circle cx="1547.6" cy="116.5" r="0.8" fill="#111"/><circle cx="1549.8" cy="114" r="0.8" fill="#111"/><circle cx="1549.8" cy="116.5" r="0.8" fill="#111"/><circle cx="1541" cy="391" r="0.8" fill="#111"/><circle cx="1541" cy="393.5" r="0.8" fill="#111"/><circle cx="1543.2" cy="391" r="0.8" fill="#111"/><circle cx="1543.2" cy="393.5" r="0.8" fill="#111"/><circle cx="1545.4" cy="391" r="0.8" fill="#111"/><circle cx="1545.4" cy="393.5" r="0.8" fill="#111"/><circle cx="1547.6" cy="391" r="0.8" fill="#111"/><circle cx="1547.6" cy="393.5" r="0.8" fill="#111"/><circle cx="1549.8" cy="391" r="0.8" fill="#111"/><circle cx="1549.8" cy="393.5" r="0.8" fill="#111"/></svg><div class="t" style="left:1396px;top:110.316px;font-size:11.6px;color:#e6e6e6;font-weight:normal;">Transform</div><div class="t" style="left:1396px;top:387.316px;font-size:11.6px;color:#e6e6e6;font-weight:normal;">Properties</div><div class="t" style="left:1383px;top:140.316px;font-size:11.6px;color:#c8c8c8;font-weight:normal;">Median:</div><div class="a" style="left:1383px;top:157px;width:165.5px;height:57.6px;background:#545454;border-radius:4px;"></div><div class="a" style="left:1383px;top:175.6px;width:165.5px;height:1px;background:#3a3a3a;border-radius:0px;"></div><div class="a" style="left:1383px;top:195px;width:165.5px;height:1px;background:#3a3a3a;border-radius:0px;"></div><div class="t" style="left:1397px;top:160.316px;font-size:11.6px;color:#e0e0e0;font-weight:normal;">X</div><div class="t" style="right:384px;top:160.316px;font-size:11.6px;color:#e0e0e0;font-weight:normal;">0"</div><div class="t" style="left:1397px;top:179.816px;font-size:11.6px;color:#e0e0e0;font-weight:normal;">Y</div><div class="t" style="right:384px;top:179.816px;font-size:11.6px;color:#e0e0e0;font-weight:normal;">0"</div><div class="t" style="left:1397px;top:199.316px;font-size:11.6px;color:#e0e0e0;font-weight:normal;">Z</div><div class="t" style="right:384px;top:199.316px;font-size:11.6px;color:#e0e0e0;font-weight:normal;">0"</div><div class="a" style="left:1383px;top:219px;width:83px;height:18px;background:#545454;border-radius:4px 0 0 4px;"></div><div class="a" style="left:1466px;top:219px;width:82.5px;height:18px;background:#4772b3;border-radius:0 4px 4px 0;"></div><div class="t" style="left:1424.5px;top:222.316px;width:0;font-size:11.6px;color:#e0e0e0;font-weight:normal;"><span style="position:absolute;left:0;transform:translateX(-50%)">Global</span></div><div class="t" style="left:1507px;top:222.316px;width:0;font-size:11.6px;color:#fff;font-weight:normal;"><span style="position:absolute;left:0;transform:translateX(-50%)">Local</span></div><div class="t" style="left:1383px;top:244.316px;font-size:11.6px;color:#c8c8c8;font-weight:normal;">Vertices Data:</div><div class="a" style="left:1383px;top:263px;width:165.5px;height:18px;background:#545454;border-radius:4px;"></div><div class="t" style="left:1398px;top:266.316px;font-size:11.6px;color:#e0e0e0;font-weight:normal;">Mean Bevel Weight</div><div class="t" style="right:384px;top:266.316px;font-size:11.6px;color:#e0e0e0;font-weight:normal;">0.00</div><div class="a" style="left:1383px;top:285.6px;width:165.5px;height:17.4px;background:#545454;border-radius:4px;"></div><div class="t" style="left:1398px;top:288.616px;font-size:11.6px;color:#e0e0e0;font-weight:normal;">Mean Vertex Crease</div><div class="t" style="right:384px;top:288.616px;font-size:11.6px;color:#e0e0e0;font-weight:normal;">0.00</div><div class="t" style="left:1383px;top:310.316px;font-size:11.6px;color:#c8c8c8;font-weight:normal;">Edges Data:</div><div class="a" style="left:1383px;top:329px;width:165.5px;height:17.6px;background:#545454;border-radius:4px;"></div><div class="t" style="left:1398px;top:332.116px;font-size:11.6px;color:#e0e0e0;font-weight:normal;">Mean Bevel Weight</div><div class="t" style="right:384px;top:332.116px;font-size:11.6px;color:#e0e0e0;font-weight:normal;">0.00</div><div class="a" style="left:1383px;top:351px;width:165.5px;height:17.7px;background:#545454;border-radius:4px;"></div><div class="t" style="left:1398px;top:354.166px;font-size:11.6px;color:#e0e0e0;font-weight:normal;">Mean Crease</div><div class="t" style="right:384px;top:354.166px;font-size:11.6px;color:#e0e0e0;font-weight:normal;">0.00</div><div class="a" style="left:1565px;top:102px;width:20px;height:811px;background:#1d1d1d;border-radius:0px;"></div><div class="a" style="left:1565px;top:106px;width:17px;height:41.7px;background:#353535;border-radius:0 5px 5px 0;border:1px solid #3a3a3a;border-left:none"></div><div class="t" style="left:1580.5px;top:112px;font-size:11.9px;color:#f0f0f0;transform:rotate(90deg);transform-origin:0 0">Item</div><div class="a" style="left:1565px;top:152px;width:17px;height:40px;background:#282828;border-radius:0 5px 5px 0;border:1px solid #3a3a3a;border-left:none"></div><div class="t" style="left:1580.5px;top:158px;font-size:11.9px;color:#d8d8d8;transform:rotate(90deg);transform-origin:0 0">Tool</div><div class="a" style="left:1565px;top:197px;width:17px;height:40px;background:#282828;border-radius:0 5px 5px 0;border:1px solid #3a3a3a;border-left:none"></div><div class="t" style="left:1580.5px;top:203px;font-size:11.9px;color:#d8d8d8;transform:rotate(90deg);transform-origin:0 0">View</div><div class="a" style="left:1565px;top:242px;width:17px;height:103.7px;background:#282828;border-radius:0 5px 5px 0;border:1px solid #3a3a3a;border-left:none"></div><div class="t" style="left:1580.5px;top:248px;font-size:11.9px;color:#d8d8d8;transform:rotate(90deg);transform-origin:0 0">Interactive Tools</div><div class="a" style="left:1565px;top:352px;width:17px;height:38px;background:#282828;border-radius:0 5px 5px 0;border:1px solid #3a3a3a;border-left:none"></div><div class="t" style="left:1580.5px;top:358px;font-size:11.9px;color:#d8d8d8;transform:rotate(90deg);transform-origin:0 0">Edit</div><div class="a" style="left:1565px;top:395px;width:17px;height:51px;background:#282828;border-radius:0 5px 5px 0;border:1px solid #3a3a3a;border-left:none"></div><div class="t" style="left:1580.5px;top:401px;font-size:11.9px;color:#d8d8d8;transform:rotate(90deg);transform-origin:0 0">Zen UV</div><div class="a" style="left:1565px;top:453px;width:17px;height:68px;background:#282828;border-radius:0 5px 5px 0;border:1px solid #3a3a3a;border-left:none"></div><div class="t" style="left:1580.5px;top:459px;font-size:11.9px;color:#d8d8d8;transform:rotate(90deg);transform-origin:0 0">MACHIN3</div><div class="a" style="left:1565px;top:526px;width:17px;height:48px;background:#282828;border-radius:0 5px 5px 0;border:1px solid #3a3a3a;border-left:none"></div><div class="t" style="left:1580.5px;top:532px;font-size:11.9px;color:#d8d8d8;transform:rotate(90deg);transform-origin:0 0">♥♥♥</div><div class="a" style="left:1565px;top:579px;width:17px;height:58px;background:#282828;border-radius:0 5px 5px 0;border:1px solid #3a3a3a;border-left:none"></div><div class="t" style="left:1580.5px;top:585px;font-size:11.9px;color:#d8d8d8;transform:rotate(90deg);transform-origin:0 0">Material</div><div class="a" style="left:1565px;top:643px;width:17px;height:59px;background:#282828;border-radius:0 5px 5px 0;border:1px solid #3a3a3a;border-left:none"></div><div class="t" style="left:1580.5px;top:649px;font-size:11.9px;color:#d8d8d8;transform:rotate(90deg);transform-origin:0 0">HardOps</div><div class="a" style="left:1565px;top:708px;width:17px;height:72.5px;background:#282828;border-radius:0 5px 5px 0;border:1px solid #3a3a3a;border-left:none"></div><div class="t" style="left:1580.5px;top:714px;font-size:11.9px;color:#d8d8d8;transform:rotate(90deg);transform-origin:0 0">BoxCutter</div><div class="a" style="left:1565px;top:785.6px;width:17px;height:100.4px;background:#282828;border-radius:0 5px 5px 0;border:1px solid #3a3a3a;border-left:none"></div><div class="t" style="left:1580.5px;top:791.6px;font-size:11.9px;color:#d8d8d8;transform:rotate(90deg);transform-origin:0 0">Screencast Keys</div><div class="a" style="left:1565px;top:891px;width:17px;height:22px;background:#282828;border-radius:0 5px 5px 0;border:1px solid #3a3a3a;border-left:none"></div><div class="t" style="left:1580.5px;top:897px;font-size:11.9px;color:#d8d8d8;transform:rotate(90deg);transform-origin:0 0">Pla</div><div class="a" style="left:1588px;top:50px;width:330px;height:167px;background:#282828;border-radius:6px;"></div><div class="a" style="left:1588px;top:50px;width:330px;height:26px;background:#303030;border-radius:6px 6px 0 0;"></div><div class="a" style="left:1596px;top:52px;width:31px;height:19.7px;background:#232323;border-radius:4px;"></div><div class="a" style="left:1633px;top:52px;width:32px;height:19.7px;background:#232323;border-radius:4px;"></div><div class="a" style="left:1684px;top:52px;width:115px;height:19.7px;background:#1d1d1d;border-radius:4px;"></div><div class="t" style="left:1710px;top:56.316px;font-size:11.6px;color:#7a7a7a;font-weight:normal;">Search</div><div class="a" style="left:1855px;top:52px;width:32px;height:19.7px;background:#232323;border-radius:4px;"></div><div class="a" style="left:1892px;top:52px;width:19px;height:19.7px;background:#3a3a3a;border-radius:4px;"></div><div class="a" style="left:1588px;top:96px;width:330px;height:20px;background:#2b2b2b;border-radius:0px;"></div><div class="a" style="left:1588px;top:136px;width:330px;height:20px;background:#2b2b2b;border-radius:0px;"></div><div class="a" style="left:1588px;top:176px;width:330px;height:20px;background:#2b2b2b;border-radius:0px;"></div><svg class="a" style="left:1588px;top:50px;" width="328" height="170" viewBox="1588 50 328 170"><path d="M1618,60.4 l3,3 l3,-3" fill="none" stroke="#cfcfcf" stroke-width="1.3"/><path d="M1655,60.4 l3,3 l3,-3" fill="none" stroke="#cfcfcf" stroke-width="1.3"/><rect x="1603" y="56" width="4" height="3" fill="#ddd"/><path d="M1604,59 v8 h3 M1604,63 h3" fill="none" stroke="#ddd"/><rect x="1608" y="61" width="7" height="3" fill="#ddd"/><rect x="1608" y="65" width="7" height="3" fill="#ddd"/><rect x="1640" y="56" width="10" height="10" fill="none" stroke="#ddd" stroke-width="1.1"/><path d="M1638,58 v10 h10" fill="none" stroke="#ddd"/><path d="M1642,64 l3,-4 l2,3 l2,-2" stroke="#ddd" fill="none"/><circle cx="1697" cy="60" r="4" fill="none" stroke="#ddd" stroke-width="1.2"/><path d="M1694,63 l-4,4" stroke="#ddd" stroke-width="1.3"/><path d="M1860,56 h12 l-4.5,5 v6 l-3,-2 v-4 z" fill="none" stroke="#ddd" stroke-width="1.1"/><path d="M1878,60.4 l3,3 l3,-3" fill="none" stroke="#cfcfcf" stroke-width="1.3"/><rect x="1896" y="58" width="10" height="9" fill="none" stroke="#ddd"/><path d="M1904,55 v6 M1901,58 h6" stroke="#ddd" stroke-width="1.3"/><rect x="1603" y="77" width="18" height="18" rx="4" fill="#3a3a3a" stroke="#4a4a4a"/><rect x="1606" y="80" width="12" height="3" fill="#ddd"/><rect x="1607" y="84" width="10" height="8" fill="#ddd"/><rect x="1610" y="86" width="4" height="1.2" fill="#333"/><path d="M1614,104.4 l3,3 l3,-3" fill="none" stroke="#ccc" stroke-width="1.3"/><rect x="1632" y="100" width="12" height="3" fill="#ddd"/><rect x="1633" y="104" width="10" height="8" fill="#ddd"/><rect x="1636" y="106" width="4" height="1.2" fill="#333"/><rect x="1853" y="99" width="13" height="13" rx="2" fill="#ddd"/><path d="M1856,105.5 l2.5,2.5 l5,-5" fill="none" stroke="#222" stroke-width="1.6"/><path d="M1872.5,106.5 q6.5,-7 13,0 q-6.5,7 -13,0 z" fill="none" stroke="#e6e6e6" stroke-width="1.8"/><circle cx="1879" cy="106.5" r="2.6" fill="none" stroke="#e6e6e6" stroke-width="1.6"/><rect x="1893.5" y="102" width="13" height="10" rx="1" fill="#e4e4e4"/><rect x="1897" y="100" width="6" height="2.5" fill="#e4e4e4"/><circle cx="1900" cy="107" r="3.3" fill="none" stroke="#333" stroke-width="1"/><circle cx="1900" cy="107" r="1.6" fill="none" stroke="#333" stroke-width="0.9"/><path d="M1872.5,126.5 q6.5,-7 13,0 q-6.5,7 -13,0 z" fill="none" stroke="#e6e6e6" stroke-width="1.8"/><circle cx="1879" cy="126.5" r="2.6" fill="none" stroke="#e6e6e6" stroke-width="1.6"/><rect x="1893.5" y="122" width="13" height="10" rx="1" fill="#e4e4e4"/><rect x="1897" y="120" width="6" height="2.5" fill="#e4e4e4"/><circle cx="1900" cy="127" r="3.3" fill="none" stroke="#333" stroke-width="1"/><circle cx="1900" cy="127" r="1.6" fill="none" stroke="#333" stroke-width="0.9"/><path d="M1872.5,146.5 q6.5,-7 13,0 q-6.5,7 -13,0 z" fill="none" stroke="#e6e6e6" stroke-width="1.8"/><circle cx="1879" cy="146.5" r="2.6" fill="none" stroke="#e6e6e6" stroke-width="1.6"/><rect x="1893.5" y="142" width="13" height="10" rx="1" fill="#e4e4e4"/><rect x="1897" y="140" width="6" height="2.5" fill="#e4e4e4"/><circle cx="1900" cy="147" r="3.3" fill="none" stroke="#333" stroke-width="1"/><circle cx="1900" cy="147" r="1.6" fill="none" stroke="#333" stroke-width="0.9"/><path d="M1872.5,166.5 q6.5,-7 13,0 q-6.5,7 -13,0 z" fill="none" stroke="#e6e6e6" stroke-width="1.8"/><circle cx="1879" cy="166.5" r="2.6" fill="none" stroke="#e6e6e6" stroke-width="1.6"/><rect x="1893.5" y="162" width="13" height="10" rx="1" fill="#e4e4e4"/><rect x="1897" y="160" width="6" height="2.5" fill="#e4e4e4"/><circle cx="1900" cy="167" r="3.3" fill="none" stroke="#333" stroke-width="1"/><circle cx="1900" cy="167" r="1.6" fill="none" stroke="#333" stroke-width="0.9"/><path d="M1872.5,186.5 q6.5,-7 13,0 q-6.5,7 -13,0 z" fill="none" stroke="#e6e6e6" stroke-width="1.8"/><circle cx="1879" cy="186.5" r="2.6" fill="none" stroke="#e6e6e6" stroke-width="1.6"/><rect x="1893.5" y="182" width="13" height="10" rx="1" fill="#e4e4e4"/><rect x="1897" y="180" width="6" height="2.5" fill="#e4e4e4"/><circle cx="1900" cy="187" r="3.3" fill="none" stroke="#333" stroke-width="1"/><circle cx="1900" cy="187" r="1.6" fill="none" stroke="#333" stroke-width="0.9"/><path d="M1872.5,206.5 q6.5,-7 13,0 q-6.5,7 -13,0 z" fill="none" stroke="#e6e6e6" stroke-width="1.8"/><circle cx="1879" cy="206.5" r="2.6" fill="none" stroke="#e6e6e6" stroke-width="1.6"/><rect x="1893.5" y="202" width="13" height="10" rx="1" fill="#e4e4e4"/><rect x="1897" y="200" width="6" height="2.5" fill="#e4e4e4"/><circle cx="1900" cy="207" r="3.3" fill="none" stroke="#333" stroke-width="1"/><circle cx="1900" cy="207" r="1.6" fill="none" stroke="#333" stroke-width="0.9"/><circle cx="1598" cy="126.5" r="1.8" fill="#ddd"/><path d="M1636,123.5 l3,3 l-3,3" fill="none" stroke="#ccc" stroke-width="1.2"/><path d="M1652,120.5 h12 l-6,12 z" fill="none" stroke="#e1954a" stroke-width="2.6" stroke-linejoin="round"/><path d="M1731,129.5 l6,-6 a2.5,2.5 0 1 1 2,2 l-6,6 a1.5,1.5 0 0 1 -2,-2 z" fill="none" stroke="#6d8fd6" stroke-width="1.4"/><path d="M1748,121.5 h12 l-6,10 z" fill="none" stroke="#3fc28c" stroke-width="1.3"/><rect x="1746.5" y="120" width="3" height="3" fill="none" stroke="#3fc28c"/><rect x="1758.5" y="120" width="3" height="3" fill="none" stroke="#3fc28c"/><rect x="1752.5" y="130" width="3" height="3" fill="none" stroke="#3fc28c"/><circle cx="1598" cy="146.5" r="1.8" fill="#ddd"/><path d="M1636,143.5 l3,3 l-3,3" fill="none" stroke="#ccc" stroke-width="1.2"/><path d="M1652,140.5 h12 l-6,12 z" fill="none" stroke="#e1954a" stroke-width="2.6" stroke-linejoin="round"/><path d="M1755,149.5 l6,-6 a2.5,2.5 0 1 1 2,2 l-6,6 a1.5,1.5 0 0 1 -2,-2 z" fill="none" stroke="#6d8fd6" stroke-width="1.4"/><path d="M1773,141.5 h12 l-6,10 z" fill="none" stroke="#3fc28c" stroke-width="1.3"/><rect x="1771.5" y="140" width="3" height="3" fill="none" stroke="#3fc28c"/><rect x="1783.5" y="140" width="3" height="3" fill="none" stroke="#3fc28c"/><rect x="1777.5" y="150" width="3" height="3" fill="none" stroke="#3fc28c"/><circle cx="1598" cy="166.5" r="1.8" fill="#ddd"/><path d="M1636,163.5 l3,3 l-3,3" fill="none" stroke="#ccc" stroke-width="1.2"/><path d="M1652,160.5 h12 l-6,12 z" fill="none" stroke="#e1954a" stroke-width="2.6" stroke-linejoin="round"/><path d="M1755,169.5 l6,-6 a2.5,2.5 0 1 1 2,2 l-6,6 a1.5,1.5 0 0 1 -2,-2 z" fill="none" stroke="#6d8fd6" stroke-width="1.4"/><path d="M1773,161.5 h12 l-6,10 z" fill="none" stroke="#3fc28c" stroke-width="1.3"/><rect x="1771.5" y="160" width="3" height="3" fill="none" stroke="#3fc28c"/><rect x="1783.5" y="160" width="3" height="3" fill="none" stroke="#3fc28c"/><rect x="1777.5" y="170" width="3" height="3" fill="none" stroke="#3fc28c"/><circle cx="1598" cy="186.5" r="1.8" fill="#ddd"/><path d="M1636,183.5 l3,3 l-3,3" fill="none" stroke="#ccc" stroke-width="1.2"/><path d="M1652,180.5 h12 l-6,12 z" fill="none" stroke="#e1954a" stroke-width="2.6" stroke-linejoin="round"/><path d="M1755,189.5 l6,-6 a2.5,2.5 0 1 1 2,2 l-6,6 a1.5,1.5 0 0 1 -2,-2 z" fill="none" stroke="#6d8fd6" stroke-width="1.4"/><path d="M1773,181.5 h12 l-6,10 z" fill="none" stroke="#3fc28c" stroke-width="1.3"/><rect x="1771.5" y="180" width="3" height="3" fill="none" stroke="#3fc28c"/><rect x="1783.5" y="180" width="3" height="3" fill="none" stroke="#3fc28c"/><rect x="1777.5" y="190" width="3" height="3" fill="none" stroke="#3fc28c"/><circle cx="1598" cy="206.5" r="1.8" fill="#ddd"/><path d="M1636,203.5 l3,3 l-3,3" fill="none" stroke="#ccc" stroke-width="1.2"/><path d="M1652,200.5 h12 l-6,12 z" fill="none" stroke="#e1954a" stroke-width="2.6" stroke-linejoin="round"/><path d="M1755,209.5 l6,-6 a2.5,2.5 0 1 1 2,2 l-6,6 a1.5,1.5 0 0 1 -2,-2 z" fill="none" stroke="#6d8fd6" stroke-width="1.4"/><path d="M1773,201.5 h12 l-6,10 z" fill="none" stroke="#3fc28c" stroke-width="1.3"/><rect x="1771.5" y="200" width="3" height="3" fill="none" stroke="#3fc28c"/><rect x="1783.5" y="200" width="3" height="3" fill="none" stroke="#3fc28c"/><rect x="1777.5" y="210" width="3" height="3" fill="none" stroke="#3fc28c"/><line x1="1617" y1="116" x2="1617" y2="212" stroke="#4a4a4a"/></svg><div class="t" style="left:1632px;top:80.816px;font-size:11.6px;color:#e0e0e0;font-weight:normal;">Scene Collection</div><div class="t" style="left:1651px;top:100.816px;font-size:11.6px;color:#e0e0e0;font-weight:normal;">Key6</div><div class="t" style="left:1672px;top:120.816px;font-size:11.6px;color:#e0e0e0;font-weight:normal;">Key-6</div><div class="t" style="left:1672px;top:140.816px;font-size:11.6px;color:#e0e0e0;font-weight:normal;">Key-6.001</div><div class="t" style="left:1672px;top:160.816px;font-size:11.6px;color:#e0e0e0;font-weight:normal;">Key-6.002</div><div class="t" style="left:1672px;top:180.816px;font-size:11.6px;color:#e0e0e0;font-weight:normal;">Key-6.003</div><div class="t" style="left:1672px;top:200.816px;font-size:11.6px;color:#e0e0e0;font-weight:normal;">Key-6.004</div><div class="a" style="left:1914.5px;top:78px;width:2px;height:34px;background:#3e3e3e;border-radius:1px;"></div><div class="a" style="left:1588px;top:220px;width:330px;height:790px;background:#2e2e2e;border-radius:6px;"></div><div class="a" style="left:1588px;top:220px;width:330px;height:25px;background:#303030;border-radius:6px 6px 0 0;"></div><div class="a" style="left:1588px;top:245px;width:28px;height:765px;background:#1d1d1d;border-radius:0 0 0 6px;"></div><div class="a" style="left:1590px;top:521.7px;width:25.6px;height:25.7px;background:#303030;border-radius:4px;"></div><div class="a" style="left:1596.5px;top:223px;width:30.5px;height:18.5px;background:#232323;border-radius:4px;"></div><div class="a" style="left:1697.6px;top:223px;width:114.4px;height:18.5px;background:#1d1d1d;border-radius:4px;"></div><div class="t" style="left:1723px;top:226.316px;font-size:11.6px;color:#7a7a7a;font-weight:normal;">Search</div><div class="a" style="left:1892px;top:223px;width:19px;height:18.5px;background:#232323;border-radius:4px;"></div><svg class="a" style="left:1588px;top:222px;" width="328" height="788" viewBox="1588 222 328 788"><path d="M1618,230.9 l3,3 l3,-3" fill="none" stroke="#cfcfcf" stroke-width="1.3"/><path d="M1898.5,230.9 l3,3 l3,-3" fill="none" stroke="#cfcfcf" stroke-width="1.3"/><rect x="1601" y="227" width="14" height="5" rx="2.5" fill="#ddd"/><rect x="1601" y="233.5" width="14" height="5" rx="2.5" fill="#ddd"/><circle cx="1709" cy="230.5" r="4" fill="none" stroke="#ddd" stroke-width="1.2"/><path d="M1706,233.5 l-4,4" stroke="#ddd" stroke-width="1.3"/><path d="M1598,274 v-8 M1596,266 h4 M1600,258 v4 M1606,274 v-10 a3,3 0 0 1 0,-6" fill="none" stroke="#ddd" stroke-width="2"/><rect x="1596" y="297" width="14" height="11" rx="1" fill="none" stroke="#ddd" stroke-width="1.6"/><rect x="1599" y="294" width="8" height="3" fill="#ddd"/><rect x="1596" y="325" width="14" height="6" fill="#ddd"/><path d="M1597,331 v6 h12 v-6" fill="none" stroke="#ddd" stroke-width="1.5"/><rect x="1598" y="352" width="11" height="11" fill="none" stroke="#ddd" stroke-width="1.3"/><path d="M1596,354 v11 h11" fill="none" stroke="#ddd"/><path d="M1597,391 l4,-9 l4,9 z" fill="#ddd"/><circle cx="1606" cy="389" r="2.6" fill="none" stroke="#ddd" stroke-width="1.2"/><circle cx="1608" cy="382" r="1.8" fill="#ddd"/><circle cx="1603" cy="414" r="6" fill="#c0464a"/><path d="M1599,411 q3,2 2,5 q3,1 5,-3" fill="none" stroke="#1d1d1d" stroke-width="1.2"/><rect x="1597" y="445" width="12" height="12" fill="none" stroke="#e1954a" stroke-width="1" stroke-dasharray="3,3"/><rect x="1599" y="447" width="8" height="8" fill="#e1954a"/><path d="M1597,484 l6,-6 a3,3 0 1 1 3,3 l-6,6 z" fill="#6d8fd6"/><circle cx="1607.5" cy="475.5" r="1.6" fill="#1d1d1d"/><circle cx="1597" cy="501" r="2" fill="#7da6e6"/><circle cx="1609" cy="505" r="2" fill="#7da6e6"/><circle cx="1606" cy="512" r="2" fill="#7da6e6"/><path d="M1597,501 l12,4 M1597,501 l9,11 M1597,501 v11" stroke="#7da6e6" stroke-width="1.2"/><circle cx="1603" cy="535" r="6" fill="none" stroke="#7da6e6" stroke-width="1.6"/><circle cx="1603" cy="535" r="2.5" fill="#7da6e6"/><circle cx="1608" cy="529.5" r="2" fill="#7da6e6"/><ellipse cx="1603" cy="563" rx="7" ry="5" transform="rotate(-35 1603 563)" fill="none" stroke="#7da6e6" stroke-width="1.6"/><circle cx="1601" cy="565" r="2" fill="#7da6e6"/><path d="M1596,584 h14 l-7,12 z" fill="none" stroke="#3fc28c" stroke-width="1.5"/><circle cx="1603" cy="618" r="6.5" fill="#c05050"/><path d="M1603,618 v-6.5 a6.5,6.5 0 0 1 6.5,6.5 z M1603,618 h-6.5 a6.5,6.5 0 0 0 6.5,6.5 z" fill="#f0e0e0"/></svg><svg class="a" style="left:1616px;top:250px;" width="300" height="30" viewBox="1616 250 300 30"><path d="M1627,258 v-2 h3 M1638,256 h3 v3 M1641,268 v3 h-3 M1630,271 h-3 v-3" fill="none" stroke="#ddd" stroke-width="1.2"/><rect x="1630" y="259" width="8" height="9" fill="#ddd"/><path d="M1897,269 l5,-5 M1900,260 l5,5 l-2,1 l-3,-3 z" stroke="#999" fill="none" stroke-width="1.2"/></svg><div class="t" style="left:1650px;top:257.316px;font-size:11.6px;color:#e0e0e0;font-weight:normal;">Plane</div><div class="a" style="left:1625px;top:290px;width:137px;height:18px;background:#4a4a4a;border-radius:4px;"></div><div class="a" style="left:1772px;top:290px;width:138px;height:18px;background:#4a4a4a;border-radius:4px;"></div><div class="t" style="left:1701px;top:293.316px;width:0;font-size:11.6px;color:#e0e0e0;font-weight:normal;"><span style="position:absolute;left:0;transform:translateX(-50%)">Force Field</span></div><div class="t" style="left:1849px;top:293.316px;width:0;font-size:11.6px;color:#e0e0e0;font-weight:normal;"><span style="position:absolute;left:0;transform:translateX(-50%)">Soft Body</span></div><div class="a" style="left:1625px;top:311.6px;width:137px;height:18.8px;background:#4a4a4a;border-radius:4px;"></div><div class="a" style="left:1772px;top:311.6px;width:138px;height:18.8px;background:#4a4a4a;border-radius:4px;"></div><div class="t" style="left:1701px;top:315.316px;width:0;font-size:11.6px;color:#e0e0e0;font-weight:normal;"><span style="position:absolute;left:0;transform:translateX(-50%)">Collision</span></div><div class="t" style="left:1849px;top:315.316px;width:0;font-size:11.6px;color:#e0e0e0;font-weight:normal;"><span style="position:absolute;left:0;transform:translateX(-50%)">Fluid</span></div><div class="a" style="left:1625px;top:333.5px;width:137px;height:18.5px;background:#4a4a4a;border-radius:4px;"></div><div class="a" style="left:1772px;top:333.5px;width:138px;height:18.5px;background:#4a4a4a;border-radius:4px;"></div><div class="t" style="left:1701px;top:337.066px;width:0;font-size:11.6px;color:#e0e0e0;font-weight:normal;"><span style="position:absolute;left:0;transform:translateX(-50%)">Cloth</span></div><div class="t" style="left:1849px;top:337.066px;width:0;font-size:11.6px;color:#e0e0e0;font-weight:normal;"><span style="position:absolute;left:0;transform:translateX(-50%)">Rigid Body</span></div><div class="a" style="left:1625px;top:355.5px;width:137px;height:18.5px;background:#4a4a4a;border-radius:4px;"></div><div class="a" style="left:1772px;top:355.5px;width:138px;height:18.5px;background:#4a4a4a;border-radius:4px;"></div><div class="t" style="left:1701px;top:359.066px;width:0;font-size:11.6px;color:#e0e0e0;font-weight:normal;"><span style="position:absolute;left:0;transform:translateX(-50%)">Dynamic Paint</span></div><div class="t" style="left:1849px;top:359.066px;width:0;font-size:11.6px;color:#e0e0e0;font-weight:normal;"><span style="position:absolute;left:0;transform:translateX(-50%)">Rigid Body Constraint</span></div><svg class="a" style="left:1616px;top:285px;" width="300" height="95" viewBox="1616 285 300 95"><path d="M1630,293 l4,5 l-4,5 M1634,293 l4,5 l-4,5 M1638,293 l4,5 l-4,5" fill="none" stroke="#ccc" stroke-width="1.1"/><path d="M1779,306 q0,-12 9,-12 q4,0 4,4 q-6,2 -8,8" fill="none" stroke="#ccc" stroke-width="1.1"/><rect x="1630" y="315" width="6" height="6" fill="none" stroke="#ccc" stroke-dasharray="2,1"/><rect x="1636" y="321" width="6" height="6" fill="none" stroke="#ccc"/><path d="M1783,314 q-4,6 -4,9 a4,4 0 0 0 8,0 q0,-3 -4,-9 z" fill="none" stroke="#ccc" stroke-width="1.1"/><path d="M1630,337 l4,-2 h6 l4,2 l-2,4 h-2 v8 h-6 v-8 h-2 z" fill="none" stroke="#ccc" stroke-width="1.1"/><path d="M1779,338 l8,8 M1787,338 l-8,8" stroke="#ccc" stroke-width="1.2"/><path d="M1631,371 q-2,-6 4,-8 q6,-2 8,2" fill="none" stroke="#ccc" stroke-width="1.1"/><path d="M1777,358 h10 M1782,358 v12" stroke="#ccc" stroke-width="1.3"/></svg><div class="a" style="left:1624px;top:385px;width:286px;height:375px;background:#333333;border-radius:5px;"></div><div class="t" style="left:1646px;top:392.316px;font-size:11.6px;color:#e6e6e6;font-weight:normal;">Rigid Body</div><div class="t" style="right:192px;top:422.316px;font-size:11.6px;color:#d0d0d0;font-weight:normal;">Type</div><div class="a" style="left:1738px;top:419px;width:144px;height:18px;background:#1e1e1e;border-radius:4px;"></div><div class="t" style="left:1745px;top:422.316px;font-size:11.6px;color:#e0e0e0;font-weight:normal;">Passive</div><div class="a" style="left:1624px;top:470.6px;width:286px;height:36.4px;background:#2f2f2f;border-radius:0px;"></div><div class="a" style="left:1624px;top:532px;width:286px;height:35px;background:#2f2f2f;border-radius:0px;"></div><div class="a" style="left:1624px;top:592.5px;width:286px;height:57.5px;background:#2f2f2f;border-radius:0px;"></div><div class="a" style="left:1624px;top:676px;width:286px;height:55px;background:#2f2f2f;border-radius:0px;"></div><div class="a" style="left:1624px;top:449px;width:286px;height:21.6px;background:#383838;border-radius:0px;"></div><div class="t" style="left:1660px;top:454.116px;font-size:11.6px;color:#e0e0e0;font-weight:normal;">Settings</div><div class="a" style="left:1624px;top:510px;width:286px;height:22px;background:#383838;border-radius:0px;"></div><div class="t" style="left:1660px;top:515.316px;font-size:11.6px;color:#e0e0e0;font-weight:normal;">Collisions</div><div class="a" style="left:1624px;top:571px;width:286px;height:21.5px;background:#383838;border-radius:0px;"></div><div class="t" style="left:1660px;top:576.066px;font-size:11.6px;color:#e0e0e0;font-weight:normal;">Surface Response</div><div class="a" style="left:1624px;top:655px;width:286px;height:21px;background:#383838;border-radius:0px;"></div><div class="t" style="left:1660px;top:659.816px;font-size:11.6px;color:#e0e0e0;font-weight:normal;">Sensitivity</div><div class="a" style="left:1624px;top:734px;width:286px;height:25px;background:#383838;border-radius:4px;"></div><div class="t" style="left:1660px;top:741.316px;font-size:11.6px;color:#e0e0e0;font-weight:normal;">Collections</div><div class="a" style="left:1737.5px;top:483px;width:12.5px;height:12.6px;background:#545454;border-radius:3px;"></div><div class="t" style="left:1754px;top:483.316px;font-size:11.6px;color:#e0e0e0;font-weight:normal;">Animated</div><div class="t" style="right:192px;top:544.316px;font-size:11.6px;color:#d0d0d0;font-weight:normal;">Shape</div><div class="a" style="left:1738px;top:541.5px;width:144px;height:18.1px;background:#1e1e1e;border-radius:4px;"></div><div class="t" style="left:1763px;top:544.816px;font-size:11.6px;color:#e0e0e0;font-weight:normal;">Box</div><div class="t" style="right:192px;top:605.316px;font-size:11.6px;color:#d0d0d0;font-weight:normal;">Friction</div><div class="a" style="left:1738px;top:601.7px;width:144px;height:18.8px;background:#4772b3;border-radius:4px;"></div><div class="t" style="left:1810px;top:605.316px;width:0;font-size:11.6px;color:#fff;font-weight:normal;"><span style="position:absolute;left:0;transform:translateX(-50%)">1.000</span></div><div class="t" style="right:192px;top:627.316px;font-size:11.6px;color:#d0d0d0;font-weight:normal;">Bounciness</div><div class="a" style="left:1738px;top:623.8px;width:144px;height:18.8px;background:#545454;border-radius:4px;"></div><div class="t" style="left:1810px;top:627.316px;width:0;font-size:11.6px;color:#e0e0e0;font-weight:normal;"><span style="position:absolute;left:0;transform:translateX(-50%)">0.000</span></div><div class="a" style="left:1737.5px;top:688px;width:12.5px;height:12px;background:#4772b3;border-radius:3px;"></div><div class="t" style="left:1754px;top:688.316px;font-size:11.6px;color:#e0e0e0;font-weight:normal;">Collision Margin</div><div class="t" style="right:192px;top:710.316px;font-size:11.6px;color:#d0d0d0;font-weight:normal;">Margin</div><div class="a" style="left:1738px;top:707px;width:144px;height:18px;background:#545454;border-radius:4px;"></div><div class="t" style="left:1810px;top:710.316px;width:0;font-size:11.6px;color:#e0e0e0;font-weight:normal;"><span style="position:absolute;left:0;transform:translateX(-50%)">0.01"</span></div><svg class="a" style="left:1616px;top:380px;" width="300" height="390" viewBox="1616 380 300 390"><path d="M1634,396.4 l3,3 l3,-3" fill="none" stroke="#ccc" stroke-width="1.3"/><path d="M1647,457.4 l3,3 l3,-3" fill="none" stroke="#ccc" stroke-width="1.3"/><path d="M1647,518.4 l3,3 l3,-3" fill="none" stroke="#ccc" stroke-width="1.3"/><path d="M1647,579.4 l3,3 l3,-3" fill="none" stroke="#ccc" stroke-width="1.3"/><path d="M1647,662.4 l3,3 l3,-3" fill="none" stroke="#ccc" stroke-width="1.3"/><path d="M1650,744 l3,3 l-3,3" fill="none" stroke="#ccc" stroke-width="1.3"/><path d="M1872,426.9 l3,3 l3,-3" fill="none" stroke="#cfcfcf" stroke-width="1.3"/><path d="M1872,548.9 l3,3 l3,-3" fill="none" stroke="#cfcfcf" stroke-width="1.3"/><circle cx="1891" cy="396" r="0.8" fill="#111"/><circle cx="1891" cy="398.5" r="0.8" fill="#111"/><circle cx="1893.2" cy="396" r="0.8" fill="#111"/><circle cx="1893.2" cy="398.5" r="0.8" fill="#111"/><circle cx="1895.4" cy="396" r="0.8" fill="#111"/><circle cx="1895.4" cy="398.5" r="0.8" fill="#111"/><circle cx="1897.6" cy="396" r="0.8" fill="#111"/><circle cx="1897.6" cy="398.5" r="0.8" fill="#111"/><circle cx="1899.8" cy="396" r="0.8" fill="#111"/><circle cx="1899.8" cy="398.5" r="0.8" fill="#111"/><circle cx="1893" cy="489" r="2" fill="#ddd"/><circle cx="1893" cy="611" r="2" fill="#ddd"/><circle cx="1893" cy="633" r="2" fill="#ddd"/><circle cx="1893" cy="694" r="2" fill="#ddd"/><circle cx="1893" cy="716" r="2" fill="#ddd"/><path d="M1740,694 l3,3 l5,-6" fill="none" stroke="#fff" stroke-width="1.6"/><path d="M1745,545 h8 l3,-3 M1745,545 v10 h8 v-10 M1753,555 l3,-3 v-10 h-8 l-3,3" fill="none" stroke="#ddd" stroke-width="1.1"/></svg><div class="a" style="left:2px;top:915px;width:1583px;height:95px;background:#2b2b2b;border-radius:6px;"></div><div class="a" style="left:2px;top:915px;width:1583px;height:26px;background:#303030;border-radius:6px 6px 0 0;"></div><div class="a" style="left:8px;top:920px;width:31px;height:17.7px;background:#232323;border-radius:4px;"></div><div class="a" style="left:45.7px;top:920px;width:132.3px;height:17.7px;background:#232323;border-radius:4px;"></div><div class="a" style="left:117px;top:920px;width:1px;height:17.7px;background:#303030;border-radius:0px;"></div><div class="t" style="left:53px;top:923.316px;font-size:11.6px;color:#e0e0e0;font-weight:normal;">Playback</div><div class="t" style="left:125px;top:923.316px;font-size:11.6px;color:#e0e0e0;font-weight:normal;">Keying</div><div class="t" style="left:187.7px;top:923.316px;font-size:11.6px;color:#dcdcdc;font-weight:normal;">View</div><div class="t" style="left:229px;top:923.316px;font-size:11.6px;color:#dcdcdc;font-weight:normal;">Marker</div><div class="a" style="left:701px;top:920px;width:37.5px;height:17.5px;background:#232323;border-radius:4px;"></div><div class="a" style="left:701px;top:920px;width:19px;height:17.5px;background:#454545;border-radius:4px 0 0 4px;"></div><div class="a" style="left:746px;top:920px;width:118px;height:17.5px;background:#454545;border-radius:4px;"></div><div class="a" style="left:1305px;top:920px;width:72.5px;height:17.5px;background:#545454;border-radius:4px;"></div><div class="t" style="left:1341px;top:923.316px;width:0;font-size:11.6px;color:#e0e0e0;font-weight:normal;"><span style="position:absolute;left:0;transform:translateX(-50%)">0</span></div><div class="a" style="left:1385px;top:920px;width:192.5px;height:17.5px;background:#545454;border-radius:4px;"></div><div class="a" style="left:1385px;top:920px;width:17.5px;height:17.5px;background:#3d3d3d;border-radius:4px 0 0 4px;"></div><div class="a" style="left:1492.5px;top:920px;width:2.5px;height:17.5px;background:#303030;border-radius:0px;"></div><div class="t" style="left:1419px;top:923.316px;font-size:11.6px;color:#e0e0e0;font-weight:normal;">Start</div><div class="t" style="right:440px;top:923.316px;font-size:11.6px;color:#e0e0e0;font-weight:normal;">1</div><div class="t" style="left:1509px;top:923.316px;font-size:11.6px;color:#e0e0e0;font-weight:normal;">End</div><div class="t" style="right:355px;top:923.316px;font-size:11.6px;color:#e0e0e0;font-weight:normal;">300</div><div class="a" style="left:2px;top:941px;width:198px;height:67px;background:#1f1f1f;border-radius:0 0 0 6px;"></div><div class="a" style="left:4px;top:943px;width:171px;height:18.7px;background:#1d1d1d;border-radius:4px;border:1px solid #3a3a3a"></div><div class="a" style="left:175px;top:943px;width:22px;height:18.7px;background:#4a4a4a;border-radius:0 4px 4px 0;"></div><div class="t" style="left:27px;top:946.816px;font-size:11.6px;color:#777;font-weight:normal;">Search</div><div class="a" style="left:3px;top:965.7px;width:197px;height:17.6px;background:#5a2a2a;border-radius:4px 0 0 4px;"></div><div class="t" style="left:20px;top:968.816px;font-size:11.6px;color:#e6e6e6;font-weight:normal;">Summary</div><div class="a" style="left:200px;top:943px;width:1165px;height:20px;background:#1f1f1f;border-radius:0px;"></div><div class="a" style="left:200px;top:963px;width:43px;height:45px;background:#222222;border-radius:0px;"></div><div class="a" style="left:243px;top:963px;width:1122px;height:45px;background:#2c2c2c;border-radius:0px;"></div><div class="a" style="left:1365px;top:943px;width:220px;height:65px;background:#242424;border-radius:0 0 6px 0;"></div><svg class="a" style="left:0px;top:915px;" width="1600" height="95" viewBox="0 915 1600 95"><line x1="238" y1="963" x2="238" y2="1008" stroke="#1c1c1c" stroke-width="1"/><line x1="281.35" y1="963" x2="281.35" y2="1008" stroke="#1c1c1c" stroke-width="1"/><line x1="324.7" y1="963" x2="324.7" y2="1008" stroke="#1c1c1c" stroke-width="1"/><line x1="368.05" y1="963" x2="368.05" y2="1008" stroke="#1c1c1c" stroke-width="1"/><line x1="411.4" y1="963" x2="411.4" y2="1008" stroke="#1c1c1c" stroke-width="1"/><line x1="454.75" y1="963" x2="454.75" y2="1008" stroke="#1c1c1c" stroke-width="1"/><line x1="498.1" y1="963" x2="498.1" y2="1008" stroke="#1c1c1c" stroke-width="1"/><line x1="541.45" y1="963" x2="541.45" y2="1008" stroke="#1c1c1c" stroke-width="1"/><line x1="584.8" y1="963" x2="584.8" y2="1008" stroke="#1c1c1c" stroke-width="1"/><line x1="628.15" y1="963" x2="628.15" y2="1008" stroke="#1c1c1c" stroke-width="1"/><line x1="671.5" y1="963" x2="671.5" y2="1008" stroke="#1c1c1c" stroke-width="1"/><line x1="714.85" y1="963" x2="714.85" y2="1008" stroke="#1c1c1c" stroke-width="1"/><line x1="758.2" y1="963" x2="758.2" y2="1008" stroke="#1c1c1c" stroke-width="1"/><line x1="801.55" y1="963" x2="801.55" y2="1008" stroke="#1c1c1c" stroke-width="1"/><line x1="844.9" y1="963" x2="844.9" y2="1008" stroke="#1c1c1c" stroke-width="1"/><line x1="888.25" y1="963" x2="888.25" y2="1008" stroke="#1c1c1c" stroke-width="1"/><line x1="931.6" y1="963" x2="931.6" y2="1008" stroke="#1c1c1c" stroke-width="1"/><line x1="974.95" y1="963" x2="974.95" y2="1008" stroke="#1c1c1c" stroke-width="1"/><line x1="1018.3" y1="963" x2="1018.3" y2="1008" stroke="#1c1c1c" stroke-width="1"/><line x1="1061.65" y1="963" x2="1061.65" y2="1008" stroke="#1c1c1c" stroke-width="1"/><line x1="1105" y1="963" x2="1105" y2="1008" stroke="#1c1c1c" stroke-width="1"/><line x1="1148.35" y1="963" x2="1148.35" y2="1008" stroke="#1c1c1c" stroke-width="1"/><line x1="1191.7" y1="963" x2="1191.7" y2="1008" stroke="#1c1c1c" stroke-width="1"/><line x1="1235.05" y1="963" x2="1235.05" y2="1008" stroke="#1c1c1c" stroke-width="1"/><line x1="1278.4" y1="963" x2="1278.4" y2="1008" stroke="#1c1c1c" stroke-width="1"/><line x1="1321.75" y1="963" x2="1321.75" y2="1008" stroke="#1c1c1c" stroke-width="1"/><defs><pattern id="hz" width="8" height="4" patternUnits="userSpaceOnUse"><rect width="8" height="4" fill="#3d3222"/><path d="M0,4 l4,-4 h4.5 l-4,4 z" fill="#9a7028"/></pattern></defs><rect x="243" y="996" width="278" height="4" fill="url(#hz)"/><rect x="209" y="1002" width="981" height="6" rx="3" fill="#4f4f4f"/><circle cx="213" cy="1005" r="2.2" fill="#2f2f2f"/><circle cx="1187" cy="1005" r="2.2" fill="#2f2f2f"/><rect x="1360" y="950" width="3" height="40" rx="1.5" fill="#3a3a3a"/><rect x="1579" y="950" width="3" height="30" rx="1.5" fill="#3a3a3a"/><line x1="243.5" y1="963" x2="243.5" y2="1008" stroke="#111" stroke-width="1.2"/><line x1="238" y1="961" x2="238" y2="1010" stroke="#4772b3" stroke-width="2"/><rect x="227" y="944" width="23" height="17" rx="4" fill="#4772b3"/><path d="M30,927.9 l3,3 l3,-3" fill="none" stroke="#cfcfcf" stroke-width="1.3"/><path d="M107.5,927.9 l3,3 l3,-3" fill="none" stroke="#cfcfcf" stroke-width="1.3"/><path d="M168,927.9 l3,3 l3,-3" fill="none" stroke="#cfcfcf" stroke-width="1.3"/><path d="M726,927.9 l3,3 l3,-3" fill="none" stroke="#777" stroke-width="1.3"/><circle cx="20" cy="929" r="6.5" fill="#ddd"/><path d="M20,929 l-3,-5 a6,6 0 0 0 -2,9 z" fill="#232323"/><circle cx="710.5" cy="928.7" r="4.5" fill="none" stroke="#bbb" stroke-width="1.2"/><path d="M751,924 v9 M761,924 l-7,4.5 l7,4.5 z" stroke="#eee" fill="#eee" stroke-width="1.5"/><path d="M769,928.5 l5,-4 l5,4 l-5,4 z M776,928.5 l5,-4 v8 z" fill="#eee"/><path d="M800,924 l-8,4.5 l8,4.5 z" fill="#eee"/><path d="M810,924 l8,4.5 l-8,4.5 z" fill="#eee"/><path d="M829,924 l5,4.5 l-5,4.5 z M833,928.5 l5,-4 l5,4 l-5,4 z" fill="#eee"/><path d="M850,924 l7,4.5 l-7,4.5 z M859,924 v9" stroke="#eee" fill="#eee" stroke-width="1.5"/><circle cx="1394" cy="929.5" r="5.5" fill="none" stroke="#ddd" stroke-width="1.3"/><path d="M1394,929.5 v-3 M1392,922 h4" stroke="#ddd" stroke-width="1.2"/><circle cx="16" cy="952" r="4.5" fill="none" stroke="#ccc" stroke-width="1.2"/><path d="M12.5,955.5 l-4,4" stroke="#ccc" stroke-width="1.3"/><path d="M179,952.5 h14 M179,952.5 l3,-3 M179,952.5 l3,3 M193,952.5 l-3,-3 M193,952.5 l-3,3" stroke="#eee" stroke-width="1.2" fill="none"/><path d="M7,971 l4,4 l4,-4" fill="none" stroke="#ddd" stroke-width="1.3"/></svg><div class="t" style="left:238px;top:946.816px;width:0;font-size:11.6px;color:#fff;font-weight:normal;"><span style="position:absolute;left:0;transform:translateX(-50%)">0</span></div><div class="t" style="left:324.7px;top:946.816px;width:0;font-size:11.6px;color:#c8c8c8;font-weight:normal;"><span style="position:absolute;left:0;transform:translateX(-50%)">20</span></div><div class="t" style="left:411.4px;top:946.816px;width:0;font-size:11.6px;color:#c8c8c8;font-weight:normal;"><span style="position:absolute;left:0;transform:translateX(-50%)">40</span></div><div class="t" style="left:498.1px;top:946.816px;width:0;font-size:11.6px;color:#c8c8c8;font-weight:normal;"><span style="position:absolute;left:0;transform:translateX(-50%)">60</span></div><div class="t" style="left:584.8px;top:946.816px;width:0;font-size:11.6px;color:#c8c8c8;font-weight:normal;"><span style="position:absolute;left:0;transform:translateX(-50%)">80</span></div><div class="t" style="left:671.5px;top:946.816px;width:0;font-size:11.6px;color:#c8c8c8;font-weight:normal;"><span style="position:absolute;left:0;transform:translateX(-50%)">100</span></div><div class="t" style="left:758.2px;top:946.816px;width:0;font-size:11.6px;color:#c8c8c8;font-weight:normal;"><span style="position:absolute;left:0;transform:translateX(-50%)">120</span></div><div class="t" style="left:844.9px;top:946.816px;width:0;font-size:11.6px;color:#c8c8c8;font-weight:normal;"><span style="position:absolute;left:0;transform:translateX(-50%)">140</span></div><div class="t" style="left:931.6px;top:946.816px;width:0;font-size:11.6px;color:#c8c8c8;font-weight:normal;"><span style="position:absolute;left:0;transform:translateX(-50%)">160</span></div><div class="t" style="left:1018.3px;top:946.816px;width:0;font-size:11.6px;color:#c8c8c8;font-weight:normal;"><span style="position:absolute;left:0;transform:translateX(-50%)">180</span></div><div class="t" style="left:1105px;top:946.816px;width:0;font-size:11.6px;color:#c8c8c8;font-weight:normal;"><span style="position:absolute;left:0;transform:translateX(-50%)">200</span></div><div class="t" style="left:1191.7px;top:946.816px;width:0;font-size:11.6px;color:#c8c8c8;font-weight:normal;"><span style="position:absolute;left:0;transform:translateX(-50%)">220</span></div><div class="t" style="left:1278.4px;top:946.816px;width:0;font-size:11.6px;color:#c8c8c8;font-weight:normal;"><span style="position:absolute;left:0;transform:translateX(-50%)">240</span></div><div class="a" style="left:0px;top:1010px;width:1920px;height:22px;background:#1a1a1a;border-radius:0px;"></div><div class="t" style="left:34px;top:1015.82px;font-size:11.6px;color:#c8c8c8;font-weight:normal;">Select</div><div class="t" style="left:245px;top:1015.82px;font-size:11.6px;color:#c8c8c8;font-weight:normal;">Rotate View</div><div class="t" style="left:456px;top:1015.82px;font-size:11.6px;color:#c8c8c8;font-weight:normal;">Call Menu</div><svg class="a" style="left:0px;top:1010px;" width="520" height="22" viewBox="0 1010 520 22"><rect x="11" y="1014" width="11" height="15" rx="5" fill="none" stroke="#aaa" stroke-width="1.1"/><path d="M11,1020 h5.5 v-6" fill="#ddd"/><rect x="222" y="1014" width="11" height="15" rx="5" fill="none" stroke="#aaa" stroke-width="1.1"/><rect x="226" y="1016" width="3" height="5" fill="#ddd"/><rect x="433" y="1014" width="11" height="15" rx="5" fill="none" stroke="#aaa" stroke-width="1.1"/><path d="M438.5,1014 v6 h5.5" fill="#ddd"/></svg><div class="t" style="left:1520.1px;top:1015.82px;font-size:11.6px;color:#b4b4b4;font-weight:normal;letter-spacing:0.25px">Plane</div><div class="t" style="left:1558.6px;top:1015.82px;font-size:11.6px;color:#b4b4b4;font-weight:normal;letter-spacing:0.25px">Verts:8/8</div><div class="t" style="left:1617px;top:1015.82px;font-size:11.6px;color:#b4b4b4;font-weight:normal;letter-spacing:0.25px">Edges:12/12</div><div class="t" style="left:1694.3px;top:1015.82px;font-size:11.6px;color:#b4b4b4;font-weight:normal;letter-spacing:0.25px">Faces:6/6</div><div class="t" style="left:1756.5px;top:1015.82px;font-size:11.6px;color:#b4b4b4;font-weight:normal;letter-spacing:0.25px">Tris:12</div><div class="t" style="left:1802.6px;top:1015.82px;font-size:11.6px;color:#b4b4b4;font-weight:normal;letter-spacing:0.25px">Objects:1/30</div><div class="t" style="left:1880.7px;top:1015.82px;font-size:11.6px;color:#b4b4b4;font-weight:normal;letter-spacing:0.25px">4.1.0</div><svg class="a" style="left:1500px;top:1010px;" width="420" height="22" viewBox="1500 1010 420 22"><line x1="1553.7" y1="1016.5" x2="1553.7" y2="1028.5" stroke="#8a8a8a" stroke-width="1"/><line x1="1612.5" y1="1016.5" x2="1612.5" y2="1028.5" stroke="#8a8a8a" stroke-width="1"/><line x1="1689.8" y1="1016.5" x2="1689.8" y2="1028.5" stroke="#8a8a8a" stroke-width="1"/><line x1="1751.5" y1="1016.5" x2="1751.5" y2="1028.5" stroke="#8a8a8a" stroke-width="1"/><line x1="1798.1" y1="1016.5" x2="1798.1" y2="1028.5" stroke="#8a8a8a" stroke-width="1"/><line x1="1875.8" y1="1016.5" x2="1875.8" y2="1028.5" stroke="#8a8a8a" stroke-width="1"/></svg></body></html>
